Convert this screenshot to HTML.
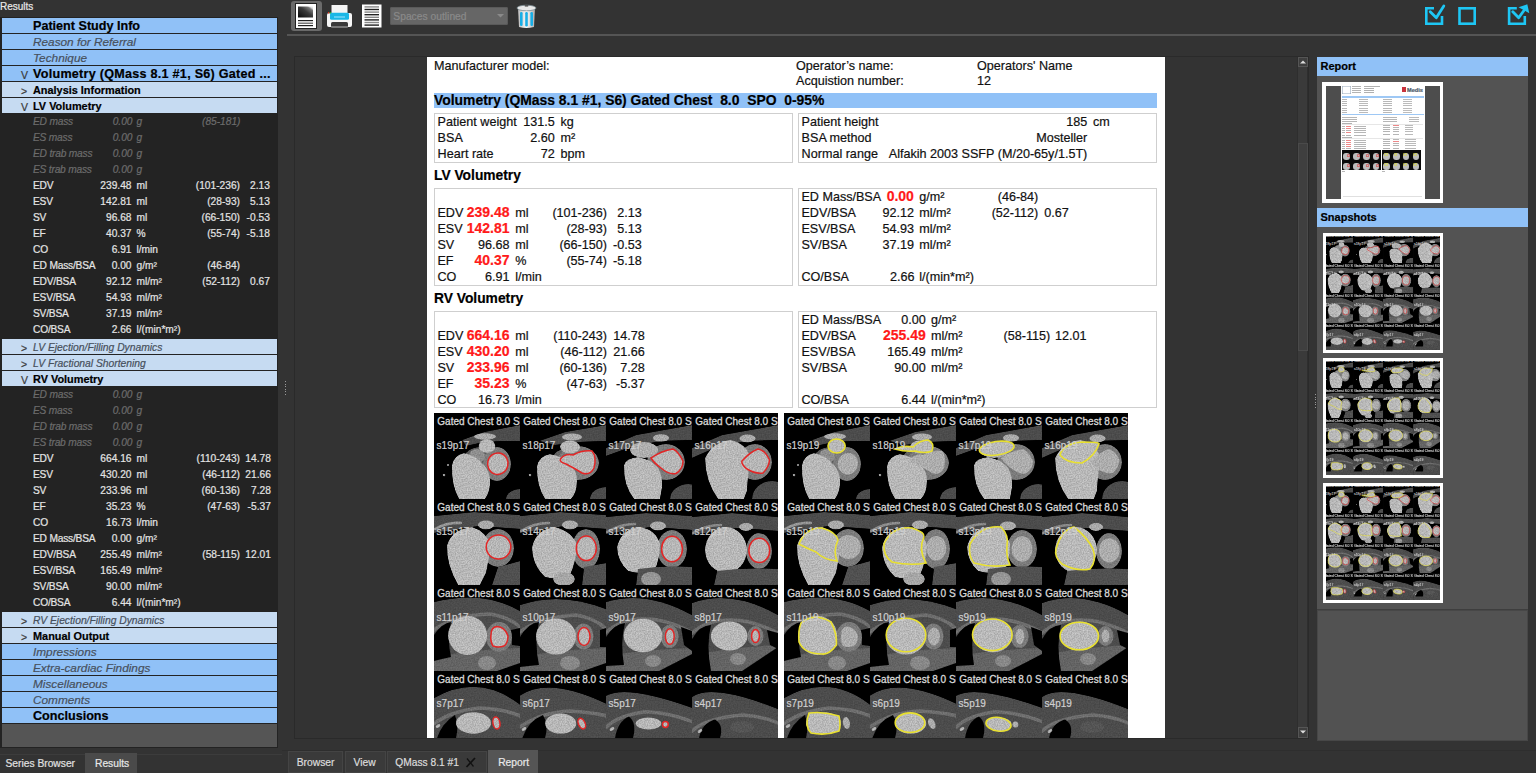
<!DOCTYPE html><html><head><meta charset="utf-8"><style>
html,body{margin:0;padding:0;}
body{width:1536px;height:773px;overflow:hidden;background:#333333;position:relative;font-family:"Liberation Sans",sans-serif;}
.t{position:absolute;white-space:pre;-webkit-text-stroke:0.2px currentColor;}
.r{position:absolute;}
</style></head><body>
<div class="t" style="top:1.73px;font-size:10px;line-height:10px;color:#e8e8e8;left:0.00px;">Results</div><div class="r" style="left:0px;top:17px;width:278px;height:731px;background:#232323;"></div><div class="r" style="left:2px;top:18px;width:275px;height:15px;background:#90c1f7;"></div><div class="t" style="top:20.33px;font-size:12.6px;line-height:12.6px;font-weight:bold;color:#000;left:33.00px;">Patient Study Info</div><div class="r" style="left:2px;top:34px;width:275px;height:15px;background:#90c1f7;"></div><div class="t" style="top:37.01px;font-size:11.8px;line-height:11.8px;font-style:italic;color:#47505c;left:33.00px;">Reason for Referral</div><div class="r" style="left:2px;top:50px;width:275px;height:15px;background:#90c1f7;"></div><div class="t" style="top:53.01px;font-size:11.8px;line-height:11.8px;font-style:italic;color:#47505c;left:33.00px;">Technique</div><div class="r" style="left:2px;top:66px;width:275px;height:15px;background:#90c1f7;"></div><div class="t" style="top:68.33px;font-size:12.6px;line-height:12.6px;font-weight:bold;color:#000;left:33.00px;letter-spacing:0.26px;">Volumetry (QMass 8.1 #1, S6) Gated ...</div><div class="t" style="top:70.11px;font-size:10.5px;line-height:10.5px;color:#3a3a3a;left:21.00px;">V</div><div class="r" style="left:2px;top:82px;width:275px;height:15px;background:#c6dbf2;"></div><div class="t" style="top:85.37px;font-size:10.9px;line-height:10.9px;font-weight:bold;color:#000;left:33.00px;">Analysis Information</div><div class="t" style="top:85.71px;font-size:10.5px;line-height:10.5px;color:#3a3a3a;left:21.00px;">></div><div class="r" style="left:2px;top:98px;width:275px;height:15px;background:#c6dbf2;"></div><div class="t" style="top:101.37px;font-size:10.9px;line-height:10.9px;font-weight:bold;color:#000;left:33.00px;">LV Volumetry</div><div class="t" style="top:101.71px;font-size:10.5px;line-height:10.5px;color:#3a3a3a;left:21.00px;">V</div><div class="t" style="top:116.67px;font-size:10.2px;line-height:10.2px;font-style:italic;color:#6c6c6c;left:33.00px;letter-spacing:-0.2px;">ED mass</div><div class="t" style="top:116.67px;font-size:10.2px;line-height:10.2px;font-style:italic;color:#6c6c6c;left:-267.50px;width:400px;text-align:right;">0.00</div><div class="t" style="top:116.67px;font-size:10.2px;line-height:10.2px;font-style:italic;color:#6c6c6c;left:136.50px;">g</div><div class="t" style="top:116.67px;font-size:10.2px;line-height:10.2px;font-style:italic;color:#6c6c6c;left:-159.50px;width:400px;text-align:right;">(85-181)</div><div class="t" style="top:132.67px;font-size:10.2px;line-height:10.2px;font-style:italic;color:#6c6c6c;left:33.00px;letter-spacing:-0.2px;">ES mass</div><div class="t" style="top:132.67px;font-size:10.2px;line-height:10.2px;font-style:italic;color:#6c6c6c;left:-267.50px;width:400px;text-align:right;">0.00</div><div class="t" style="top:132.67px;font-size:10.2px;line-height:10.2px;font-style:italic;color:#6c6c6c;left:136.50px;">g</div><div class="t" style="top:148.67px;font-size:10.2px;line-height:10.2px;font-style:italic;color:#6c6c6c;left:33.00px;letter-spacing:-0.2px;">ED trab mass</div><div class="t" style="top:148.67px;font-size:10.2px;line-height:10.2px;font-style:italic;color:#6c6c6c;left:-267.50px;width:400px;text-align:right;">0.00</div><div class="t" style="top:148.67px;font-size:10.2px;line-height:10.2px;font-style:italic;color:#6c6c6c;left:136.50px;">g</div><div class="t" style="top:164.67px;font-size:10.2px;line-height:10.2px;font-style:italic;color:#6c6c6c;left:33.00px;letter-spacing:-0.2px;">ES trab mass</div><div class="t" style="top:164.67px;font-size:10.2px;line-height:10.2px;font-style:italic;color:#6c6c6c;left:-267.50px;width:400px;text-align:right;">0.00</div><div class="t" style="top:164.67px;font-size:10.2px;line-height:10.2px;font-style:italic;color:#6c6c6c;left:136.50px;">g</div><div class="t" style="top:180.67px;font-size:10.2px;line-height:10.2px;color:#e4e4e4;left:33.00px;letter-spacing:-0.2px;">EDV</div><div class="t" style="top:180.67px;font-size:10.2px;line-height:10.2px;color:#e4e4e4;left:-268.50px;width:400px;text-align:right;">239.48</div><div class="t" style="top:180.67px;font-size:10.2px;line-height:10.2px;color:#e4e4e4;left:136.50px;">ml</div><div class="t" style="top:180.67px;font-size:10.2px;line-height:10.2px;color:#e4e4e4;left:-160.00px;width:400px;text-align:right;">(101-236)</div><div class="t" style="top:180.67px;font-size:10.2px;line-height:10.2px;color:#e4e4e4;left:-130.20px;width:400px;text-align:right;">2.13</div><div class="t" style="top:196.67px;font-size:10.2px;line-height:10.2px;color:#e4e4e4;left:33.00px;letter-spacing:-0.2px;">ESV</div><div class="t" style="top:196.67px;font-size:10.2px;line-height:10.2px;color:#e4e4e4;left:-268.50px;width:400px;text-align:right;">142.81</div><div class="t" style="top:196.67px;font-size:10.2px;line-height:10.2px;color:#e4e4e4;left:136.50px;">ml</div><div class="t" style="top:196.67px;font-size:10.2px;line-height:10.2px;color:#e4e4e4;left:-160.00px;width:400px;text-align:right;">(28-93)</div><div class="t" style="top:196.67px;font-size:10.2px;line-height:10.2px;color:#e4e4e4;left:-130.20px;width:400px;text-align:right;">5.13</div><div class="t" style="top:212.67px;font-size:10.2px;line-height:10.2px;color:#e4e4e4;left:33.00px;letter-spacing:-0.2px;">SV</div><div class="t" style="top:212.67px;font-size:10.2px;line-height:10.2px;color:#e4e4e4;left:-268.50px;width:400px;text-align:right;">96.68</div><div class="t" style="top:212.67px;font-size:10.2px;line-height:10.2px;color:#e4e4e4;left:136.50px;">ml</div><div class="t" style="top:212.67px;font-size:10.2px;line-height:10.2px;color:#e4e4e4;left:-160.00px;width:400px;text-align:right;">(66-150)</div><div class="t" style="top:212.67px;font-size:10.2px;line-height:10.2px;color:#e4e4e4;left:-130.20px;width:400px;text-align:right;">-0.53</div><div class="t" style="top:228.67px;font-size:10.2px;line-height:10.2px;color:#e4e4e4;left:33.00px;letter-spacing:-0.2px;">EF</div><div class="t" style="top:228.67px;font-size:10.2px;line-height:10.2px;color:#e4e4e4;left:-268.50px;width:400px;text-align:right;">40.37</div><div class="t" style="top:228.67px;font-size:10.2px;line-height:10.2px;color:#e4e4e4;left:136.50px;">%</div><div class="t" style="top:228.67px;font-size:10.2px;line-height:10.2px;color:#e4e4e4;left:-160.00px;width:400px;text-align:right;">(55-74)</div><div class="t" style="top:228.67px;font-size:10.2px;line-height:10.2px;color:#e4e4e4;left:-130.20px;width:400px;text-align:right;">-5.18</div><div class="t" style="top:244.67px;font-size:10.2px;line-height:10.2px;color:#e4e4e4;left:33.00px;letter-spacing:-0.2px;">CO</div><div class="t" style="top:244.67px;font-size:10.2px;line-height:10.2px;color:#e4e4e4;left:-268.50px;width:400px;text-align:right;">6.91</div><div class="t" style="top:244.67px;font-size:10.2px;line-height:10.2px;color:#e4e4e4;left:136.50px;">l/min</div><div class="t" style="top:260.67px;font-size:10.2px;line-height:10.2px;color:#e4e4e4;left:33.00px;letter-spacing:-0.2px;">ED Mass/BSA</div><div class="t" style="top:260.67px;font-size:10.2px;line-height:10.2px;color:#e4e4e4;left:-268.50px;width:400px;text-align:right;">0.00</div><div class="t" style="top:260.67px;font-size:10.2px;line-height:10.2px;color:#e4e4e4;left:136.50px;">g/m²</div><div class="t" style="top:260.67px;font-size:10.2px;line-height:10.2px;color:#e4e4e4;left:-160.00px;width:400px;text-align:right;">(46-84)</div><div class="t" style="top:276.67px;font-size:10.2px;line-height:10.2px;color:#e4e4e4;left:33.00px;letter-spacing:-0.2px;">EDV/BSA</div><div class="t" style="top:276.67px;font-size:10.2px;line-height:10.2px;color:#e4e4e4;left:-268.50px;width:400px;text-align:right;">92.12</div><div class="t" style="top:276.67px;font-size:10.2px;line-height:10.2px;color:#e4e4e4;left:136.50px;">ml/m²</div><div class="t" style="top:276.67px;font-size:10.2px;line-height:10.2px;color:#e4e4e4;left:-160.00px;width:400px;text-align:right;">(52-112)</div><div class="t" style="top:276.67px;font-size:10.2px;line-height:10.2px;color:#e4e4e4;left:-130.20px;width:400px;text-align:right;">0.67</div><div class="t" style="top:292.67px;font-size:10.2px;line-height:10.2px;color:#e4e4e4;left:33.00px;letter-spacing:-0.2px;">ESV/BSA</div><div class="t" style="top:292.67px;font-size:10.2px;line-height:10.2px;color:#e4e4e4;left:-268.50px;width:400px;text-align:right;">54.93</div><div class="t" style="top:292.67px;font-size:10.2px;line-height:10.2px;color:#e4e4e4;left:136.50px;">ml/m²</div><div class="t" style="top:308.67px;font-size:10.2px;line-height:10.2px;color:#e4e4e4;left:33.00px;letter-spacing:-0.2px;">SV/BSA</div><div class="t" style="top:308.67px;font-size:10.2px;line-height:10.2px;color:#e4e4e4;left:-268.50px;width:400px;text-align:right;">37.19</div><div class="t" style="top:308.67px;font-size:10.2px;line-height:10.2px;color:#e4e4e4;left:136.50px;">ml/m²</div><div class="t" style="top:324.67px;font-size:10.2px;line-height:10.2px;color:#e4e4e4;left:33.00px;letter-spacing:-0.2px;">CO/BSA</div><div class="t" style="top:324.67px;font-size:10.2px;line-height:10.2px;color:#e4e4e4;left:-268.50px;width:400px;text-align:right;">2.66</div><div class="t" style="top:324.67px;font-size:10.2px;line-height:10.2px;color:#e4e4e4;left:136.50px;">l/(min*m²)</div><div class="r" style="left:2px;top:339px;width:275px;height:15px;background:#c6dbf2;"></div><div class="t" style="top:342.88px;font-size:10.3px;line-height:10.3px;font-style:italic;color:#47505c;left:33.00px;">LV Ejection/Filling Dynamics</div><div class="t" style="top:342.71px;font-size:10.5px;line-height:10.5px;color:#3a3a3a;left:21.00px;">></div><div class="r" style="left:2px;top:355px;width:275px;height:15px;background:#c6dbf2;"></div><div class="t" style="top:358.88px;font-size:10.3px;line-height:10.3px;font-style:italic;color:#47505c;left:33.00px;">LV Fractional Shortening</div><div class="t" style="top:358.71px;font-size:10.5px;line-height:10.5px;color:#3a3a3a;left:21.00px;">></div><div class="r" style="left:2px;top:371px;width:275px;height:15px;background:#c6dbf2;"></div><div class="t" style="top:374.37px;font-size:10.9px;line-height:10.9px;font-weight:bold;color:#000;left:33.00px;">RV Volumetry</div><div class="t" style="top:374.71px;font-size:10.5px;line-height:10.5px;color:#3a3a3a;left:21.00px;">V</div><div class="t" style="top:389.67px;font-size:10.2px;line-height:10.2px;font-style:italic;color:#6c6c6c;left:33.00px;letter-spacing:-0.2px;">ED mass</div><div class="t" style="top:389.67px;font-size:10.2px;line-height:10.2px;font-style:italic;color:#6c6c6c;left:-267.50px;width:400px;text-align:right;">0.00</div><div class="t" style="top:389.67px;font-size:10.2px;line-height:10.2px;font-style:italic;color:#6c6c6c;left:136.50px;">g</div><div class="t" style="top:405.67px;font-size:10.2px;line-height:10.2px;font-style:italic;color:#6c6c6c;left:33.00px;letter-spacing:-0.2px;">ES mass</div><div class="t" style="top:405.67px;font-size:10.2px;line-height:10.2px;font-style:italic;color:#6c6c6c;left:-267.50px;width:400px;text-align:right;">0.00</div><div class="t" style="top:405.67px;font-size:10.2px;line-height:10.2px;font-style:italic;color:#6c6c6c;left:136.50px;">g</div><div class="t" style="top:421.67px;font-size:10.2px;line-height:10.2px;font-style:italic;color:#6c6c6c;left:33.00px;letter-spacing:-0.2px;">ED trab mass</div><div class="t" style="top:421.67px;font-size:10.2px;line-height:10.2px;font-style:italic;color:#6c6c6c;left:-267.50px;width:400px;text-align:right;">0.00</div><div class="t" style="top:421.67px;font-size:10.2px;line-height:10.2px;font-style:italic;color:#6c6c6c;left:136.50px;">g</div><div class="t" style="top:437.67px;font-size:10.2px;line-height:10.2px;font-style:italic;color:#6c6c6c;left:33.00px;letter-spacing:-0.2px;">ES trab mass</div><div class="t" style="top:437.67px;font-size:10.2px;line-height:10.2px;font-style:italic;color:#6c6c6c;left:-267.50px;width:400px;text-align:right;">0.00</div><div class="t" style="top:437.67px;font-size:10.2px;line-height:10.2px;font-style:italic;color:#6c6c6c;left:136.50px;">g</div><div class="t" style="top:453.67px;font-size:10.2px;line-height:10.2px;color:#e4e4e4;left:33.00px;letter-spacing:-0.2px;">EDV</div><div class="t" style="top:453.67px;font-size:10.2px;line-height:10.2px;color:#e4e4e4;left:-268.50px;width:400px;text-align:right;">664.16</div><div class="t" style="top:453.67px;font-size:10.2px;line-height:10.2px;color:#e4e4e4;left:136.50px;">ml</div><div class="t" style="top:453.67px;font-size:10.2px;line-height:10.2px;color:#e4e4e4;left:-160.00px;width:400px;text-align:right;">(110-243)</div><div class="t" style="top:453.67px;font-size:10.2px;line-height:10.2px;color:#e4e4e4;left:-129.20px;width:400px;text-align:right;">14.78</div><div class="t" style="top:469.67px;font-size:10.2px;line-height:10.2px;color:#e4e4e4;left:33.00px;letter-spacing:-0.2px;">ESV</div><div class="t" style="top:469.67px;font-size:10.2px;line-height:10.2px;color:#e4e4e4;left:-268.50px;width:400px;text-align:right;">430.20</div><div class="t" style="top:469.67px;font-size:10.2px;line-height:10.2px;color:#e4e4e4;left:136.50px;">ml</div><div class="t" style="top:469.67px;font-size:10.2px;line-height:10.2px;color:#e4e4e4;left:-160.00px;width:400px;text-align:right;">(46-112)</div><div class="t" style="top:469.67px;font-size:10.2px;line-height:10.2px;color:#e4e4e4;left:-129.20px;width:400px;text-align:right;">21.66</div><div class="t" style="top:485.67px;font-size:10.2px;line-height:10.2px;color:#e4e4e4;left:33.00px;letter-spacing:-0.2px;">SV</div><div class="t" style="top:485.67px;font-size:10.2px;line-height:10.2px;color:#e4e4e4;left:-268.50px;width:400px;text-align:right;">233.96</div><div class="t" style="top:485.67px;font-size:10.2px;line-height:10.2px;color:#e4e4e4;left:136.50px;">ml</div><div class="t" style="top:485.67px;font-size:10.2px;line-height:10.2px;color:#e4e4e4;left:-160.00px;width:400px;text-align:right;">(60-136)</div><div class="t" style="top:485.67px;font-size:10.2px;line-height:10.2px;color:#e4e4e4;left:-129.20px;width:400px;text-align:right;">7.28</div><div class="t" style="top:501.67px;font-size:10.2px;line-height:10.2px;color:#e4e4e4;left:33.00px;letter-spacing:-0.2px;">EF</div><div class="t" style="top:501.67px;font-size:10.2px;line-height:10.2px;color:#e4e4e4;left:-268.50px;width:400px;text-align:right;">35.23</div><div class="t" style="top:501.67px;font-size:10.2px;line-height:10.2px;color:#e4e4e4;left:136.50px;">%</div><div class="t" style="top:501.67px;font-size:10.2px;line-height:10.2px;color:#e4e4e4;left:-160.00px;width:400px;text-align:right;">(47-63)</div><div class="t" style="top:501.67px;font-size:10.2px;line-height:10.2px;color:#e4e4e4;left:-129.20px;width:400px;text-align:right;">-5.37</div><div class="t" style="top:517.67px;font-size:10.2px;line-height:10.2px;color:#e4e4e4;left:33.00px;letter-spacing:-0.2px;">CO</div><div class="t" style="top:517.67px;font-size:10.2px;line-height:10.2px;color:#e4e4e4;left:-268.50px;width:400px;text-align:right;">16.73</div><div class="t" style="top:517.67px;font-size:10.2px;line-height:10.2px;color:#e4e4e4;left:136.50px;">l/min</div><div class="t" style="top:533.67px;font-size:10.2px;line-height:10.2px;color:#e4e4e4;left:33.00px;letter-spacing:-0.2px;">ED Mass/BSA</div><div class="t" style="top:533.67px;font-size:10.2px;line-height:10.2px;color:#e4e4e4;left:-268.50px;width:400px;text-align:right;">0.00</div><div class="t" style="top:533.67px;font-size:10.2px;line-height:10.2px;color:#e4e4e4;left:136.50px;">g/m²</div><div class="t" style="top:549.67px;font-size:10.2px;line-height:10.2px;color:#e4e4e4;left:33.00px;letter-spacing:-0.2px;">EDV/BSA</div><div class="t" style="top:549.67px;font-size:10.2px;line-height:10.2px;color:#e4e4e4;left:-268.50px;width:400px;text-align:right;">255.49</div><div class="t" style="top:549.67px;font-size:10.2px;line-height:10.2px;color:#e4e4e4;left:136.50px;">ml/m²</div><div class="t" style="top:549.67px;font-size:10.2px;line-height:10.2px;color:#e4e4e4;left:-160.00px;width:400px;text-align:right;">(58-115)</div><div class="t" style="top:549.67px;font-size:10.2px;line-height:10.2px;color:#e4e4e4;left:-129.20px;width:400px;text-align:right;">12.01</div><div class="t" style="top:565.67px;font-size:10.2px;line-height:10.2px;color:#e4e4e4;left:33.00px;letter-spacing:-0.2px;">ESV/BSA</div><div class="t" style="top:565.67px;font-size:10.2px;line-height:10.2px;color:#e4e4e4;left:-268.50px;width:400px;text-align:right;">165.49</div><div class="t" style="top:565.67px;font-size:10.2px;line-height:10.2px;color:#e4e4e4;left:136.50px;">ml/m²</div><div class="t" style="top:581.67px;font-size:10.2px;line-height:10.2px;color:#e4e4e4;left:33.00px;letter-spacing:-0.2px;">SV/BSA</div><div class="t" style="top:581.67px;font-size:10.2px;line-height:10.2px;color:#e4e4e4;left:-268.50px;width:400px;text-align:right;">90.00</div><div class="t" style="top:581.67px;font-size:10.2px;line-height:10.2px;color:#e4e4e4;left:136.50px;">ml/m²</div><div class="t" style="top:597.67px;font-size:10.2px;line-height:10.2px;color:#e4e4e4;left:33.00px;letter-spacing:-0.2px;">CO/BSA</div><div class="t" style="top:597.67px;font-size:10.2px;line-height:10.2px;color:#e4e4e4;left:-268.50px;width:400px;text-align:right;">6.44</div><div class="t" style="top:597.67px;font-size:10.2px;line-height:10.2px;color:#e4e4e4;left:136.50px;">l/(min*m²)</div><div class="r" style="left:2px;top:612px;width:275px;height:15px;background:#c6dbf2;"></div><div class="t" style="top:615.88px;font-size:10.3px;line-height:10.3px;font-style:italic;color:#47505c;left:33.00px;">RV Ejection/Filling Dynamics</div><div class="t" style="top:615.71px;font-size:10.5px;line-height:10.5px;color:#3a3a3a;left:21.00px;">></div><div class="r" style="left:2px;top:628px;width:275px;height:15px;background:#c6dbf2;"></div><div class="t" style="top:631.37px;font-size:10.9px;line-height:10.9px;font-weight:bold;color:#000;left:33.00px;">Manual Output</div><div class="t" style="top:631.71px;font-size:10.5px;line-height:10.5px;color:#3a3a3a;left:21.00px;">></div><div class="r" style="left:2px;top:644px;width:275px;height:15px;background:#90c1f7;"></div><div class="t" style="top:647.01px;font-size:11.8px;line-height:11.8px;font-style:italic;color:#47505c;left:33.00px;">Impressions</div><div class="r" style="left:2px;top:660px;width:275px;height:15px;background:#90c1f7;"></div><div class="t" style="top:663.01px;font-size:11.8px;line-height:11.8px;font-style:italic;color:#47505c;left:33.00px;">Extra-cardiac Findings</div><div class="r" style="left:2px;top:676px;width:275px;height:15px;background:#90c1f7;"></div><div class="t" style="top:679.01px;font-size:11.8px;line-height:11.8px;font-style:italic;color:#47505c;left:33.00px;">Miscellaneous</div><div class="r" style="left:2px;top:692px;width:275px;height:15px;background:#90c1f7;"></div><div class="t" style="top:695.01px;font-size:11.8px;line-height:11.8px;font-style:italic;color:#47505c;left:33.00px;">Comments</div><div class="r" style="left:2px;top:708px;width:275px;height:15px;background:#90c1f7;"></div><div class="t" style="top:710.33px;font-size:12.6px;line-height:12.6px;font-weight:bold;color:#000;left:33.00px;">Conclusions</div><div class="r" style="left:2px;top:724px;width:275px;height:23px;background:#555555;"></div><div class="r" style="left:278px;top:17px;width:16px;height:731px;background:#333333;"></div><div class="r" style="left:284.5px;top:381.0px;width:1.2px;height:1.2px;background:#9a9a9a;"></div><div class="r" style="left:284.5px;top:383.5px;width:1.2px;height:1.2px;background:#9a9a9a;"></div><div class="r" style="left:284.5px;top:386.0px;width:1.2px;height:1.2px;background:#9a9a9a;"></div><div class="r" style="left:284.5px;top:388.5px;width:1.2px;height:1.2px;background:#9a9a9a;"></div><div class="r" style="left:284.5px;top:391.0px;width:1.2px;height:1.2px;background:#9a9a9a;"></div><div class="r" style="left:284.5px;top:393.5px;width:1.2px;height:1.2px;background:#9a9a9a;"></div><div class="r" style="left:1314.5px;top:394.0px;width:1.2px;height:1.2px;background:#9a9a9a;"></div><div class="r" style="left:1314.5px;top:396.5px;width:1.2px;height:1.2px;background:#9a9a9a;"></div><div class="r" style="left:1314.5px;top:399.0px;width:1.2px;height:1.2px;background:#9a9a9a;"></div><div class="r" style="left:1314.5px;top:401.5px;width:1.2px;height:1.2px;background:#9a9a9a;"></div><div class="r" style="left:1314.5px;top:404.0px;width:1.2px;height:1.2px;background:#9a9a9a;"></div><div class="r" style="left:1314.5px;top:406.5px;width:1.2px;height:1.2px;background:#9a9a9a;"></div><div class="r" style="left:0px;top:754px;width:282px;height:1px;background:#3c3c3c;"></div><div class="r" style="left:85px;top:753px;width:52px;height:20px;background:#4a4a4a;"></div><div class="t" style="top:759.32px;font-size:10.25px;line-height:10.25px;color:#e0e0e0;left:5.50px;">Series Browser</div><div class="t" style="top:759.32px;font-size:10.25px;line-height:10.25px;color:#e8e8e8;left:95.00px;">Results</div><div class="r" style="left:287px;top:34px;width:1249px;height:2px;background:#555555;"></div><div class="r" style="left:291px;top:1px;width:31px;height:30px;background:#6a6a6a;border-radius:3px;"></div><svg style="position:absolute;left:295px;top:3px" width="22" height="26" viewBox="0 0 22 26"><rect x="0.5" y="0.5" width="21" height="25" fill="#fff" stroke="#222" stroke-width="1"/><defs><linearGradient id="pg" x1="0" y1="1" x2="1" y2="0"><stop offset="0" stop-color="#0a0a0a"/><stop offset="0.55" stop-color="#3a3a3a"/><stop offset="0.8" stop-color="#777"/><stop offset="0.9" stop-color="#ddd"/><stop offset="1" stop-color="#eee"/></linearGradient></defs><rect x="3" y="3.5" width="15" height="11" fill="url(#pg)"/><rect x="3" y="17" width="15" height="1.2" fill="#222"/><rect x="3" y="19.5" width="15" height="1.5" fill="#777"/><rect x="3" y="22" width="15" height="1.2" fill="#222"/></svg><svg style="position:absolute;left:326px;top:4px" width="27" height="25" viewBox="0 0 27 25"><rect x="5.5" y="1" width="16" height="9" fill="#f4f4f4"/><rect x="1" y="9" width="25" height="14" rx="2" fill="#f6f6f6"/><rect x="4" y="8.7" width="19" height="7" rx="1.5" fill="#1ab7e6"/><rect x="8" y="12.5" width="11" height="1" fill="#9fe6ff"/><rect x="5" y="18" width="17" height="5" rx="1.5" fill="#3a3a3a"/><rect x="5" y="22" width="17" height="2" rx="1" fill="#777"/><rect x="2" y="8" width="1.5" height="1.5" fill="#d22"/><rect x="3.5" y="8" width="1.5" height="1.5" fill="#2a2"/></svg><svg style="position:absolute;left:362px;top:4px" width="20" height="24" viewBox="0 0 20 24"><rect x="0" y="0.5" width="19.5" height="23" fill="#fff"/><rect x="2.5" y="2.2" width="14.5" height="1.4" fill="#888"/><rect x="2.5" y="4.8" width="14.5" height="1.4" fill="#222"/><rect x="2.5" y="7.4" width="14.5" height="1.4" fill="#888"/><rect x="2.5" y="10.0" width="14.5" height="1.4" fill="#222"/><rect x="2.5" y="12.6" width="14.5" height="1.4" fill="#888"/><rect x="2.5" y="15.2" width="14.5" height="1.4" fill="#222"/><rect x="2.5" y="17.8" width="14.5" height="1.4" fill="#888"/><rect x="2.5" y="20.4" width="14.5" height="1.4" fill="#222"/></svg><div class="r" style="left:390px;top:7px;width:118px;height:18px;background:#666666;border-radius:2px;box-shadow:inset 0 0 0 1px #5a5a5a;"></div><div class="t" style="top:11.88px;font-size:10.3px;line-height:10.3px;color:#8a8a8a;left:393.30px;">Spaces outlined</div><svg style="position:absolute;left:497px;top:14px" width="7" height="4" viewBox="0 0 7 4"><path d="M0 0H7L3.5 3.5Z" fill="#8a8a8a"/></svg><svg style="position:absolute;left:516px;top:4px" width="21" height="25" viewBox="0 0 21 25"><defs><linearGradient id="tg" x1="0" x2="1"><stop offset="0" stop-color="#bbb"/><stop offset="0.5" stop-color="#fafafa"/><stop offset="1" stop-color="#aaa"/></linearGradient></defs><path d="M2 4 L19 4 L18 23 Q10.5 25 3 23 Z" fill="url(#tg)"/><ellipse cx="10.5" cy="4" rx="9.5" ry="2.8" fill="#e8e8e8" stroke="#7a8a90" stroke-width="0.8"/><rect x="8.8" y="1" width="3.4" height="1.6" fill="#555"/><rect x="4" y="8" width="2.6" height="14" rx="1.2" fill="#18aee6"/><rect x="9.2" y="8" width="2.6" height="14.5" rx="1.2" fill="#18aee6"/><rect x="14.4" y="8" width="2.6" height="14" rx="1.2" fill="#18aee6"/></svg><svg style="position:absolute;left:1422px;top:3px" width="110" height="25" viewBox="1422 3 110 25"><path d="M1434 8.3 H1426.3 V23.7 H1442 V16" fill="none" stroke="#1ec6f4" stroke-width="2.6"/><path d="M1430.2 11.8 L1436.3 17.8 L1443.8 6" fill="none" stroke="#1ec6f4" stroke-width="2.8" stroke-linecap="round" stroke-linejoin="round"/><rect x="1459.5" y="8.3" width="15.2" height="15.4" fill="none" stroke="#1ec6f4" stroke-width="2.6"/><path d="M1516.8 8.3 H1509.1 V23.7 H1524.8 V16" fill="none" stroke="#1ec6f4" stroke-width="2.6"/><path d="M1512.8 11.8 L1518.7 17.8 L1525 9" fill="none" stroke="#1ec6f4" stroke-width="2.8" stroke-linecap="round" stroke-linejoin="round"/><path d="M1518.5 7.2 L1527.3 4.3 L1529.3 13.2 Z" fill="#1ec6f4"/></svg><div class="r" style="left:294px;top:56px;width:1015px;height:683px;background:#333333;box-shadow:inset 0 0 0 1px #2a2a2a;"></div><div class="r" style="left:427px;top:57px;width:738px;height:681px;background:#ffffff;"></div><div class="r" style="left:1297px;top:57px;width:11px;height:681px;background:#3a3a3a;box-shadow:inset 0 0 0 1px #2e2e2e;"></div><div class="r" style="left:1298px;top:57px;width:10px;height:10px;background:#3e3e3e;box-shadow:inset 0 0 0 1px #555;"></div><svg style="position:absolute;left:1299px;top:59px" width="8" height="6"><path d="M1 4.5 H7 L4 1.5Z" fill="#ddd"/></svg><div class="r" style="left:1298px;top:143px;width:10px;height:208px;background:#3f3f3f;box-shadow:inset 0 0 0 1px #4a4a4a;"></div><div class="r" style="left:1298px;top:727px;width:10px;height:11px;background:#3e3e3e;box-shadow:inset 0 0 0 1px #555;"></div><svg style="position:absolute;left:1299px;top:729px" width="8" height="6"><path d="M1 1.5 H7 L4 4.5Z" fill="#ddd"/></svg><div class="t" style="top:59.63px;font-size:12.6px;line-height:12.6px;color:#111;left:434.00px;">Manufacturer model:</div><div class="t" style="top:59.63px;font-size:12.6px;line-height:12.6px;color:#111;left:796.00px;">Operator’s name:</div><div class="t" style="top:59.63px;font-size:12.6px;line-height:12.6px;color:#111;left:977.00px;">Operators' Name</div><div class="t" style="top:75.03px;font-size:12.6px;line-height:12.6px;color:#111;left:796.00px;">Acquistion number:</div><div class="t" style="top:75.03px;font-size:12.6px;line-height:12.6px;color:#111;left:977.00px;">12</div><div class="r" style="left:434px;top:93px;width:723px;height:15px;background:#90c1f7;"></div><div class="t" style="top:94.23px;font-size:13.9px;line-height:13.9px;font-weight:bold;color:#000;left:434.00px;">Volumetry (QMass 8.1 #1, S6) Gated Chest  8.0  SPO  0-95%</div><div class="r" style="left:434px;top:113px;width:359px;height:50px;background:transparent;box-shadow:inset 0 0 0 1px #cfcfcf;"></div><div class="r" style="left:798px;top:113px;width:359px;height:50px;background:transparent;box-shadow:inset 0 0 0 1px #cfcfcf;"></div><div class="t" style="top:116.33px;font-size:12.6px;line-height:12.6px;color:#111;left:437.60px;">Patient weight</div><div class="t" style="top:116.33px;font-size:12.6px;line-height:12.6px;color:#111;left:154.80px;width:400px;text-align:right;">131.5</div><div class="t" style="top:116.33px;font-size:12.6px;line-height:12.6px;color:#111;left:560.50px;">kg</div><div class="t" style="top:132.33px;font-size:12.6px;line-height:12.6px;color:#111;left:437.60px;">BSA</div><div class="t" style="top:132.33px;font-size:12.6px;line-height:12.6px;color:#111;left:154.80px;width:400px;text-align:right;">2.60</div><div class="t" style="top:132.33px;font-size:12.6px;line-height:12.6px;color:#111;left:560.50px;">m²</div><div class="t" style="top:148.33px;font-size:12.6px;line-height:12.6px;color:#111;left:437.60px;">Heart rate</div><div class="t" style="top:148.33px;font-size:12.6px;line-height:12.6px;color:#111;left:154.80px;width:400px;text-align:right;">72</div><div class="t" style="top:148.33px;font-size:12.6px;line-height:12.6px;color:#111;left:560.50px;">bpm</div><div class="t" style="top:116.33px;font-size:12.6px;line-height:12.6px;color:#111;left:801.60px;">Patient height</div><div class="t" style="top:116.33px;font-size:12.6px;line-height:12.6px;color:#111;left:687.30px;width:400px;text-align:right;">185</div><div class="t" style="top:116.33px;font-size:12.6px;line-height:12.6px;color:#111;left:1093.00px;">cm</div><div class="t" style="top:132.33px;font-size:12.6px;line-height:12.6px;color:#111;left:801.60px;">BSA method</div><div class="t" style="top:132.33px;font-size:12.6px;line-height:12.6px;color:#111;left:687.30px;width:400px;text-align:right;">Mosteller</div><div class="t" style="top:148.33px;font-size:12.6px;line-height:12.6px;color:#111;left:801.60px;">Normal range</div><div class="t" style="top:148.33px;font-size:12.6px;line-height:12.6px;color:#111;left:687.30px;width:400px;text-align:right;">Alfakih 2003 SSFP (M/20-65y/1.5T)</div><div class="t" style="top:169.02px;font-size:13.8px;line-height:13.8px;font-weight:bold;color:#000;left:434.00px;">LV Volumetry</div><div class="r" style="left:434px;top:188px;width:359px;height:98px;background:transparent;box-shadow:inset 0 0 0 1px #cfcfcf;"></div><div class="r" style="left:798px;top:188px;width:359px;height:98px;background:transparent;box-shadow:inset 0 0 0 1px #cfcfcf;"></div><div class="t" style="top:291.82px;font-size:13.8px;line-height:13.8px;font-weight:bold;color:#000;left:434.00px;">RV Volumetry</div><div class="r" style="left:434px;top:311px;width:359px;height:97px;background:transparent;box-shadow:inset 0 0 0 1px #cfcfcf;"></div><div class="r" style="left:798px;top:311px;width:359px;height:97px;background:transparent;box-shadow:inset 0 0 0 1px #cfcfcf;"></div><div class="t" style="top:206.63px;font-size:12.6px;line-height:12.6px;color:#111;left:437.40px;">EDV</div><div class="t" style="top:205.45px;font-size:14px;line-height:14px;font-weight:bold;color:#ff1a1a;left:109.60px;width:400px;text-align:right;">239.48</div><div class="t" style="top:206.63px;font-size:12.6px;line-height:12.6px;color:#111;left:515.20px;">ml</div><div class="t" style="top:206.63px;font-size:12.6px;line-height:12.6px;color:#111;left:207.00px;width:400px;text-align:right;">(101-236)</div><div class="t" style="top:206.63px;font-size:12.6px;line-height:12.6px;color:#111;left:241.80px;width:400px;text-align:right;">2.13</div><div class="t" style="top:222.63px;font-size:12.6px;line-height:12.6px;color:#111;left:437.40px;">ESV</div><div class="t" style="top:221.45px;font-size:14px;line-height:14px;font-weight:bold;color:#ff1a1a;left:109.60px;width:400px;text-align:right;">142.81</div><div class="t" style="top:222.63px;font-size:12.6px;line-height:12.6px;color:#111;left:515.20px;">ml</div><div class="t" style="top:222.63px;font-size:12.6px;line-height:12.6px;color:#111;left:207.00px;width:400px;text-align:right;">(28-93)</div><div class="t" style="top:222.63px;font-size:12.6px;line-height:12.6px;color:#111;left:241.80px;width:400px;text-align:right;">5.13</div><div class="t" style="top:238.63px;font-size:12.6px;line-height:12.6px;color:#111;left:437.40px;">SV</div><div class="t" style="top:238.63px;font-size:12.6px;line-height:12.6px;color:#111;left:109.60px;width:400px;text-align:right;">96.68</div><div class="t" style="top:238.63px;font-size:12.6px;line-height:12.6px;color:#111;left:515.20px;">ml</div><div class="t" style="top:238.63px;font-size:12.6px;line-height:12.6px;color:#111;left:207.00px;width:400px;text-align:right;">(66-150)</div><div class="t" style="top:238.63px;font-size:12.6px;line-height:12.6px;color:#111;left:241.80px;width:400px;text-align:right;">-0.53</div><div class="t" style="top:254.63px;font-size:12.6px;line-height:12.6px;color:#111;left:437.40px;">EF</div><div class="t" style="top:253.45px;font-size:14px;line-height:14px;font-weight:bold;color:#ff1a1a;left:109.60px;width:400px;text-align:right;">40.37</div><div class="t" style="top:254.63px;font-size:12.6px;line-height:12.6px;color:#111;left:515.20px;">%</div><div class="t" style="top:254.63px;font-size:12.6px;line-height:12.6px;color:#111;left:207.00px;width:400px;text-align:right;">(55-74)</div><div class="t" style="top:254.63px;font-size:12.6px;line-height:12.6px;color:#111;left:241.80px;width:400px;text-align:right;">-5.18</div><div class="t" style="top:270.63px;font-size:12.6px;line-height:12.6px;color:#111;left:437.40px;">CO</div><div class="t" style="top:270.63px;font-size:12.6px;line-height:12.6px;color:#111;left:109.60px;width:400px;text-align:right;">6.91</div><div class="t" style="top:270.63px;font-size:12.6px;line-height:12.6px;color:#111;left:515.20px;">l/min</div><div class="t" style="top:329.63px;font-size:12.6px;line-height:12.6px;color:#111;left:437.40px;">EDV</div><div class="t" style="top:328.45px;font-size:14px;line-height:14px;font-weight:bold;color:#ff1a1a;left:109.60px;width:400px;text-align:right;">664.16</div><div class="t" style="top:329.63px;font-size:12.6px;line-height:12.6px;color:#111;left:515.20px;">ml</div><div class="t" style="top:329.63px;font-size:12.6px;line-height:12.6px;color:#111;left:207.00px;width:400px;text-align:right;">(110-243)</div><div class="t" style="top:329.63px;font-size:12.6px;line-height:12.6px;color:#111;left:244.80px;width:400px;text-align:right;">14.78</div><div class="t" style="top:345.63px;font-size:12.6px;line-height:12.6px;color:#111;left:437.40px;">ESV</div><div class="t" style="top:344.45px;font-size:14px;line-height:14px;font-weight:bold;color:#ff1a1a;left:109.60px;width:400px;text-align:right;">430.20</div><div class="t" style="top:345.63px;font-size:12.6px;line-height:12.6px;color:#111;left:515.20px;">ml</div><div class="t" style="top:345.63px;font-size:12.6px;line-height:12.6px;color:#111;left:207.00px;width:400px;text-align:right;">(46-112)</div><div class="t" style="top:345.63px;font-size:12.6px;line-height:12.6px;color:#111;left:244.80px;width:400px;text-align:right;">21.66</div><div class="t" style="top:361.63px;font-size:12.6px;line-height:12.6px;color:#111;left:437.40px;">SV</div><div class="t" style="top:360.45px;font-size:14px;line-height:14px;font-weight:bold;color:#ff1a1a;left:109.60px;width:400px;text-align:right;">233.96</div><div class="t" style="top:361.63px;font-size:12.6px;line-height:12.6px;color:#111;left:515.20px;">ml</div><div class="t" style="top:361.63px;font-size:12.6px;line-height:12.6px;color:#111;left:207.00px;width:400px;text-align:right;">(60-136)</div><div class="t" style="top:361.63px;font-size:12.6px;line-height:12.6px;color:#111;left:244.80px;width:400px;text-align:right;">7.28</div><div class="t" style="top:377.63px;font-size:12.6px;line-height:12.6px;color:#111;left:437.40px;">EF</div><div class="t" style="top:376.45px;font-size:14px;line-height:14px;font-weight:bold;color:#ff1a1a;left:109.60px;width:400px;text-align:right;">35.23</div><div class="t" style="top:377.63px;font-size:12.6px;line-height:12.6px;color:#111;left:515.20px;">%</div><div class="t" style="top:377.63px;font-size:12.6px;line-height:12.6px;color:#111;left:207.00px;width:400px;text-align:right;">(47-63)</div><div class="t" style="top:377.63px;font-size:12.6px;line-height:12.6px;color:#111;left:244.80px;width:400px;text-align:right;">-5.37</div><div class="t" style="top:393.63px;font-size:12.6px;line-height:12.6px;color:#111;left:437.40px;">CO</div><div class="t" style="top:393.63px;font-size:12.6px;line-height:12.6px;color:#111;left:109.60px;width:400px;text-align:right;">16.73</div><div class="t" style="top:393.63px;font-size:12.6px;line-height:12.6px;color:#111;left:515.20px;">l/min</div><div class="t" style="top:190.63px;font-size:12.6px;line-height:12.6px;color:#111;left:801.40px;">ED Mass/BSA</div><div class="t" style="top:189.45px;font-size:14px;line-height:14px;font-weight:bold;color:#ff1a1a;left:513.90px;width:400px;text-align:right;">0.00</div><div class="t" style="top:190.63px;font-size:12.6px;line-height:12.6px;color:#111;left:919.30px;">g/m²</div><div class="t" style="top:190.63px;font-size:12.6px;line-height:12.6px;color:#111;left:638.30px;width:400px;text-align:right;">(46-84)</div><div class="t" style="top:206.63px;font-size:12.6px;line-height:12.6px;color:#111;left:801.40px;">EDV/BSA</div><div class="t" style="top:206.63px;font-size:12.6px;line-height:12.6px;color:#111;left:513.90px;width:400px;text-align:right;">92.12</div><div class="t" style="top:206.63px;font-size:12.6px;line-height:12.6px;color:#111;left:919.30px;">ml/m²</div><div class="t" style="top:206.63px;font-size:12.6px;line-height:12.6px;color:#111;left:638.30px;width:400px;text-align:right;">(52-112)</div><div class="t" style="top:206.63px;font-size:12.6px;line-height:12.6px;color:#111;left:668.70px;width:400px;text-align:right;">0.67</div><div class="t" style="top:222.63px;font-size:12.6px;line-height:12.6px;color:#111;left:801.40px;">ESV/BSA</div><div class="t" style="top:222.63px;font-size:12.6px;line-height:12.6px;color:#111;left:513.90px;width:400px;text-align:right;">54.93</div><div class="t" style="top:222.63px;font-size:12.6px;line-height:12.6px;color:#111;left:919.30px;">ml/m²</div><div class="t" style="top:238.63px;font-size:12.6px;line-height:12.6px;color:#111;left:801.40px;">SV/BSA</div><div class="t" style="top:238.63px;font-size:12.6px;line-height:12.6px;color:#111;left:513.90px;width:400px;text-align:right;">37.19</div><div class="t" style="top:238.63px;font-size:12.6px;line-height:12.6px;color:#111;left:919.30px;">ml/m²</div><div class="t" style="top:270.63px;font-size:12.6px;line-height:12.6px;color:#111;left:801.40px;">CO/BSA</div><div class="t" style="top:270.63px;font-size:12.6px;line-height:12.6px;color:#111;left:514.50px;width:400px;text-align:right;">2.66</div><div class="t" style="top:270.63px;font-size:12.6px;line-height:12.6px;color:#111;left:919.30px;">l/(min*m²)</div><div class="t" style="top:313.63px;font-size:12.6px;line-height:12.6px;color:#111;left:801.40px;">ED Mass/BSA</div><div class="t" style="top:313.63px;font-size:12.6px;line-height:12.6px;color:#111;left:525.80px;width:400px;text-align:right;">0.00</div><div class="t" style="top:313.63px;font-size:12.6px;line-height:12.6px;color:#111;left:930.90px;">g/m²</div><div class="t" style="top:329.63px;font-size:12.6px;line-height:12.6px;color:#111;left:801.40px;">EDV/BSA</div><div class="t" style="top:328.45px;font-size:14px;line-height:14px;font-weight:bold;color:#ff1a1a;left:525.80px;width:400px;text-align:right;">255.49</div><div class="t" style="top:329.63px;font-size:12.6px;line-height:12.6px;color:#111;left:930.90px;">ml/m²</div><div class="t" style="top:329.63px;font-size:12.6px;line-height:12.6px;color:#111;left:650.20px;width:400px;text-align:right;">(58-115)</div><div class="t" style="top:329.63px;font-size:12.6px;line-height:12.6px;color:#111;left:686.50px;width:400px;text-align:right;">12.01</div><div class="t" style="top:345.63px;font-size:12.6px;line-height:12.6px;color:#111;left:801.40px;">ESV/BSA</div><div class="t" style="top:345.63px;font-size:12.6px;line-height:12.6px;color:#111;left:525.80px;width:400px;text-align:right;">165.49</div><div class="t" style="top:345.63px;font-size:12.6px;line-height:12.6px;color:#111;left:930.90px;">ml/m²</div><div class="t" style="top:361.63px;font-size:12.6px;line-height:12.6px;color:#111;left:801.40px;">SV/BSA</div><div class="t" style="top:361.63px;font-size:12.6px;line-height:12.6px;color:#111;left:525.80px;width:400px;text-align:right;">90.00</div><div class="t" style="top:361.63px;font-size:12.6px;line-height:12.6px;color:#111;left:930.90px;">ml/m²</div><div class="t" style="top:393.63px;font-size:12.6px;line-height:12.6px;color:#111;left:801.40px;">CO/BSA</div><div class="t" style="top:393.63px;font-size:12.6px;line-height:12.6px;color:#111;left:525.80px;width:400px;text-align:right;">6.44</div><div class="t" style="top:393.63px;font-size:12.6px;line-height:12.6px;color:#111;left:930.90px;">l/(min*m²)</div><svg width="0" height="0" style="position:absolute"><defs><filter id="bl" x="0" y="0" width="100%" height="100%"><feGaussianBlur in="SourceGraphic" stdDeviation="0.5" result="b"/><feTurbulence type="fractalNoise" baseFrequency="0.75" numOctaves="2" seed="7" result="n"/><feColorMatrix in="n" type="matrix" values="0 0 0 0 0  0 0 0 0 0  0 0 0 0 0  0 0 0 1.6 -0.25" result="na"/><feComposite in="b" in2="na" operator="arithmetic" k1="0" k2="1" k3="-0.35" k4="0" result="c"/><feComposite in="c" in2="b" operator="in"/></filter></defs></svg><div style="position:absolute;left:434px;top:413px;width:695px;height:325px;overflow:hidden;"><svg style="position:absolute;left:0px;top:0px" width="86" height="86" viewBox="0 0 86 86"><rect width="86" height="86" fill="#000"/><g filter="url(#bl)"><path d="M28 27 L50 19 L86 12 L86 28 L70 28 L50 29 L32 33 Z" fill="#545454"/><ellipse cx="51" cy="23.5" rx="11" ry="3.2" fill="#c0c0c0"/><ellipse cx="46" cy="46" rx="16" ry="12" fill="#666"/><ellipse cx="63" cy="51" rx="14" ry="17" fill="#8a8a8a"/><ellipse cx="43" cy="43" rx="8" ry="7" fill="#a0a0a0"/><ellipse cx="53" cy="33" rx="8.5" ry="6.8" fill="#cfcfcf"/><path d="M18 52 Q20 42 30 40 Q40 42 48 50 Q55 57 56 66 Q57 78 51 86 L25 86 Q17 72 18 52 Z" fill="#cfcfcf"/><ellipse cx="86" cy="86" rx="14" ry="10" fill="#555"/><ellipse cx="10" cy="62" rx="1.5" ry="1.5" fill="#aaa"/><ellipse cx="14" cy="52" rx="1.2" ry="1.2" fill="#999"/><ellipse cx="63.8" cy="50.7" rx="10.2" ry="10.8" transform="rotate(15 63.8 50.7)" fill="#cdcdcd"/></g><ellipse cx="63.8" cy="50.7" rx="10.2" ry="10.8" transform="rotate(15 63.8 50.7)" fill="none" stroke="#e32626" stroke-width="1.5"/><text x="3.3" y="11.8" font-size="10.0" fill="#d8d8d8" stroke="#d8d8d8" stroke-width="0.3" font-family="Liberation Sans">Gated Chest 8.0 SPO</text><text x="2.6" y="35.8" font-size="10" fill="#d0d0d0" stroke="#d0d0d0" stroke-width="0.2" font-family="Liberation Sans">s19p17</text></svg><svg style="position:absolute;left:86px;top:0px" width="86" height="86" viewBox="0 0 86 86"><rect width="86" height="86" fill="#000"/><g filter="url(#bl)"><path d="M19 28 L45 19 L86 12 L86 28 L60 29 L35 32 Z" fill="#545454"/><ellipse cx="52" cy="24" rx="10" ry="3.6" fill="#c0c0c0"/><ellipse cx="45" cy="45" rx="12" ry="9" fill="#6e6e6e"/><ellipse cx="58" cy="50" rx="21" ry="17" fill="#8a8a8a"/><ellipse cx="50" cy="34" rx="10" ry="6.5" fill="#cfcfcf"/><path d="M17 53 Q19 43 30 41 Q42 43 50 51 Q57 58 57 68 Q57 80 51 86 L25 86 Q16 72 17 53 Z" fill="#cfcfcf"/><ellipse cx="86" cy="86" rx="16" ry="12" fill="#555"/><ellipse cx="10" cy="62" rx="1.5" ry="1.5" fill="#aaa"/><path d="M40.5 46 Q45 40 53 42 Q62 37 72 38 Q77 44 74 55 Q70 63 62 60 Q54 55 46 51 Q39 49 40.5 46 Z" fill="#cdcdcd"/></g><path d="M40.5 46 Q45 40 53 42 Q62 37 72 38 Q77 44 74 55 Q70 63 62 60 Q54 55 46 51 Q39 49 40.5 46 Z" fill="none" stroke="#e32626" stroke-width="1.5"/><text x="3.3" y="11.8" font-size="10.0" fill="#d8d8d8" stroke="#d8d8d8" stroke-width="0.3" font-family="Liberation Sans">Gated Chest 8.0 SPO</text><text x="2.6" y="35.8" font-size="10" fill="#d0d0d0" stroke="#d0d0d0" stroke-width="0.2" font-family="Liberation Sans">s18p17</text></svg><svg style="position:absolute;left:172px;top:0px" width="86" height="86" viewBox="0 0 86 86"><rect width="86" height="86" fill="#000"/><g filter="url(#bl)"><path d="M0 35 L30 22 L86 12 L86 27 L55 28 L25 34 L0 43 Z" fill="#545454"/><ellipse cx="55" cy="25" rx="8" ry="3.8" fill="#c0c0c0"/><ellipse cx="60" cy="49" rx="19" ry="18" fill="#8a8a8a"/><ellipse cx="38" cy="37" rx="14" ry="8" fill="#c4c4c4"/><path d="M18 52 Q20 45 32 44 Q45 46 52 55 Q57 63 56 75 L54 86 L28 86 Q17 72 18 52 Z" fill="#cfcfcf"/><ellipse cx="82" cy="86" rx="18" ry="15" fill="#555"/><path d="M45 45 Q55 38 67 36 Q72 38 77 48 Q77 56 70 60.5 Q63 62 55 55 Q48 50 45 45 Z" fill="#cdcdcd"/></g><path d="M45 45 Q55 38 67 36 Q72 38 77 48 Q77 56 70 60.5 Q63 62 55 55 Q48 50 45 45 Z" fill="none" stroke="#e32626" stroke-width="1.5"/><text x="3.3" y="11.8" font-size="10.0" fill="#d8d8d8" stroke="#d8d8d8" stroke-width="0.3" font-family="Liberation Sans">Gated Chest 8.0 SPO</text><text x="2.6" y="35.8" font-size="10" fill="#d0d0d0" stroke="#d0d0d0" stroke-width="0.2" font-family="Liberation Sans">s17p17</text></svg><svg style="position:absolute;left:258px;top:0px" width="86" height="86" viewBox="0 0 86 86"><rect width="86" height="86" fill="#000"/><g filter="url(#bl)"><path d="M0 35 L30 22 L86 12 L86 27 L55 28 L25 34 L0 45 Z" fill="#545454"/><ellipse cx="55.5" cy="25.5" rx="8" ry="4" fill="#c0c0c0"/><ellipse cx="63" cy="49" rx="17" ry="18" fill="#8a8a8a"/><path d="M13 45 Q20 30 38 27 Q55 30 58 45 Q56 62 55 78 L52 86 L26 86 Q13 68 13 45 Z" fill="#cfcfcf"/><ellipse cx="80" cy="86" rx="20" ry="18" fill="#555"/><path d="M50 48 Q58 39 66 36 Q73 37 77.5 47 Q77 54 71 60 Q63 61 55 56 Q49 51 50 48 Z" fill="#cdcdcd"/></g><path d="M50 48 Q58 39 66 36 Q73 37 77.5 47 Q77 54 71 60 Q63 61 55 56 Q49 51 50 48 Z" fill="none" stroke="#e32626" stroke-width="1.5"/><text x="3.3" y="11.8" font-size="10.0" fill="#d8d8d8" stroke="#d8d8d8" stroke-width="0.3" font-family="Liberation Sans">Gated Chest 8.0 SPO</text><text x="2.6" y="35.8" font-size="10" fill="#d0d0d0" stroke="#d0d0d0" stroke-width="0.2" font-family="Liberation Sans">s16p17</text></svg><svg style="position:absolute;left:0px;top:86px" width="86" height="86" viewBox="0 0 86 86"><rect width="86" height="86" fill="#000"/><g filter="url(#bl)"><path d="M0 17 L40 13 L86 16 L86 30 L45 27 L0 34 Z" fill="#545454"/><path d="M1 30 Q14 23 27 24" stroke="#a8a8a8" stroke-width="2.5" fill="none" stroke-linecap="round"/><ellipse cx="52" cy="26" rx="8" ry="4.6" fill="#c0c0c0"/><ellipse cx="64" cy="49" rx="16" ry="19" fill="#8a8a8a"/><path d="M13 46 Q18 30 38 28 Q52 32 56 46 Q55 62 52 74 L46 86 L24 86 Q12 65 13 46 Z" fill="#cfcfcf"/><path d="M58 86 L64 68 L86 62 L86 86 Z" fill="#5a5a5a"/><ellipse cx="64.5" cy="48" rx="12.3" ry="12" fill="#cdcdcd"/></g><ellipse cx="64.5" cy="48" rx="12.3" ry="12" fill="none" stroke="#e32626" stroke-width="1.5"/><text x="3.3" y="11.8" font-size="10.0" fill="#d8d8d8" stroke="#d8d8d8" stroke-width="0.3" font-family="Liberation Sans">Gated Chest 8.0 SPO</text><text x="2.6" y="35.8" font-size="10" fill="#d0d0d0" stroke="#d0d0d0" stroke-width="0.2" font-family="Liberation Sans">s15p17</text></svg><svg style="position:absolute;left:86px;top:86px" width="86" height="86" viewBox="0 0 86 86"><rect width="86" height="86" fill="#000"/><g filter="url(#bl)"><path d="M0 17 L40 13 L86 16 L86 30 L45 27 L0 34 Z" fill="#545454"/><path d="M1 32 Q14 24 29 24" stroke="#a0a0a0" stroke-width="2.5" fill="none" stroke-linecap="round"/><ellipse cx="50" cy="26" rx="8" ry="4.6" fill="#c0c0c0"/><ellipse cx="66" cy="50" rx="14" ry="20" fill="#8a8a8a"/><path d="M12 48 Q16 30 35 28 Q52 32 57 46 Q56 64 50 76 Q40 82 25 78 Q12 66 12 48 Z" fill="#cfcfcf"/><ellipse cx="44" cy="80" rx="11" ry="7" fill="#bbb"/><path d="M62 86 L64 68 L86 64 L86 86 Z" fill="#5a5a5a"/><ellipse cx="66.3" cy="49.3" rx="10" ry="12.3" fill="#cdcdcd"/></g><ellipse cx="66.3" cy="49.3" rx="10" ry="12.3" fill="none" stroke="#e32626" stroke-width="1.5"/><text x="3.3" y="11.8" font-size="10.0" fill="#d8d8d8" stroke="#d8d8d8" stroke-width="0.3" font-family="Liberation Sans">Gated Chest 8.0 SPO</text><text x="2.6" y="35.8" font-size="10" fill="#d0d0d0" stroke="#d0d0d0" stroke-width="0.2" font-family="Liberation Sans">s14p17</text></svg><svg style="position:absolute;left:172px;top:86px" width="86" height="86" viewBox="0 0 86 86"><rect width="86" height="86" fill="#000"/><g filter="url(#bl)"><path d="M0 18 L40 14 L86 17 L86 31 L45 28 L0 35 Z" fill="#545454"/><path d="M1 33 Q14 25 29 25" stroke="#999" stroke-width="2.5" fill="none" stroke-linecap="round"/><ellipse cx="52" cy="27" rx="8" ry="4.6" fill="#c0c0c0"/><ellipse cx="66" cy="50" rx="15" ry="19" fill="#8a8a8a"/><path d="M11 48 Q15 30 33 28 Q50 30 54 45 Q54 62 48 72 Q35 76 22 72 Q11 62 11 48 Z" fill="#cfcfcf"/><path d="M30 86 L32 70 Q60 66 86 68 L86 86 Z" fill="#5a5a5a"/><ellipse cx="45" cy="80" rx="10" ry="7" fill="#a8a8a8"/><ellipse cx="66" cy="50" rx="10.4" ry="12.7" fill="#cdcdcd"/></g><ellipse cx="66" cy="50" rx="10.4" ry="12.7" fill="none" stroke="#e32626" stroke-width="1.5"/><text x="3.3" y="11.8" font-size="10.0" fill="#d8d8d8" stroke="#d8d8d8" stroke-width="0.3" font-family="Liberation Sans">Gated Chest 8.0 SPO</text><text x="2.6" y="35.8" font-size="10" fill="#d0d0d0" stroke="#d0d0d0" stroke-width="0.2" font-family="Liberation Sans">s13p17</text></svg><svg style="position:absolute;left:258px;top:86px" width="86" height="86" viewBox="0 0 86 86"><rect width="86" height="86" fill="#000"/><g filter="url(#bl)"><path d="M0 18 L40 14 L86 18 L86 32 L45 29 L0 36 Z" fill="#545454"/><path d="M1 34 Q14 26 29 26" stroke="#999" stroke-width="2.5" fill="none" stroke-linecap="round"/><ellipse cx="54" cy="28" rx="7" ry="4" fill="#c0c0c0"/><ellipse cx="67" cy="52" rx="13" ry="18" fill="#8a8a8a"/><ellipse cx="34" cy="51" rx="21" ry="23" fill="#cfcfcf"/><path d="M22 86 L25 72 Q55 68 86 70 L86 86 Z" fill="#5a5a5a"/><ellipse cx="67.3" cy="51.4" rx="10.4" ry="12.2" fill="#cdcdcd"/></g><ellipse cx="67.3" cy="51.4" rx="10.4" ry="12.2" fill="none" stroke="#e32626" stroke-width="1.5"/><text x="3.3" y="11.8" font-size="10.0" fill="#d8d8d8" stroke="#d8d8d8" stroke-width="0.3" font-family="Liberation Sans">Gated Chest 8.0 SPO</text><text x="2.6" y="35.8" font-size="10" fill="#d0d0d0" stroke="#d0d0d0" stroke-width="0.2" font-family="Liberation Sans">s12p17</text></svg><svg style="position:absolute;left:0px;top:172px" width="86" height="86" viewBox="0 0 86 86"><rect width="86" height="86" fill="#000"/><g filter="url(#bl)"><path d="M0 17 Q49 4.5 86 26 L86 86 L0 86 Z" fill="#545454"/><path d="M0 45 Q20 30 56 29 Q75 32 86 42" stroke="#7c7c7c" stroke-width="3.5" fill="none" stroke-linecap="round"/><path d="M0 72 Q43 64.5 86 63 L86 86 L0 86 Z" fill="#707070"/><path d="M63 86 L86 78 L86 86 Z" fill="#000"/><path d="M0 50 Q8 38 17 37 Q13 55 17 72 Q8 74 0 76 Z" fill="#000"/><path d="M77 45 L86 43 L86 61 L78 60 Z" fill="#000"/><ellipse cx="65" cy="52" rx="13" ry="15" fill="#8a8a8a"/><ellipse cx="33.6" cy="50.4" rx="19.5" ry="19.5" fill="#cfcfcf"/><ellipse cx="53" cy="78" rx="9" ry="7" fill="#999"/><path d="M57 50 Q57 42 63 41.5 Q71 42 74 51 Q74 58 70 61 Q64 63 59 61 Q56 56 57 50 Z" fill="#cdcdcd"/></g><path d="M57 50 Q57 42 63 41.5 Q71 42 74 51 Q74 58 70 61 Q64 63 59 61 Q56 56 57 50 Z" fill="none" stroke="#e32626" stroke-width="1.5"/><text x="3.3" y="11.8" font-size="10.0" fill="#d8d8d8" stroke="#d8d8d8" stroke-width="0.3" font-family="Liberation Sans">Gated Chest 8.0 SPO</text><text x="2.6" y="35.8" font-size="10" fill="#d0d0d0" stroke="#d0d0d0" stroke-width="0.2" font-family="Liberation Sans">s11p17</text></svg><svg style="position:absolute;left:86px;top:172px" width="86" height="86" viewBox="0 0 86 86"><rect width="86" height="86" fill="#000"/><g filter="url(#bl)"><path d="M0 20 Q40 6.0 86 24 L86 86 L0 86 Z" fill="#545454"/><path d="M0 47 Q20 32 56 30 Q75 33 86 44" stroke="#7c7c7c" stroke-width="3.5" fill="none" stroke-linecap="round"/><path d="M0 72 Q43 64.5 86 63 L86 86 L0 86 Z" fill="#707070"/><path d="M63 86 L86 78 L86 86 Z" fill="#000"/><path d="M0 52 Q8 38 19 37 Q14 58 19 80 Q8 81 0 82 Z" fill="#000"/><path d="M80 45 L86 43 L86 62 L80 62 Z" fill="#000"/><ellipse cx="63.5" cy="51.5" rx="10" ry="13" fill="#8a8a8a"/><ellipse cx="36" cy="51.5" rx="20" ry="18" fill="#cfcfcf"/><ellipse cx="50" cy="78" rx="10" ry="7" fill="#999"/><ellipse cx="64" cy="51.5" rx="6" ry="9" fill="#cdcdcd"/></g><ellipse cx="64" cy="51.5" rx="6" ry="9" fill="none" stroke="#e32626" stroke-width="1.5"/><text x="3.3" y="11.8" font-size="10.0" fill="#d8d8d8" stroke="#d8d8d8" stroke-width="0.3" font-family="Liberation Sans">Gated Chest 8.0 SPO</text><text x="2.6" y="35.8" font-size="10" fill="#d0d0d0" stroke="#d0d0d0" stroke-width="0.2" font-family="Liberation Sans">s10p17</text></svg><svg style="position:absolute;left:172px;top:172px" width="86" height="86" viewBox="0 0 86 86"><rect width="86" height="86" fill="#000"/><g filter="url(#bl)"><path d="M0 17 Q40 4.5 86 30 L86 86 L0 86 Z" fill="#545454"/><path d="M0 47.5 Q16 33 40 34 Q60 34 86 47.5" stroke="#7c7c7c" stroke-width="3.5" fill="none" stroke-linecap="round"/><path d="M0 71 Q43 64.0 86 63 L86 86 L0 86 Z" fill="#707070"/><path d="M53 86 L86 69 L86 86 Z" fill="#000"/><path d="M0 52 Q8 39 19 38 Q14 58 18 80 L0 81 Z" fill="#000"/><path d="M75 42 L86 46 L86 66 L78 60 Z" fill="#000"/><ellipse cx="63.5" cy="51.5" rx="9" ry="11.5" fill="#8a8a8a"/><ellipse cx="37" cy="50.5" rx="19.3" ry="16.8" fill="#cfcfcf"/><ellipse cx="47" cy="76" rx="8" ry="6" fill="#999"/><ellipse cx="63.8" cy="51.5" rx="4.4" ry="7.8" fill="#cdcdcd"/></g><ellipse cx="63.8" cy="51.5" rx="4.4" ry="7.8" fill="none" stroke="#e32626" stroke-width="1.5"/><text x="3.3" y="11.8" font-size="10.0" fill="#d8d8d8" stroke="#d8d8d8" stroke-width="0.3" font-family="Liberation Sans">Gated Chest 8.0 SPO</text><text x="2.6" y="35.8" font-size="10" fill="#d0d0d0" stroke="#d0d0d0" stroke-width="0.2" font-family="Liberation Sans">s9p17</text></svg><svg style="position:absolute;left:258px;top:172px" width="86" height="86" viewBox="0 0 86 86"><rect width="86" height="86" fill="#000"/><g filter="url(#bl)"><path d="M0 18 Q40 4.0 86 30 L86 86 L0 86 Z" fill="#545454"/><path d="M0 48 Q16 34 40 35 Q60 35 86 48" stroke="#7c7c7c" stroke-width="3.5" fill="none" stroke-linecap="round"/><path d="M0 70 Q43 62.0 86 60 L86 86 L0 86 Z" fill="#707070"/><path d="M50 86 L86 62 L86 86 Z" fill="#000"/><path d="M0 54 Q8 40 19 40 Q14 60 19 86 L0 86 Z" fill="#000"/><path d="M75 45 L86 48 L86 64 L78 60 Z" fill="#000"/><ellipse cx="63.5" cy="51" rx="8" ry="10" fill="#8a8a8a"/><ellipse cx="37.2" cy="51" rx="18.3" ry="14.4" fill="#cfcfcf"/><ellipse cx="46" cy="74" rx="8" ry="6" fill="#999"/><ellipse cx="63.5" cy="51" rx="3.9" ry="6.4" fill="#cdcdcd"/></g><ellipse cx="63.5" cy="51" rx="3.9" ry="6.4" fill="none" stroke="#e32626" stroke-width="1.5"/><text x="3.3" y="11.8" font-size="10.0" fill="#d8d8d8" stroke="#d8d8d8" stroke-width="0.3" font-family="Liberation Sans">Gated Chest 8.0 SPO</text><text x="2.6" y="35.8" font-size="10" fill="#d0d0d0" stroke="#d0d0d0" stroke-width="0.2" font-family="Liberation Sans">s8p17</text></svg><svg style="position:absolute;left:0px;top:258px" width="86" height="86" viewBox="0 0 86 86"><rect width="86" height="86" fill="#000"/><g filter="url(#bl)"><path d="M0 27 Q45 1.6999999999999993 86 33.6 L86 86 L0 86 Z" fill="#545454"/><path d="M0 52.6 Q17 40 45 37 Q70 38 86 44.8" stroke="#7c7c7c" stroke-width="3.5" fill="none" stroke-linecap="round"/><path d="M3 67 Q8 52 21 44 Q25 56 22 67 Z" fill="#000"/><ellipse cx="39.5" cy="52" rx="17.5" ry="10.7" fill="#cfcfcf"/><ellipse cx="4" cy="55" rx="2.5" ry="1.5" fill="#ccc" transform="rotate(-30 4 55)"/><ellipse cx="62.4" cy="52" rx="3.5" ry="6" transform="rotate(-10 62.4 52)" fill="#cdcdcd"/></g><ellipse cx="62.4" cy="52" rx="3.5" ry="6" transform="rotate(-10 62.4 52)" fill="none" stroke="#e32626" stroke-width="1.5"/><text x="3.3" y="11.8" font-size="10.0" fill="#d8d8d8" stroke="#d8d8d8" stroke-width="0.3" font-family="Liberation Sans">Gated Chest 8.0 SPO</text><text x="2.6" y="35.8" font-size="10" fill="#d0d0d0" stroke="#d0d0d0" stroke-width="0.2" font-family="Liberation Sans">s7p17</text></svg><svg style="position:absolute;left:86px;top:258px" width="86" height="86" viewBox="0 0 86 86"><rect width="86" height="86" fill="#000"/><g filter="url(#bl)"><path d="M0 24.6 Q28 5.050000000000001 86 32.5 L86 86 L0 86 Z" fill="#545454"/><path d="M0 56 Q22 41 50 40 Q70 41 86 44.8" stroke="#7c7c7c" stroke-width="3.5" fill="none" stroke-linecap="round"/><path d="M2.4 67 Q8 50 23 44 Q29 54 25 67 Z" fill="#000"/><ellipse cx="40.7" cy="52.6" rx="15.5" ry="10" fill="#cfcfcf"/><ellipse cx="4" cy="58" rx="2.5" ry="1.5" fill="#ccc" transform="rotate(-30 4 58)"/><ellipse cx="61.8" cy="52.6" rx="3.3" ry="5.6" transform="rotate(-25 61.8 52.6)" fill="#cdcdcd"/></g><ellipse cx="61.8" cy="52.6" rx="3.3" ry="5.6" transform="rotate(-25 61.8 52.6)" fill="none" stroke="#e32626" stroke-width="1.5"/><text x="3.3" y="11.8" font-size="10.0" fill="#d8d8d8" stroke="#d8d8d8" stroke-width="0.3" font-family="Liberation Sans">Gated Chest 8.0 SPO</text><text x="2.6" y="35.8" font-size="10" fill="#d0d0d0" stroke="#d0d0d0" stroke-width="0.2" font-family="Liberation Sans">s6p17</text></svg><svg style="position:absolute;left:172px;top:258px" width="86" height="86" viewBox="0 0 86 86"><rect width="86" height="86" fill="#000"/><g filter="url(#bl)"><path d="M0 24.8 Q20 13.049999999999997 86 36.7 L86 86 L0 86 Z" fill="#545454"/><path d="M0 56.5 Q12 44 39.6 40.7 Q65 42 86 50.5" stroke="#7c7c7c" stroke-width="3.5" fill="none" stroke-linecap="round"/><path d="M9 67 Q12 50 23 45.6 Q31 52 27 67 Z" fill="#000"/><ellipse cx="42.5" cy="52.5" rx="12.8" ry="6" fill="#cfcfcf"/><ellipse cx="6" cy="58" rx="2.5" ry="1.5" fill="#ccc" transform="rotate(-30 6 58)"/><circle cx="59.4" cy="53.5" r="2.9" fill="#cdcdcd"/></g><circle cx="59.4" cy="53.5" r="2.9" fill="none" stroke="#e32626" stroke-width="1.5"/><text x="3.3" y="11.8" font-size="10.0" fill="#d8d8d8" stroke="#d8d8d8" stroke-width="0.3" font-family="Liberation Sans">Gated Chest 8.0 SPO</text><text x="2.6" y="35.8" font-size="10" fill="#d0d0d0" stroke="#d0d0d0" stroke-width="0.2" font-family="Liberation Sans">s5p17</text></svg><svg style="position:absolute;left:258px;top:258px" width="86" height="86" viewBox="0 0 86 86"><rect width="86" height="86" fill="#000"/><g filter="url(#bl)"><path d="M0 26 Q20 12.0 86 38 L86 86 L0 86 Z" fill="#545454"/><path d="M0 60 Q14 47 50 44 Q70 45 86 52" stroke="#7c7c7c" stroke-width="3.5" fill="none" stroke-linecap="round"/><path d="M7 67 Q10 52 23 48.6 Q32 54 28 67 Z" fill="#000"/><ellipse cx="50" cy="56" rx="12" ry="6" fill="#5e5e5e"/><ellipse cx="8" cy="60" rx="2.5" ry="1.5" fill="#ccc" transform="rotate(-30 8 60)"/></g><text x="3.3" y="11.8" font-size="10.0" fill="#d8d8d8" stroke="#d8d8d8" stroke-width="0.3" font-family="Liberation Sans">Gated Chest 8.0 SPO</text><text x="2.6" y="35.8" font-size="10" fill="#d0d0d0" stroke="#d0d0d0" stroke-width="0.2" font-family="Liberation Sans">s4p17</text></svg><svg style="position:absolute;left:350px;top:0px" width="86" height="86" viewBox="0 0 86 86"><rect width="86" height="86" fill="#000"/><g filter="url(#bl)"><path d="M28 27 L50 19 L86 12 L86 28 L70 28 L50 29 L32 33 Z" fill="#545454"/><ellipse cx="51" cy="23.5" rx="11" ry="3.2" fill="#c0c0c0"/><ellipse cx="46" cy="46" rx="16" ry="12" fill="#666"/><ellipse cx="63" cy="51" rx="14" ry="17" fill="#8a8a8a"/><ellipse cx="43" cy="43" rx="8" ry="7" fill="#a0a0a0"/><ellipse cx="53" cy="33" rx="8.5" ry="6.8" fill="#cfcfcf"/><path d="M18 52 Q20 42 30 40 Q40 42 48 50 Q55 57 56 66 Q57 78 51 86 L25 86 Q17 72 18 52 Z" fill="#cfcfcf"/><ellipse cx="86" cy="86" rx="14" ry="10" fill="#555"/><ellipse cx="10" cy="62" rx="1.5" ry="1.5" fill="#aaa"/><ellipse cx="14" cy="52" rx="1.2" ry="1.2" fill="#999"/><ellipse cx="63.8" cy="50.7" rx="10.2" ry="10.8" transform="rotate(15 63.8 50.7)" fill="#c2c2c2"/><ellipse cx="52.6" cy="33" rx="8.6" ry="7" fill="#d0d0d0"/></g><ellipse cx="52.6" cy="33" rx="8.6" ry="7" fill="none" stroke="#e8e030" stroke-width="1.6"/><text x="3.3" y="11.8" font-size="10.0" fill="#d8d8d8" stroke="#d8d8d8" stroke-width="0.3" font-family="Liberation Sans">Gated Chest 8.0 SPO</text><text x="2.6" y="35.8" font-size="10" fill="#d0d0d0" stroke="#d0d0d0" stroke-width="0.2" font-family="Liberation Sans">s19p19</text></svg><svg style="position:absolute;left:436px;top:0px" width="86" height="86" viewBox="0 0 86 86"><rect width="86" height="86" fill="#000"/><g filter="url(#bl)"><path d="M19 28 L45 19 L86 12 L86 28 L60 29 L35 32 Z" fill="#545454"/><ellipse cx="52" cy="24" rx="10" ry="3.6" fill="#c0c0c0"/><ellipse cx="45" cy="45" rx="12" ry="9" fill="#6e6e6e"/><ellipse cx="58" cy="50" rx="21" ry="17" fill="#8a8a8a"/><ellipse cx="50" cy="34" rx="10" ry="6.5" fill="#cfcfcf"/><path d="M17 53 Q19 43 30 41 Q42 43 50 51 Q57 58 57 68 Q57 80 51 86 L25 86 Q16 72 17 53 Z" fill="#cfcfcf"/><ellipse cx="86" cy="86" rx="16" ry="12" fill="#555"/><ellipse cx="10" cy="62" rx="1.5" ry="1.5" fill="#aaa"/><path d="M40.5 46 Q45 40 53 42 Q62 37 72 38 Q77 44 74 55 Q70 63 62 60 Q54 55 46 51 Q39 49 40.5 46 Z" fill="#c2c2c2"/><path d="M25 36 Q33 32 43 34 Q50 27 58 27 Q65 30 62 38 Q55 41 45 38 Q35 39 25 36 Z" fill="#d0d0d0"/></g><path d="M25 36 Q33 32 43 34 Q50 27 58 27 Q65 30 62 38 Q55 41 45 38 Q35 39 25 36 Z" fill="none" stroke="#e8e030" stroke-width="1.6"/><text x="3.3" y="11.8" font-size="10.0" fill="#d8d8d8" stroke="#d8d8d8" stroke-width="0.3" font-family="Liberation Sans">Gated Chest 8.0 SPO</text><text x="2.6" y="35.8" font-size="10" fill="#d0d0d0" stroke="#d0d0d0" stroke-width="0.2" font-family="Liberation Sans">s18p19</text></svg><svg style="position:absolute;left:522px;top:0px" width="86" height="86" viewBox="0 0 86 86"><rect width="86" height="86" fill="#000"/><g filter="url(#bl)"><path d="M0 35 L30 22 L86 12 L86 27 L55 28 L25 34 L0 43 Z" fill="#545454"/><ellipse cx="55" cy="25" rx="8" ry="3.8" fill="#c0c0c0"/><ellipse cx="60" cy="49" rx="19" ry="18" fill="#8a8a8a"/><ellipse cx="38" cy="37" rx="14" ry="8" fill="#c4c4c4"/><path d="M18 52 Q20 45 32 44 Q45 46 52 55 Q57 63 56 75 L54 86 L28 86 Q17 72 18 52 Z" fill="#cfcfcf"/><ellipse cx="82" cy="86" rx="18" ry="15" fill="#555"/><path d="M45 45 Q55 38 67 36 Q72 38 77 48 Q77 56 70 60.5 Q63 62 55 55 Q48 50 45 45 Z" fill="#c2c2c2"/><ellipse cx="40.7" cy="35.3" rx="17.5" ry="6.8" transform="rotate(-8 40.7 35.3)" fill="#d0d0d0"/></g><ellipse cx="40.7" cy="35.3" rx="17.5" ry="6.8" transform="rotate(-8 40.7 35.3)" fill="none" stroke="#e8e030" stroke-width="1.6"/><text x="3.3" y="11.8" font-size="10.0" fill="#d8d8d8" stroke="#d8d8d8" stroke-width="0.3" font-family="Liberation Sans">Gated Chest 8.0 SPO</text><text x="2.6" y="35.8" font-size="10" fill="#d0d0d0" stroke="#d0d0d0" stroke-width="0.2" font-family="Liberation Sans">s17p19</text></svg><svg style="position:absolute;left:608px;top:0px" width="86" height="86" viewBox="0 0 86 86"><rect width="86" height="86" fill="#000"/><g filter="url(#bl)"><path d="M0 35 L30 22 L86 12 L86 27 L55 28 L25 34 L0 45 Z" fill="#545454"/><ellipse cx="55.5" cy="25.5" rx="8" ry="4" fill="#c0c0c0"/><ellipse cx="63" cy="49" rx="17" ry="18" fill="#8a8a8a"/><path d="M13 45 Q20 30 38 27 Q55 30 58 45 Q56 62 55 78 L52 86 L26 86 Q13 68 13 45 Z" fill="#cfcfcf"/><ellipse cx="80" cy="86" rx="20" ry="18" fill="#555"/><path d="M50 48 Q58 39 66 36 Q73 37 77.5 47 Q77 54 71 60 Q63 61 55 56 Q49 51 50 48 Z" fill="#c2c2c2"/><path d="M18 42 Q21 31 40 29 Q58 29 57 31 Q53 43 40 50 Q24 50 18 42 Z" fill="#d0d0d0"/></g><path d="M18 42 Q21 31 40 29 Q58 29 57 31 Q53 43 40 50 Q24 50 18 42 Z" fill="none" stroke="#e8e030" stroke-width="1.6"/><text x="3.3" y="11.8" font-size="10.0" fill="#d8d8d8" stroke="#d8d8d8" stroke-width="0.3" font-family="Liberation Sans">Gated Chest 8.0 SPO</text><text x="2.6" y="35.8" font-size="10" fill="#d0d0d0" stroke="#d0d0d0" stroke-width="0.2" font-family="Liberation Sans">s16p19</text></svg><svg style="position:absolute;left:350px;top:86px" width="86" height="86" viewBox="0 0 86 86"><rect width="86" height="86" fill="#000"/><g filter="url(#bl)"><path d="M0 17 L40 13 L86 16 L86 30 L45 27 L0 34 Z" fill="#545454"/><path d="M1 30 Q14 23 27 24" stroke="#a8a8a8" stroke-width="2.5" fill="none" stroke-linecap="round"/><ellipse cx="52" cy="26" rx="8" ry="4.6" fill="#c0c0c0"/><ellipse cx="64" cy="49" rx="16" ry="19" fill="#8a8a8a"/><path d="M13 46 Q18 30 38 28 Q52 32 56 46 Q55 62 52 74 L46 86 L24 86 Q12 65 13 46 Z" fill="#cfcfcf"/><path d="M58 86 L64 68 L86 62 L86 86 Z" fill="#5a5a5a"/><ellipse cx="64.5" cy="48" rx="12.3" ry="12" fill="#c2c2c2"/><path d="M15 45 Q22 28 38 29 Q52 33 54 41 Q49 52 53 62 Q40 61 32 53 Q22 49 15 45 Z" fill="#d0d0d0"/></g><path d="M15 45 Q22 28 38 29 Q52 33 54 41 Q49 52 53 62 Q40 61 32 53 Q22 49 15 45 Z" fill="none" stroke="#e8e030" stroke-width="1.6"/><text x="3.3" y="11.8" font-size="10.0" fill="#d8d8d8" stroke="#d8d8d8" stroke-width="0.3" font-family="Liberation Sans">Gated Chest 8.0 SPO</text><text x="2.6" y="35.8" font-size="10" fill="#d0d0d0" stroke="#d0d0d0" stroke-width="0.2" font-family="Liberation Sans">s15p19</text></svg><svg style="position:absolute;left:436px;top:86px" width="86" height="86" viewBox="0 0 86 86"><rect width="86" height="86" fill="#000"/><g filter="url(#bl)"><path d="M0 17 L40 13 L86 16 L86 30 L45 27 L0 34 Z" fill="#545454"/><path d="M1 32 Q14 24 29 24" stroke="#a0a0a0" stroke-width="2.5" fill="none" stroke-linecap="round"/><ellipse cx="50" cy="26" rx="8" ry="4.6" fill="#c0c0c0"/><ellipse cx="66" cy="50" rx="14" ry="20" fill="#8a8a8a"/><path d="M12 48 Q16 30 35 28 Q52 32 57 46 Q56 64 50 76 Q40 82 25 78 Q12 66 12 48 Z" fill="#cfcfcf"/><ellipse cx="44" cy="80" rx="11" ry="7" fill="#bbb"/><path d="M62 86 L64 68 L86 64 L86 86 Z" fill="#5a5a5a"/><ellipse cx="66.3" cy="49.3" rx="10" ry="12.3" fill="#c2c2c2"/><path d="M14 45 Q22 27 42 29 Q55 33 54 38 Q48 50 56 64 Q40 67 22 63 Q13 57 14 45 Z" fill="#d0d0d0"/></g><path d="M14 45 Q22 27 42 29 Q55 33 54 38 Q48 50 56 64 Q40 67 22 63 Q13 57 14 45 Z" fill="none" stroke="#e8e030" stroke-width="1.6"/><text x="3.3" y="11.8" font-size="10.0" fill="#d8d8d8" stroke="#d8d8d8" stroke-width="0.3" font-family="Liberation Sans">Gated Chest 8.0 SPO</text><text x="2.6" y="35.8" font-size="10" fill="#d0d0d0" stroke="#d0d0d0" stroke-width="0.2" font-family="Liberation Sans">s14p19</text></svg><svg style="position:absolute;left:522px;top:86px" width="86" height="86" viewBox="0 0 86 86"><rect width="86" height="86" fill="#000"/><g filter="url(#bl)"><path d="M0 18 L40 14 L86 17 L86 31 L45 28 L0 35 Z" fill="#545454"/><path d="M1 33 Q14 25 29 25" stroke="#999" stroke-width="2.5" fill="none" stroke-linecap="round"/><ellipse cx="52" cy="27" rx="8" ry="4.6" fill="#c0c0c0"/><ellipse cx="66" cy="50" rx="15" ry="19" fill="#8a8a8a"/><path d="M11 48 Q15 30 33 28 Q50 30 54 45 Q54 62 48 72 Q35 76 22 72 Q11 62 11 48 Z" fill="#cfcfcf"/><path d="M30 86 L32 70 Q60 66 86 68 L86 86 Z" fill="#5a5a5a"/><ellipse cx="45" cy="80" rx="10" ry="7" fill="#a8a8a8"/><ellipse cx="66" cy="50" rx="10.4" ry="12.7" fill="#c2c2c2"/><path d="M14 45 Q25 26 45 28 Q53 36 51 47 Q50 58 54 66 Q35 69 18 64 Q12 57 14 45 Z" fill="#d0d0d0"/></g><path d="M14 45 Q25 26 45 28 Q53 36 51 47 Q50 58 54 66 Q35 69 18 64 Q12 57 14 45 Z" fill="none" stroke="#e8e030" stroke-width="1.6"/><text x="3.3" y="11.8" font-size="10.0" fill="#d8d8d8" stroke="#d8d8d8" stroke-width="0.3" font-family="Liberation Sans">Gated Chest 8.0 SPO</text><text x="2.6" y="35.8" font-size="10" fill="#d0d0d0" stroke="#d0d0d0" stroke-width="0.2" font-family="Liberation Sans">s13p19</text></svg><svg style="position:absolute;left:608px;top:86px" width="86" height="86" viewBox="0 0 86 86"><rect width="86" height="86" fill="#000"/><g filter="url(#bl)"><path d="M0 18 L40 14 L86 18 L86 32 L45 29 L0 36 Z" fill="#545454"/><path d="M1 34 Q14 26 29 26" stroke="#999" stroke-width="2.5" fill="none" stroke-linecap="round"/><ellipse cx="54" cy="28" rx="7" ry="4" fill="#c0c0c0"/><ellipse cx="67" cy="52" rx="13" ry="18" fill="#8a8a8a"/><ellipse cx="34" cy="51" rx="21" ry="23" fill="#cfcfcf"/><path d="M22 86 L25 72 Q55 68 86 70 L86 86 Z" fill="#5a5a5a"/><ellipse cx="67.3" cy="51.4" rx="10.4" ry="12.2" fill="#c2c2c2"/><path d="M14 50 Q20 30 32 28 Q45 38 51 50 Q55 62 48 70 Q35 73 20 65 Q12 58 14 50 Z" fill="#d0d0d0"/></g><path d="M14 50 Q20 30 32 28 Q45 38 51 50 Q55 62 48 70 Q35 73 20 65 Q12 58 14 50 Z" fill="none" stroke="#e8e030" stroke-width="1.6"/><text x="3.3" y="11.8" font-size="10.0" fill="#d8d8d8" stroke="#d8d8d8" stroke-width="0.3" font-family="Liberation Sans">Gated Chest 8.0 SPO</text><text x="2.6" y="35.8" font-size="10" fill="#d0d0d0" stroke="#d0d0d0" stroke-width="0.2" font-family="Liberation Sans">s12p19</text></svg><svg style="position:absolute;left:350px;top:172px" width="86" height="86" viewBox="0 0 86 86"><rect width="86" height="86" fill="#000"/><g filter="url(#bl)"><path d="M0 17 Q49 4.5 86 26 L86 86 L0 86 Z" fill="#545454"/><path d="M0 45 Q20 30 56 29 Q75 32 86 42" stroke="#7c7c7c" stroke-width="3.5" fill="none" stroke-linecap="round"/><path d="M0 72 Q43 64.5 86 63 L86 86 L0 86 Z" fill="#707070"/><path d="M63 86 L86 78 L86 86 Z" fill="#000"/><path d="M0 50 Q8 38 17 37 Q13 55 17 72 Q8 74 0 76 Z" fill="#000"/><path d="M77 45 L86 43 L86 61 L78 60 Z" fill="#000"/><ellipse cx="65" cy="52" rx="13" ry="15" fill="#8a8a8a"/><ellipse cx="33.6" cy="50.4" rx="19.5" ry="19.5" fill="#cfcfcf"/><ellipse cx="53" cy="78" rx="9" ry="7" fill="#999"/><path d="M57 50 Q57 42 63 41.5 Q71 42 74 51 Q74 58 70 61 Q64 63 59 61 Q56 56 57 50 Z" fill="#c2c2c2"/><path d="M17 38 Q30 27 47 37 Q53 48 52.5 60 Q45 70 38 69 Q20 69 15 57 Q14 45 17 38 Z" fill="#d0d0d0"/></g><path d="M17 38 Q30 27 47 37 Q53 48 52.5 60 Q45 70 38 69 Q20 69 15 57 Q14 45 17 38 Z" fill="none" stroke="#e8e030" stroke-width="1.6"/><text x="3.3" y="11.8" font-size="10.0" fill="#d8d8d8" stroke="#d8d8d8" stroke-width="0.3" font-family="Liberation Sans">Gated Chest 8.0 SPO</text><text x="2.6" y="35.8" font-size="10" fill="#d0d0d0" stroke="#d0d0d0" stroke-width="0.2" font-family="Liberation Sans">s11p19</text></svg><svg style="position:absolute;left:436px;top:172px" width="86" height="86" viewBox="0 0 86 86"><rect width="86" height="86" fill="#000"/><g filter="url(#bl)"><path d="M0 20 Q40 6.0 86 24 L86 86 L0 86 Z" fill="#545454"/><path d="M0 47 Q20 32 56 30 Q75 33 86 44" stroke="#7c7c7c" stroke-width="3.5" fill="none" stroke-linecap="round"/><path d="M0 72 Q43 64.5 86 63 L86 86 L0 86 Z" fill="#707070"/><path d="M63 86 L86 78 L86 86 Z" fill="#000"/><path d="M0 52 Q8 38 19 37 Q14 58 19 80 Q8 81 0 82 Z" fill="#000"/><path d="M80 45 L86 43 L86 62 L80 62 Z" fill="#000"/><ellipse cx="63.5" cy="51.5" rx="10" ry="13" fill="#8a8a8a"/><ellipse cx="36" cy="51.5" rx="20" ry="18" fill="#cfcfcf"/><ellipse cx="50" cy="78" rx="10" ry="7" fill="#999"/><ellipse cx="64" cy="51.5" rx="6" ry="9" fill="#c2c2c2"/><ellipse cx="36" cy="50" rx="19.8" ry="16.8" fill="#d0d0d0"/></g><ellipse cx="36" cy="50" rx="19.8" ry="16.8" fill="none" stroke="#e8e030" stroke-width="1.6"/><text x="3.3" y="11.8" font-size="10.0" fill="#d8d8d8" stroke="#d8d8d8" stroke-width="0.3" font-family="Liberation Sans">Gated Chest 8.0 SPO</text><text x="2.6" y="35.8" font-size="10" fill="#d0d0d0" stroke="#d0d0d0" stroke-width="0.2" font-family="Liberation Sans">s10p19</text></svg><svg style="position:absolute;left:522px;top:172px" width="86" height="86" viewBox="0 0 86 86"><rect width="86" height="86" fill="#000"/><g filter="url(#bl)"><path d="M0 17 Q40 4.5 86 30 L86 86 L0 86 Z" fill="#545454"/><path d="M0 47.5 Q16 33 40 34 Q60 34 86 47.5" stroke="#7c7c7c" stroke-width="3.5" fill="none" stroke-linecap="round"/><path d="M0 71 Q43 64.0 86 63 L86 86 L0 86 Z" fill="#707070"/><path d="M53 86 L86 69 L86 86 Z" fill="#000"/><path d="M0 52 Q8 39 19 38 Q14 58 18 80 L0 81 Z" fill="#000"/><path d="M75 42 L86 46 L86 66 L78 60 Z" fill="#000"/><ellipse cx="63.5" cy="51.5" rx="9" ry="11.5" fill="#8a8a8a"/><ellipse cx="37" cy="50.5" rx="19.3" ry="16.8" fill="#cfcfcf"/><ellipse cx="47" cy="76" rx="8" ry="6" fill="#999"/><ellipse cx="63.8" cy="51.5" rx="4.4" ry="7.8" fill="#c2c2c2"/><ellipse cx="36.3" cy="49.8" rx="19.8" ry="15.8" fill="#d0d0d0"/></g><ellipse cx="36.3" cy="49.8" rx="19.8" ry="15.8" fill="none" stroke="#e8e030" stroke-width="1.6"/><text x="3.3" y="11.8" font-size="10.0" fill="#d8d8d8" stroke="#d8d8d8" stroke-width="0.3" font-family="Liberation Sans">Gated Chest 8.0 SPO</text><text x="2.6" y="35.8" font-size="10" fill="#d0d0d0" stroke="#d0d0d0" stroke-width="0.2" font-family="Liberation Sans">s9p19</text></svg><svg style="position:absolute;left:608px;top:172px" width="86" height="86" viewBox="0 0 86 86"><rect width="86" height="86" fill="#000"/><g filter="url(#bl)"><path d="M0 18 Q40 4.0 86 30 L86 86 L0 86 Z" fill="#545454"/><path d="M0 48 Q16 34 40 35 Q60 35 86 48" stroke="#7c7c7c" stroke-width="3.5" fill="none" stroke-linecap="round"/><path d="M0 70 Q43 62.0 86 60 L86 86 L0 86 Z" fill="#707070"/><path d="M50 86 L86 62 L86 86 Z" fill="#000"/><path d="M0 54 Q8 40 19 40 Q14 60 19 86 L0 86 Z" fill="#000"/><path d="M75 45 L86 48 L86 64 L78 60 Z" fill="#000"/><ellipse cx="63.5" cy="51" rx="8" ry="10" fill="#8a8a8a"/><ellipse cx="37.2" cy="51" rx="18.3" ry="14.4" fill="#cfcfcf"/><ellipse cx="46" cy="74" rx="8" ry="6" fill="#999"/><ellipse cx="63.5" cy="51" rx="3.9" ry="6.4" fill="#c2c2c2"/><ellipse cx="37.3" cy="51" rx="19.2" ry="13.8" fill="#d0d0d0"/></g><ellipse cx="37.3" cy="51" rx="19.2" ry="13.8" fill="none" stroke="#e8e030" stroke-width="1.6"/><text x="3.3" y="11.8" font-size="10.0" fill="#d8d8d8" stroke="#d8d8d8" stroke-width="0.3" font-family="Liberation Sans">Gated Chest 8.0 SPO</text><text x="2.6" y="35.8" font-size="10" fill="#d0d0d0" stroke="#d0d0d0" stroke-width="0.2" font-family="Liberation Sans">s8p19</text></svg><svg style="position:absolute;left:350px;top:258px" width="86" height="86" viewBox="0 0 86 86"><rect width="86" height="86" fill="#000"/><g filter="url(#bl)"><path d="M0 27 Q45 1.6999999999999993 86 33.6 L86 86 L0 86 Z" fill="#545454"/><path d="M0 52.6 Q17 40 45 37 Q70 38 86 44.8" stroke="#7c7c7c" stroke-width="3.5" fill="none" stroke-linecap="round"/><path d="M3 67 Q8 52 21 44 Q25 56 22 67 Z" fill="#000"/><ellipse cx="39.5" cy="52" rx="17.5" ry="10.7" fill="#cfcfcf"/><ellipse cx="4" cy="55" rx="2.5" ry="1.5" fill="#ccc" transform="rotate(-30 4 55)"/><ellipse cx="62.4" cy="52" rx="3.5" ry="6" transform="rotate(-10 62.4 52)" fill="#c2c2c2"/><path d="M25 42 Q40 40 55 45 Q57 55 55 60 Q42 65 27 62 Q20 55 25 42 Z" fill="#d0d0d0"/></g><path d="M25 42 Q40 40 55 45 Q57 55 55 60 Q42 65 27 62 Q20 55 25 42 Z" fill="none" stroke="#e8e030" stroke-width="1.6"/><text x="3.3" y="11.8" font-size="10.0" fill="#d8d8d8" stroke="#d8d8d8" stroke-width="0.3" font-family="Liberation Sans">Gated Chest 8.0 SPO</text><text x="2.6" y="35.8" font-size="10" fill="#d0d0d0" stroke="#d0d0d0" stroke-width="0.2" font-family="Liberation Sans">s7p19</text></svg><svg style="position:absolute;left:436px;top:258px" width="86" height="86" viewBox="0 0 86 86"><rect width="86" height="86" fill="#000"/><g filter="url(#bl)"><path d="M0 24.6 Q28 5.050000000000001 86 32.5 L86 86 L0 86 Z" fill="#545454"/><path d="M0 56 Q22 41 50 40 Q70 41 86 44.8" stroke="#7c7c7c" stroke-width="3.5" fill="none" stroke-linecap="round"/><path d="M2.4 67 Q8 50 23 44 Q29 54 25 67 Z" fill="#000"/><ellipse cx="40.7" cy="52.6" rx="15.5" ry="10" fill="#cfcfcf"/><ellipse cx="4" cy="58" rx="2.5" ry="1.5" fill="#ccc" transform="rotate(-30 4 58)"/><ellipse cx="61.8" cy="52.6" rx="3.3" ry="5.6" transform="rotate(-25 61.8 52.6)" fill="#c2c2c2"/><ellipse cx="40" cy="51.7" rx="14.8" ry="9.8" fill="#d0d0d0"/></g><ellipse cx="40" cy="51.7" rx="14.8" ry="9.8" fill="none" stroke="#e8e030" stroke-width="1.6"/><text x="3.3" y="11.8" font-size="10.0" fill="#d8d8d8" stroke="#d8d8d8" stroke-width="0.3" font-family="Liberation Sans">Gated Chest 8.0 SPO</text><text x="2.6" y="35.8" font-size="10" fill="#d0d0d0" stroke="#d0d0d0" stroke-width="0.2" font-family="Liberation Sans">s6p19</text></svg><svg style="position:absolute;left:522px;top:258px" width="86" height="86" viewBox="0 0 86 86"><rect width="86" height="86" fill="#000"/><g filter="url(#bl)"><path d="M0 24.8 Q20 13.049999999999997 86 36.7 L86 86 L0 86 Z" fill="#545454"/><path d="M0 56.5 Q12 44 39.6 40.7 Q65 42 86 50.5" stroke="#7c7c7c" stroke-width="3.5" fill="none" stroke-linecap="round"/><path d="M9 67 Q12 50 23 45.6 Q31 52 27 67 Z" fill="#000"/><ellipse cx="42.5" cy="52.5" rx="12.8" ry="6" fill="#cfcfcf"/><ellipse cx="6" cy="58" rx="2.5" ry="1.5" fill="#ccc" transform="rotate(-30 6 58)"/><circle cx="59.4" cy="53.5" r="2.9" fill="#c2c2c2"/><ellipse cx="42.5" cy="53.3" rx="12.6" ry="6.8" transform="rotate(8 42.5 53.3)" fill="#d0d0d0"/></g><ellipse cx="42.5" cy="53.3" rx="12.6" ry="6.8" transform="rotate(8 42.5 53.3)" fill="none" stroke="#e8e030" stroke-width="1.6"/><text x="3.3" y="11.8" font-size="10.0" fill="#d8d8d8" stroke="#d8d8d8" stroke-width="0.3" font-family="Liberation Sans">Gated Chest 8.0 SPO</text><text x="2.6" y="35.8" font-size="10" fill="#d0d0d0" stroke="#d0d0d0" stroke-width="0.2" font-family="Liberation Sans">s5p19</text></svg><svg style="position:absolute;left:608px;top:258px" width="86" height="86" viewBox="0 0 86 86"><rect width="86" height="86" fill="#000"/><g filter="url(#bl)"><path d="M0 26 Q20 12.0 86 38 L86 86 L0 86 Z" fill="#545454"/><path d="M0 60 Q14 47 50 44 Q70 45 86 52" stroke="#7c7c7c" stroke-width="3.5" fill="none" stroke-linecap="round"/><path d="M7 67 Q10 52 23 48.6 Q32 54 28 67 Z" fill="#000"/><ellipse cx="50" cy="56" rx="12" ry="6" fill="#5e5e5e"/><ellipse cx="8" cy="60" rx="2.5" ry="1.5" fill="#ccc" transform="rotate(-30 8 60)"/></g><text x="3.3" y="11.8" font-size="10.0" fill="#d8d8d8" stroke="#d8d8d8" stroke-width="0.3" font-family="Liberation Sans">Gated Chest 8.0 SPO</text><text x="2.6" y="35.8" font-size="10" fill="#d0d0d0" stroke="#d0d0d0" stroke-width="0.2" font-family="Liberation Sans">s4p19</text></svg></div><div class="r" style="left:1317px;top:57px;width:211px;height:553px;background:#535353;"></div><div class="r" style="left:1317px;top:609px;width:211px;height:1px;background:#3e3e3e;"></div><div class="r" style="left:1317px;top:610px;width:211px;height:131px;background:#525252;box-shadow:inset 0 0 0 1px #474747;"></div><div class="r" style="left:1317px;top:57px;width:211px;height:19px;background:#90c1f7;"></div><div class="t" style="top:61.49px;font-size:11px;line-height:11px;font-weight:bold;color:#000;left:1320.50px;">Report</div><div class="r" style="left:1317px;top:208px;width:211px;height:19px;background:#90c1f7;"></div><div class="t" style="top:212.49px;font-size:11px;line-height:11px;font-weight:bold;color:#000;left:1320.50px;">Snapshots</div><div class="r" style="left:1322px;top:82px;width:121px;height:121px;background:#ffffff;"></div><div class="r" style="left:1326px;top:86px;width:114px;height:113px;background:#4d4d4d;"></div><div class="r" style="left:1341px;top:86px;width:84px;height:113px;background:#ffffff;"></div><div class="r" style="left:1341.55px;top:86.07px;width:9.25px;height:7.9px;background:transparent;box-shadow:inset 0 0 0 0.6px #9ab;"></div><div class="r" style="left:1352.48px;top:86.41px;width:8.41px;height:1.01px;background:#b4b4b4;"></div><div class="r" style="left:1364.25px;top:86.41px;width:15.98px;height:1.01px;background:#b0b0b0;"></div><div class="r" style="left:1352.48px;top:88.43px;width:8.41px;height:1.01px;background:#b4b4b4;"></div><div class="r" style="left:1364.25px;top:88.43px;width:9.25px;height:1.01px;background:#b0b0b0;"></div><div class="r" style="left:1352.48px;top:90.45px;width:8.41px;height:1.01px;background:#b4b4b4;"></div><div class="r" style="left:1364.25px;top:90.45px;width:9.25px;height:1.01px;background:#b0b0b0;"></div><div class="r" style="left:1352.48px;top:92.46px;width:8.41px;height:1.01px;background:#b4b4b4;"></div><div class="r" style="left:1364.25px;top:92.46px;width:9.25px;height:1.01px;background:#b0b0b0;"></div><div class="r" style="left:1402.09px;top:86.75px;width:4.2px;height:5.05px;background:#c8323c;"></div><div class="t" style="left:1407px;top:86.6px;font-size:5.6px;line-height:6px;color:#4a5a6a;font-weight:bold;">Medis</div><div class="r" style="left:1341.55px;top:96.16px;width:82.41px;height:1.68px;background:#9ec8f5;"></div><div class="r" style="left:1342.05px;top:99.19px;width:5.38px;height:0.84px;background:#b8b8b8;"></div><div class="r" style="left:1359.2px;top:99.19px;width:9.25px;height:0.84px;background:#bababa;"></div><div class="r" style="left:1382.75px;top:99.19px;width:9.25px;height:0.84px;background:#b8b8b8;"></div><div class="r" style="left:1402.93px;top:99.19px;width:9.25px;height:0.84px;background:#bcbcbc;"></div><div class="r" style="left:1342.05px;top:101.21px;width:5.38px;height:0.84px;background:#b8b8b8;"></div><div class="r" style="left:1359.2px;top:101.21px;width:9.25px;height:0.84px;background:#bababa;"></div><div class="r" style="left:1382.75px;top:101.21px;width:9.25px;height:0.84px;background:#b8b8b8;"></div><div class="r" style="left:1402.93px;top:101.21px;width:9.25px;height:0.84px;background:#bcbcbc;"></div><div class="r" style="left:1342.05px;top:103.23px;width:5.38px;height:0.84px;background:#b8b8b8;"></div><div class="r" style="left:1359.2px;top:103.23px;width:9.25px;height:0.84px;background:#bababa;"></div><div class="r" style="left:1382.75px;top:103.23px;width:9.25px;height:0.84px;background:#b8b8b8;"></div><div class="r" style="left:1402.93px;top:103.23px;width:9.25px;height:0.84px;background:#bcbcbc;"></div><div class="r" style="left:1342.05px;top:104.91px;width:5.38px;height:0.84px;background:#b8b8b8;"></div><div class="r" style="left:1359.2px;top:104.91px;width:9.25px;height:0.84px;background:#bababa;"></div><div class="r" style="left:1382.75px;top:104.91px;width:9.25px;height:0.84px;background:#b8b8b8;"></div><div class="r" style="left:1402.93px;top:104.91px;width:9.25px;height:0.84px;background:#bcbcbc;"></div><div class="r" style="left:1342.05px;top:107.6px;width:5.38px;height:0.84px;background:#b8b8b8;"></div><div class="r" style="left:1359.2px;top:107.6px;width:9.25px;height:0.84px;background:#bababa;"></div><div class="r" style="left:1382.75px;top:107.6px;width:9.25px;height:0.84px;background:#b8b8b8;"></div><div class="r" style="left:1402.93px;top:107.6px;width:9.25px;height:0.84px;background:#bcbcbc;"></div><div class="r" style="left:1342.05px;top:109.62px;width:5.38px;height:0.84px;background:#b8b8b8;"></div><div class="r" style="left:1359.2px;top:109.62px;width:9.25px;height:0.84px;background:#bababa;"></div><div class="r" style="left:1382.75px;top:109.62px;width:9.25px;height:0.84px;background:#b8b8b8;"></div><div class="r" style="left:1402.93px;top:109.62px;width:9.25px;height:0.84px;background:#bcbcbc;"></div><div class="r" style="left:1342.05px;top:111.64px;width:5.38px;height:0.84px;background:#b8b8b8;"></div><div class="r" style="left:1359.2px;top:111.64px;width:9.25px;height:0.84px;background:#bababa;"></div><div class="r" style="left:1382.75px;top:111.64px;width:9.25px;height:0.84px;background:#b8b8b8;"></div><div class="r" style="left:1402.93px;top:111.64px;width:9.25px;height:0.84px;background:#bcbcbc;"></div><div class="r" style="left:1341.55px;top:113.65px;width:82.41px;height:1.68px;background:#9ec8f5;"></div><div class="r" style="left:1342.05px;top:116.68px;width:14.63px;height:0.84px;background:#b6b6b6;"></div><div class="r" style="left:1382.75px;top:116.68px;width:14.3px;height:0.84px;background:#b6b6b6;"></div><div class="r" style="left:1408.82px;top:116.68px;width:10.09px;height:0.84px;background:#bababa;"></div><div class="r" style="left:1342.05px;top:118.7px;width:14.63px;height:0.84px;background:#b6b6b6;"></div><div class="r" style="left:1382.75px;top:118.7px;width:14.3px;height:0.84px;background:#b6b6b6;"></div><div class="r" style="left:1408.82px;top:118.7px;width:10.09px;height:0.84px;background:#bababa;"></div><div class="r" style="left:1342.05px;top:120.72px;width:14.63px;height:0.84px;background:#b6b6b6;"></div><div class="r" style="left:1382.75px;top:120.72px;width:14.3px;height:0.84px;background:#b6b6b6;"></div><div class="r" style="left:1408.82px;top:120.72px;width:10.09px;height:0.84px;background:#bababa;"></div><div class="r" style="left:1342.05px;top:122.74px;width:9.59px;height:1.18px;background:#b0b0b0;"></div><div class="r" style="left:1342.05px;top:124.42px;width:81.06px;height:0.34px;background:#e6e6e6;"></div><div class="r" style="left:1342.05px;top:126.44px;width:2.86px;height:0.84px;background:#b4b4b4;"></div><div class="r" style="left:1345.75px;top:126.44px;width:5.05px;height:0.84px;background:#ee8888;"></div><div class="r" style="left:1354.16px;top:126.44px;width:11.77px;height:0.84px;background:#b6b6b6;"></div><div class="r" style="left:1342.05px;top:128.45px;width:2.86px;height:0.84px;background:#b4b4b4;"></div><div class="r" style="left:1345.75px;top:128.45px;width:5.05px;height:0.84px;background:#ee8888;"></div><div class="r" style="left:1354.16px;top:128.45px;width:11.77px;height:0.84px;background:#b6b6b6;"></div><div class="r" style="left:1342.05px;top:130.47px;width:2.86px;height:0.84px;background:#b4b4b4;"></div><div class="r" style="left:1345.75px;top:130.47px;width:5.05px;height:0.84px;background:#b4b4b4;"></div><div class="r" style="left:1354.16px;top:130.47px;width:11.77px;height:0.84px;background:#b6b6b6;"></div><div class="r" style="left:1342.05px;top:132.49px;width:2.86px;height:0.84px;background:#b4b4b4;"></div><div class="r" style="left:1345.75px;top:132.49px;width:5.05px;height:0.84px;background:#ee8888;"></div><div class="r" style="left:1354.16px;top:132.49px;width:11.77px;height:0.84px;background:#b6b6b6;"></div><div class="r" style="left:1342.05px;top:134.51px;width:2.86px;height:0.84px;background:#b4b4b4;"></div><div class="r" style="left:1345.75px;top:134.51px;width:5.05px;height:0.84px;background:#b4b4b4;"></div><div class="r" style="left:1354.16px;top:134.51px;width:11.77px;height:0.84px;background:#b6b6b6;"></div><div class="r" style="left:1382.75px;top:125.09px;width:7.57px;height:0.84px;background:#b4b4b4;"></div><div class="r" style="left:1392.84px;top:125.09px;width:5.89px;height:0.84px;background:#ee8888;"></div><div class="r" style="left:1405.45px;top:125.09px;width:7.57px;height:0.84px;background:#bababa;"></div><div class="r" style="left:1382.75px;top:127.11px;width:7.57px;height:0.84px;background:#b4b4b4;"></div><div class="r" style="left:1392.84px;top:127.11px;width:5.89px;height:0.84px;background:#b6b6b6;"></div><div class="r" style="left:1405.45px;top:127.11px;width:7.57px;height:0.84px;background:#bababa;"></div><div class="r" style="left:1382.75px;top:129.13px;width:7.57px;height:0.84px;background:#b4b4b4;"></div><div class="r" style="left:1392.84px;top:129.13px;width:5.89px;height:0.84px;background:#b6b6b6;"></div><div class="r" style="left:1405.45px;top:129.13px;width:7.57px;height:0.84px;background:#bababa;"></div><div class="r" style="left:1382.75px;top:131.14px;width:7.57px;height:0.84px;background:#b4b4b4;"></div><div class="r" style="left:1392.84px;top:131.14px;width:5.89px;height:0.84px;background:#b6b6b6;"></div><div class="r" style="left:1405.45px;top:131.14px;width:7.57px;height:0.84px;background:#bababa;"></div><div class="r" style="left:1382.75px;top:134.17px;width:7.57px;height:0.84px;background:#b4b4b4;"></div><div class="r" style="left:1392.84px;top:134.17px;width:5.89px;height:0.84px;background:#b6b6b6;"></div><div class="r" style="left:1405.45px;top:134.17px;width:7.57px;height:0.84px;background:#bababa;"></div><div class="r" style="left:1342.05px;top:136.53px;width:9.59px;height:1.18px;background:#b0b0b0;"></div><div class="r" style="left:1342.05px;top:138.21px;width:81.06px;height:0.34px;background:#e6e6e6;"></div><div class="r" style="left:1342.05px;top:140.23px;width:2.86px;height:0.84px;background:#b4b4b4;"></div><div class="r" style="left:1345.75px;top:140.23px;width:5.05px;height:0.84px;background:#ee8888;"></div><div class="r" style="left:1354.16px;top:140.23px;width:11.77px;height:0.84px;background:#b6b6b6;"></div><div class="r" style="left:1342.05px;top:142.24px;width:2.86px;height:0.84px;background:#b4b4b4;"></div><div class="r" style="left:1345.75px;top:142.24px;width:5.05px;height:0.84px;background:#ee8888;"></div><div class="r" style="left:1354.16px;top:142.24px;width:11.77px;height:0.84px;background:#b6b6b6;"></div><div class="r" style="left:1342.05px;top:144.26px;width:2.86px;height:0.84px;background:#b4b4b4;"></div><div class="r" style="left:1345.75px;top:144.26px;width:5.05px;height:0.84px;background:#ee8888;"></div><div class="r" style="left:1354.16px;top:144.26px;width:11.77px;height:0.84px;background:#b6b6b6;"></div><div class="r" style="left:1342.05px;top:146.28px;width:2.86px;height:0.84px;background:#b4b4b4;"></div><div class="r" style="left:1345.75px;top:146.28px;width:5.05px;height:0.84px;background:#ee8888;"></div><div class="r" style="left:1354.16px;top:146.28px;width:11.77px;height:0.84px;background:#b6b6b6;"></div><div class="r" style="left:1342.05px;top:148.3px;width:2.86px;height:0.84px;background:#b4b4b4;"></div><div class="r" style="left:1345.75px;top:148.3px;width:5.05px;height:0.84px;background:#b4b4b4;"></div><div class="r" style="left:1354.16px;top:148.3px;width:11.77px;height:0.84px;background:#b6b6b6;"></div><div class="r" style="left:1382.75px;top:138.88px;width:7.57px;height:0.84px;background:#b4b4b4;"></div><div class="r" style="left:1392.84px;top:138.88px;width:5.89px;height:0.84px;background:#b6b6b6;"></div><div class="r" style="left:1405.45px;top:138.88px;width:10.09px;height:0.84px;background:#bababa;"></div><div class="r" style="left:1382.75px;top:140.9px;width:7.57px;height:0.84px;background:#b4b4b4;"></div><div class="r" style="left:1392.84px;top:140.9px;width:5.89px;height:0.84px;background:#ee8888;"></div><div class="r" style="left:1405.45px;top:140.9px;width:10.09px;height:0.84px;background:#bababa;"></div><div class="r" style="left:1382.75px;top:142.92px;width:7.57px;height:0.84px;background:#b4b4b4;"></div><div class="r" style="left:1392.84px;top:142.92px;width:5.89px;height:0.84px;background:#b6b6b6;"></div><div class="r" style="left:1405.45px;top:142.92px;width:10.09px;height:0.84px;background:#bababa;"></div><div class="r" style="left:1382.75px;top:144.94px;width:7.57px;height:0.84px;background:#b4b4b4;"></div><div class="r" style="left:1392.84px;top:144.94px;width:5.89px;height:0.84px;background:#b6b6b6;"></div><div class="r" style="left:1405.45px;top:144.94px;width:10.09px;height:0.84px;background:#bababa;"></div><div class="r" style="left:1382.75px;top:147.96px;width:7.57px;height:0.84px;background:#b4b4b4;"></div><div class="r" style="left:1392.84px;top:147.96px;width:5.89px;height:0.84px;background:#b6b6b6;"></div><div class="r" style="left:1405.45px;top:147.96px;width:10.09px;height:0.84px;background:#bababa;"></div><div class="r" style="left:1342.05px;top:149.98px;width:39.02px;height:20.52px;background:#0a0a0a;"></div><div class="r" style="left:1381.91px;top:149.98px;width:38.68px;height:20.52px;background:#0a0a0a;"></div><div class="r" style="left:1343.4px;top:153.34px;width:6.73px;height:6.73px;background:#bdbdbd;border-radius:45%;"></div><div class="r" style="left:1346.76px;top:154.02px;width:3.03px;height:3.36px;background:transparent;border-radius:50%;box-shadow:inset 0 0 0 0.5px #d33;"></div><div class="r" style="left:1353.15px;top:153.34px;width:6.73px;height:6.73px;background:#bdbdbd;border-radius:45%;"></div><div class="r" style="left:1356.51px;top:154.02px;width:3.03px;height:3.36px;background:transparent;border-radius:50%;box-shadow:inset 0 0 0 0.5px #d33;"></div><div class="r" style="left:1362.9px;top:153.34px;width:6.73px;height:6.73px;background:#bdbdbd;border-radius:45%;"></div><div class="r" style="left:1366.27px;top:154.02px;width:3.03px;height:3.36px;background:transparent;border-radius:50%;box-shadow:inset 0 0 0 0.5px #d33;"></div><div class="r" style="left:1372.66px;top:153.34px;width:6.73px;height:6.73px;background:#bdbdbd;border-radius:45%;"></div><div class="r" style="left:1376.02px;top:154.02px;width:3.03px;height:3.36px;background:transparent;border-radius:50%;box-shadow:inset 0 0 0 0.5px #d33;"></div><div class="r" style="left:1383.25px;top:153.34px;width:6.73px;height:6.73px;background:#bdbdbd;border-radius:45%;"></div><div class="r" style="left:1383.93px;top:153.34px;width:3.7px;height:2.69px;background:transparent;border-radius:50%;box-shadow:inset 0 0 0 0.5px #dd3;"></div><div class="r" style="left:1393.01px;top:153.34px;width:6.73px;height:6.73px;background:#bdbdbd;border-radius:45%;"></div><div class="r" style="left:1393.68px;top:153.34px;width:3.7px;height:2.69px;background:transparent;border-radius:50%;box-shadow:inset 0 0 0 0.5px #dd3;"></div><div class="r" style="left:1402.76px;top:153.34px;width:6.73px;height:6.73px;background:#bdbdbd;border-radius:45%;"></div><div class="r" style="left:1403.44px;top:153.34px;width:3.7px;height:2.69px;background:transparent;border-radius:50%;box-shadow:inset 0 0 0 0.5px #dd3;"></div><div class="r" style="left:1412.52px;top:153.34px;width:6.73px;height:6.73px;background:#bdbdbd;border-radius:45%;"></div><div class="r" style="left:1413.19px;top:153.34px;width:3.7px;height:2.69px;background:transparent;border-radius:50%;box-shadow:inset 0 0 0 0.5px #dd3;"></div><div class="r" style="left:1343.4px;top:163.1px;width:6.73px;height:6.73px;background:#bdbdbd;border-radius:45%;"></div><div class="r" style="left:1346.76px;top:163.77px;width:3.03px;height:3.36px;background:transparent;border-radius:50%;box-shadow:inset 0 0 0 0.5px #d33;"></div><div class="r" style="left:1353.15px;top:163.1px;width:6.73px;height:6.73px;background:#bdbdbd;border-radius:45%;"></div><div class="r" style="left:1356.51px;top:163.77px;width:3.03px;height:3.36px;background:transparent;border-radius:50%;box-shadow:inset 0 0 0 0.5px #d33;"></div><div class="r" style="left:1362.9px;top:163.1px;width:6.73px;height:6.73px;background:#bdbdbd;border-radius:45%;"></div><div class="r" style="left:1366.27px;top:163.77px;width:3.03px;height:3.36px;background:transparent;border-radius:50%;box-shadow:inset 0 0 0 0.5px #d33;"></div><div class="r" style="left:1372.66px;top:163.1px;width:6.73px;height:6.73px;background:#bdbdbd;border-radius:45%;"></div><div class="r" style="left:1376.02px;top:163.77px;width:3.03px;height:3.36px;background:transparent;border-radius:50%;box-shadow:inset 0 0 0 0.5px #d33;"></div><div class="r" style="left:1383.25px;top:163.1px;width:6.73px;height:6.73px;background:#bdbdbd;border-radius:45%;"></div><div class="r" style="left:1383.93px;top:163.1px;width:3.7px;height:2.69px;background:transparent;border-radius:50%;box-shadow:inset 0 0 0 0.5px #dd3;"></div><div class="r" style="left:1393.01px;top:163.1px;width:6.73px;height:6.73px;background:#bdbdbd;border-radius:45%;"></div><div class="r" style="left:1393.68px;top:163.1px;width:3.7px;height:2.69px;background:transparent;border-radius:50%;box-shadow:inset 0 0 0 0.5px #dd3;"></div><div class="r" style="left:1402.76px;top:163.1px;width:6.73px;height:6.73px;background:#bdbdbd;border-radius:45%;"></div><div class="r" style="left:1403.44px;top:163.1px;width:3.7px;height:2.69px;background:transparent;border-radius:50%;box-shadow:inset 0 0 0 0.5px #dd3;"></div><div class="r" style="left:1412.52px;top:163.1px;width:6.73px;height:6.73px;background:#bdbdbd;border-radius:45%;"></div><div class="r" style="left:1413.19px;top:163.1px;width:3.7px;height:2.69px;background:transparent;border-radius:50%;box-shadow:inset 0 0 0 0.5px #dd3;"></div><div class="r" style="left:1342.05px;top:171.34px;width:2.86px;height:0.84px;background:#b8b8b8;"></div><div class="r" style="left:1381.91px;top:171.34px;width:2.86px;height:0.84px;background:#b8b8b8;"></div><div class="r" style="left:1343.23px;top:196.23px;width:79.04px;height:0.5px;background:#e0e0e0;"></div><div style="position:absolute;left:1323px;top:233px;width:120px;height:120px;overflow:hidden;"><div style="position:absolute;left:0;top:0;width:344px;height:344px;transform:scale(0.349);transform-origin:0 0;"><svg style="position:absolute;left:0px;top:0px" width="86" height="86" viewBox="0 0 86 86"><rect width="86" height="86" fill="#000"/><g filter="url(#bl)"><path d="M28 27 L50 19 L86 12 L86 28 L70 28 L50 29 L32 33 Z" fill="#545454"/><ellipse cx="51" cy="23.5" rx="11" ry="3.2" fill="#c0c0c0"/><ellipse cx="46" cy="46" rx="16" ry="12" fill="#666"/><ellipse cx="63" cy="51" rx="14" ry="17" fill="#8a8a8a"/><ellipse cx="43" cy="43" rx="8" ry="7" fill="#a0a0a0"/><ellipse cx="53" cy="33" rx="8.5" ry="6.8" fill="#cfcfcf"/><path d="M18 52 Q20 42 30 40 Q40 42 48 50 Q55 57 56 66 Q57 78 51 86 L25 86 Q17 72 18 52 Z" fill="#cfcfcf"/><ellipse cx="86" cy="86" rx="14" ry="10" fill="#555"/><ellipse cx="10" cy="62" rx="1.5" ry="1.5" fill="#aaa"/><ellipse cx="14" cy="52" rx="1.2" ry="1.2" fill="#999"/><ellipse cx="63.8" cy="50.7" rx="10.2" ry="10.8" transform="rotate(15 63.8 50.7)" fill="#cdcdcd"/></g><ellipse cx="63.8" cy="50.7" rx="10.2" ry="10.8" transform="rotate(15 63.8 50.7)" fill="none" stroke="#e32626" stroke-width="1.5"/><text x="3.3" y="11.8" font-size="10.0" fill="#d8d8d8" stroke="#d8d8d8" stroke-width="0.3" font-family="Liberation Sans">Gated Chest 8.0 SPO</text><text x="2.6" y="35.8" font-size="10" fill="#d0d0d0" stroke="#d0d0d0" stroke-width="0.2" font-family="Liberation Sans">s19p17</text></svg><svg style="position:absolute;left:86px;top:0px" width="86" height="86" viewBox="0 0 86 86"><rect width="86" height="86" fill="#000"/><g filter="url(#bl)"><path d="M19 28 L45 19 L86 12 L86 28 L60 29 L35 32 Z" fill="#545454"/><ellipse cx="52" cy="24" rx="10" ry="3.6" fill="#c0c0c0"/><ellipse cx="45" cy="45" rx="12" ry="9" fill="#6e6e6e"/><ellipse cx="58" cy="50" rx="21" ry="17" fill="#8a8a8a"/><ellipse cx="50" cy="34" rx="10" ry="6.5" fill="#cfcfcf"/><path d="M17 53 Q19 43 30 41 Q42 43 50 51 Q57 58 57 68 Q57 80 51 86 L25 86 Q16 72 17 53 Z" fill="#cfcfcf"/><ellipse cx="86" cy="86" rx="16" ry="12" fill="#555"/><ellipse cx="10" cy="62" rx="1.5" ry="1.5" fill="#aaa"/><path d="M40.5 46 Q45 40 53 42 Q62 37 72 38 Q77 44 74 55 Q70 63 62 60 Q54 55 46 51 Q39 49 40.5 46 Z" fill="#cdcdcd"/></g><path d="M40.5 46 Q45 40 53 42 Q62 37 72 38 Q77 44 74 55 Q70 63 62 60 Q54 55 46 51 Q39 49 40.5 46 Z" fill="none" stroke="#e32626" stroke-width="1.5"/><text x="3.3" y="11.8" font-size="10.0" fill="#d8d8d8" stroke="#d8d8d8" stroke-width="0.3" font-family="Liberation Sans">Gated Chest 8.0 SPO</text><text x="2.6" y="35.8" font-size="10" fill="#d0d0d0" stroke="#d0d0d0" stroke-width="0.2" font-family="Liberation Sans">s18p17</text></svg><svg style="position:absolute;left:172px;top:0px" width="86" height="86" viewBox="0 0 86 86"><rect width="86" height="86" fill="#000"/><g filter="url(#bl)"><path d="M0 35 L30 22 L86 12 L86 27 L55 28 L25 34 L0 43 Z" fill="#545454"/><ellipse cx="55" cy="25" rx="8" ry="3.8" fill="#c0c0c0"/><ellipse cx="60" cy="49" rx="19" ry="18" fill="#8a8a8a"/><ellipse cx="38" cy="37" rx="14" ry="8" fill="#c4c4c4"/><path d="M18 52 Q20 45 32 44 Q45 46 52 55 Q57 63 56 75 L54 86 L28 86 Q17 72 18 52 Z" fill="#cfcfcf"/><ellipse cx="82" cy="86" rx="18" ry="15" fill="#555"/><path d="M45 45 Q55 38 67 36 Q72 38 77 48 Q77 56 70 60.5 Q63 62 55 55 Q48 50 45 45 Z" fill="#cdcdcd"/></g><path d="M45 45 Q55 38 67 36 Q72 38 77 48 Q77 56 70 60.5 Q63 62 55 55 Q48 50 45 45 Z" fill="none" stroke="#e32626" stroke-width="1.5"/><text x="3.3" y="11.8" font-size="10.0" fill="#d8d8d8" stroke="#d8d8d8" stroke-width="0.3" font-family="Liberation Sans">Gated Chest 8.0 SPO</text><text x="2.6" y="35.8" font-size="10" fill="#d0d0d0" stroke="#d0d0d0" stroke-width="0.2" font-family="Liberation Sans">s17p17</text></svg><svg style="position:absolute;left:258px;top:0px" width="86" height="86" viewBox="0 0 86 86"><rect width="86" height="86" fill="#000"/><g filter="url(#bl)"><path d="M0 35 L30 22 L86 12 L86 27 L55 28 L25 34 L0 45 Z" fill="#545454"/><ellipse cx="55.5" cy="25.5" rx="8" ry="4" fill="#c0c0c0"/><ellipse cx="63" cy="49" rx="17" ry="18" fill="#8a8a8a"/><path d="M13 45 Q20 30 38 27 Q55 30 58 45 Q56 62 55 78 L52 86 L26 86 Q13 68 13 45 Z" fill="#cfcfcf"/><ellipse cx="80" cy="86" rx="20" ry="18" fill="#555"/><path d="M50 48 Q58 39 66 36 Q73 37 77.5 47 Q77 54 71 60 Q63 61 55 56 Q49 51 50 48 Z" fill="#cdcdcd"/></g><path d="M50 48 Q58 39 66 36 Q73 37 77.5 47 Q77 54 71 60 Q63 61 55 56 Q49 51 50 48 Z" fill="none" stroke="#e32626" stroke-width="1.5"/><text x="3.3" y="11.8" font-size="10.0" fill="#d8d8d8" stroke="#d8d8d8" stroke-width="0.3" font-family="Liberation Sans">Gated Chest 8.0 SPO</text><text x="2.6" y="35.8" font-size="10" fill="#d0d0d0" stroke="#d0d0d0" stroke-width="0.2" font-family="Liberation Sans">s16p17</text></svg><svg style="position:absolute;left:0px;top:86px" width="86" height="86" viewBox="0 0 86 86"><rect width="86" height="86" fill="#000"/><g filter="url(#bl)"><path d="M0 17 L40 13 L86 16 L86 30 L45 27 L0 34 Z" fill="#545454"/><path d="M1 30 Q14 23 27 24" stroke="#a8a8a8" stroke-width="2.5" fill="none" stroke-linecap="round"/><ellipse cx="52" cy="26" rx="8" ry="4.6" fill="#c0c0c0"/><ellipse cx="64" cy="49" rx="16" ry="19" fill="#8a8a8a"/><path d="M13 46 Q18 30 38 28 Q52 32 56 46 Q55 62 52 74 L46 86 L24 86 Q12 65 13 46 Z" fill="#cfcfcf"/><path d="M58 86 L64 68 L86 62 L86 86 Z" fill="#5a5a5a"/><ellipse cx="64.5" cy="48" rx="12.3" ry="12" fill="#cdcdcd"/></g><ellipse cx="64.5" cy="48" rx="12.3" ry="12" fill="none" stroke="#e32626" stroke-width="1.5"/><text x="3.3" y="11.8" font-size="10.0" fill="#d8d8d8" stroke="#d8d8d8" stroke-width="0.3" font-family="Liberation Sans">Gated Chest 8.0 SPO</text><text x="2.6" y="35.8" font-size="10" fill="#d0d0d0" stroke="#d0d0d0" stroke-width="0.2" font-family="Liberation Sans">s15p17</text></svg><svg style="position:absolute;left:86px;top:86px" width="86" height="86" viewBox="0 0 86 86"><rect width="86" height="86" fill="#000"/><g filter="url(#bl)"><path d="M0 17 L40 13 L86 16 L86 30 L45 27 L0 34 Z" fill="#545454"/><path d="M1 32 Q14 24 29 24" stroke="#a0a0a0" stroke-width="2.5" fill="none" stroke-linecap="round"/><ellipse cx="50" cy="26" rx="8" ry="4.6" fill="#c0c0c0"/><ellipse cx="66" cy="50" rx="14" ry="20" fill="#8a8a8a"/><path d="M12 48 Q16 30 35 28 Q52 32 57 46 Q56 64 50 76 Q40 82 25 78 Q12 66 12 48 Z" fill="#cfcfcf"/><ellipse cx="44" cy="80" rx="11" ry="7" fill="#bbb"/><path d="M62 86 L64 68 L86 64 L86 86 Z" fill="#5a5a5a"/><ellipse cx="66.3" cy="49.3" rx="10" ry="12.3" fill="#cdcdcd"/></g><ellipse cx="66.3" cy="49.3" rx="10" ry="12.3" fill="none" stroke="#e32626" stroke-width="1.5"/><text x="3.3" y="11.8" font-size="10.0" fill="#d8d8d8" stroke="#d8d8d8" stroke-width="0.3" font-family="Liberation Sans">Gated Chest 8.0 SPO</text><text x="2.6" y="35.8" font-size="10" fill="#d0d0d0" stroke="#d0d0d0" stroke-width="0.2" font-family="Liberation Sans">s14p17</text></svg><svg style="position:absolute;left:172px;top:86px" width="86" height="86" viewBox="0 0 86 86"><rect width="86" height="86" fill="#000"/><g filter="url(#bl)"><path d="M0 18 L40 14 L86 17 L86 31 L45 28 L0 35 Z" fill="#545454"/><path d="M1 33 Q14 25 29 25" stroke="#999" stroke-width="2.5" fill="none" stroke-linecap="round"/><ellipse cx="52" cy="27" rx="8" ry="4.6" fill="#c0c0c0"/><ellipse cx="66" cy="50" rx="15" ry="19" fill="#8a8a8a"/><path d="M11 48 Q15 30 33 28 Q50 30 54 45 Q54 62 48 72 Q35 76 22 72 Q11 62 11 48 Z" fill="#cfcfcf"/><path d="M30 86 L32 70 Q60 66 86 68 L86 86 Z" fill="#5a5a5a"/><ellipse cx="45" cy="80" rx="10" ry="7" fill="#a8a8a8"/><ellipse cx="66" cy="50" rx="10.4" ry="12.7" fill="#cdcdcd"/></g><ellipse cx="66" cy="50" rx="10.4" ry="12.7" fill="none" stroke="#e32626" stroke-width="1.5"/><text x="3.3" y="11.8" font-size="10.0" fill="#d8d8d8" stroke="#d8d8d8" stroke-width="0.3" font-family="Liberation Sans">Gated Chest 8.0 SPO</text><text x="2.6" y="35.8" font-size="10" fill="#d0d0d0" stroke="#d0d0d0" stroke-width="0.2" font-family="Liberation Sans">s13p17</text></svg><svg style="position:absolute;left:258px;top:86px" width="86" height="86" viewBox="0 0 86 86"><rect width="86" height="86" fill="#000"/><g filter="url(#bl)"><path d="M0 18 L40 14 L86 18 L86 32 L45 29 L0 36 Z" fill="#545454"/><path d="M1 34 Q14 26 29 26" stroke="#999" stroke-width="2.5" fill="none" stroke-linecap="round"/><ellipse cx="54" cy="28" rx="7" ry="4" fill="#c0c0c0"/><ellipse cx="67" cy="52" rx="13" ry="18" fill="#8a8a8a"/><ellipse cx="34" cy="51" rx="21" ry="23" fill="#cfcfcf"/><path d="M22 86 L25 72 Q55 68 86 70 L86 86 Z" fill="#5a5a5a"/><ellipse cx="67.3" cy="51.4" rx="10.4" ry="12.2" fill="#cdcdcd"/></g><ellipse cx="67.3" cy="51.4" rx="10.4" ry="12.2" fill="none" stroke="#e32626" stroke-width="1.5"/><text x="3.3" y="11.8" font-size="10.0" fill="#d8d8d8" stroke="#d8d8d8" stroke-width="0.3" font-family="Liberation Sans">Gated Chest 8.0 SPO</text><text x="2.6" y="35.8" font-size="10" fill="#d0d0d0" stroke="#d0d0d0" stroke-width="0.2" font-family="Liberation Sans">s12p17</text></svg><svg style="position:absolute;left:0px;top:172px" width="86" height="86" viewBox="0 0 86 86"><rect width="86" height="86" fill="#000"/><g filter="url(#bl)"><path d="M0 17 Q49 4.5 86 26 L86 86 L0 86 Z" fill="#545454"/><path d="M0 45 Q20 30 56 29 Q75 32 86 42" stroke="#7c7c7c" stroke-width="3.5" fill="none" stroke-linecap="round"/><path d="M0 72 Q43 64.5 86 63 L86 86 L0 86 Z" fill="#707070"/><path d="M63 86 L86 78 L86 86 Z" fill="#000"/><path d="M0 50 Q8 38 17 37 Q13 55 17 72 Q8 74 0 76 Z" fill="#000"/><path d="M77 45 L86 43 L86 61 L78 60 Z" fill="#000"/><ellipse cx="65" cy="52" rx="13" ry="15" fill="#8a8a8a"/><ellipse cx="33.6" cy="50.4" rx="19.5" ry="19.5" fill="#cfcfcf"/><ellipse cx="53" cy="78" rx="9" ry="7" fill="#999"/><path d="M57 50 Q57 42 63 41.5 Q71 42 74 51 Q74 58 70 61 Q64 63 59 61 Q56 56 57 50 Z" fill="#cdcdcd"/></g><path d="M57 50 Q57 42 63 41.5 Q71 42 74 51 Q74 58 70 61 Q64 63 59 61 Q56 56 57 50 Z" fill="none" stroke="#e32626" stroke-width="1.5"/><text x="3.3" y="11.8" font-size="10.0" fill="#d8d8d8" stroke="#d8d8d8" stroke-width="0.3" font-family="Liberation Sans">Gated Chest 8.0 SPO</text><text x="2.6" y="35.8" font-size="10" fill="#d0d0d0" stroke="#d0d0d0" stroke-width="0.2" font-family="Liberation Sans">s11p17</text></svg><svg style="position:absolute;left:86px;top:172px" width="86" height="86" viewBox="0 0 86 86"><rect width="86" height="86" fill="#000"/><g filter="url(#bl)"><path d="M0 20 Q40 6.0 86 24 L86 86 L0 86 Z" fill="#545454"/><path d="M0 47 Q20 32 56 30 Q75 33 86 44" stroke="#7c7c7c" stroke-width="3.5" fill="none" stroke-linecap="round"/><path d="M0 72 Q43 64.5 86 63 L86 86 L0 86 Z" fill="#707070"/><path d="M63 86 L86 78 L86 86 Z" fill="#000"/><path d="M0 52 Q8 38 19 37 Q14 58 19 80 Q8 81 0 82 Z" fill="#000"/><path d="M80 45 L86 43 L86 62 L80 62 Z" fill="#000"/><ellipse cx="63.5" cy="51.5" rx="10" ry="13" fill="#8a8a8a"/><ellipse cx="36" cy="51.5" rx="20" ry="18" fill="#cfcfcf"/><ellipse cx="50" cy="78" rx="10" ry="7" fill="#999"/><ellipse cx="64" cy="51.5" rx="6" ry="9" fill="#cdcdcd"/></g><ellipse cx="64" cy="51.5" rx="6" ry="9" fill="none" stroke="#e32626" stroke-width="1.5"/><text x="3.3" y="11.8" font-size="10.0" fill="#d8d8d8" stroke="#d8d8d8" stroke-width="0.3" font-family="Liberation Sans">Gated Chest 8.0 SPO</text><text x="2.6" y="35.8" font-size="10" fill="#d0d0d0" stroke="#d0d0d0" stroke-width="0.2" font-family="Liberation Sans">s10p17</text></svg><svg style="position:absolute;left:172px;top:172px" width="86" height="86" viewBox="0 0 86 86"><rect width="86" height="86" fill="#000"/><g filter="url(#bl)"><path d="M0 17 Q40 4.5 86 30 L86 86 L0 86 Z" fill="#545454"/><path d="M0 47.5 Q16 33 40 34 Q60 34 86 47.5" stroke="#7c7c7c" stroke-width="3.5" fill="none" stroke-linecap="round"/><path d="M0 71 Q43 64.0 86 63 L86 86 L0 86 Z" fill="#707070"/><path d="M53 86 L86 69 L86 86 Z" fill="#000"/><path d="M0 52 Q8 39 19 38 Q14 58 18 80 L0 81 Z" fill="#000"/><path d="M75 42 L86 46 L86 66 L78 60 Z" fill="#000"/><ellipse cx="63.5" cy="51.5" rx="9" ry="11.5" fill="#8a8a8a"/><ellipse cx="37" cy="50.5" rx="19.3" ry="16.8" fill="#cfcfcf"/><ellipse cx="47" cy="76" rx="8" ry="6" fill="#999"/><ellipse cx="63.8" cy="51.5" rx="4.4" ry="7.8" fill="#cdcdcd"/></g><ellipse cx="63.8" cy="51.5" rx="4.4" ry="7.8" fill="none" stroke="#e32626" stroke-width="1.5"/><text x="3.3" y="11.8" font-size="10.0" fill="#d8d8d8" stroke="#d8d8d8" stroke-width="0.3" font-family="Liberation Sans">Gated Chest 8.0 SPO</text><text x="2.6" y="35.8" font-size="10" fill="#d0d0d0" stroke="#d0d0d0" stroke-width="0.2" font-family="Liberation Sans">s9p17</text></svg><svg style="position:absolute;left:258px;top:172px" width="86" height="86" viewBox="0 0 86 86"><rect width="86" height="86" fill="#000"/><g filter="url(#bl)"><path d="M0 18 Q40 4.0 86 30 L86 86 L0 86 Z" fill="#545454"/><path d="M0 48 Q16 34 40 35 Q60 35 86 48" stroke="#7c7c7c" stroke-width="3.5" fill="none" stroke-linecap="round"/><path d="M0 70 Q43 62.0 86 60 L86 86 L0 86 Z" fill="#707070"/><path d="M50 86 L86 62 L86 86 Z" fill="#000"/><path d="M0 54 Q8 40 19 40 Q14 60 19 86 L0 86 Z" fill="#000"/><path d="M75 45 L86 48 L86 64 L78 60 Z" fill="#000"/><ellipse cx="63.5" cy="51" rx="8" ry="10" fill="#8a8a8a"/><ellipse cx="37.2" cy="51" rx="18.3" ry="14.4" fill="#cfcfcf"/><ellipse cx="46" cy="74" rx="8" ry="6" fill="#999"/><ellipse cx="63.5" cy="51" rx="3.9" ry="6.4" fill="#cdcdcd"/></g><ellipse cx="63.5" cy="51" rx="3.9" ry="6.4" fill="none" stroke="#e32626" stroke-width="1.5"/><text x="3.3" y="11.8" font-size="10.0" fill="#d8d8d8" stroke="#d8d8d8" stroke-width="0.3" font-family="Liberation Sans">Gated Chest 8.0 SPO</text><text x="2.6" y="35.8" font-size="10" fill="#d0d0d0" stroke="#d0d0d0" stroke-width="0.2" font-family="Liberation Sans">s8p17</text></svg><svg style="position:absolute;left:0px;top:258px" width="86" height="86" viewBox="0 0 86 86"><rect width="86" height="86" fill="#000"/><g filter="url(#bl)"><path d="M0 27 Q45 1.6999999999999993 86 33.6 L86 86 L0 86 Z" fill="#545454"/><path d="M0 52.6 Q17 40 45 37 Q70 38 86 44.8" stroke="#7c7c7c" stroke-width="3.5" fill="none" stroke-linecap="round"/><path d="M3 67 Q8 52 21 44 Q25 56 22 67 Z" fill="#000"/><ellipse cx="39.5" cy="52" rx="17.5" ry="10.7" fill="#cfcfcf"/><ellipse cx="4" cy="55" rx="2.5" ry="1.5" fill="#ccc" transform="rotate(-30 4 55)"/><ellipse cx="62.4" cy="52" rx="3.5" ry="6" transform="rotate(-10 62.4 52)" fill="#cdcdcd"/></g><ellipse cx="62.4" cy="52" rx="3.5" ry="6" transform="rotate(-10 62.4 52)" fill="none" stroke="#e32626" stroke-width="1.5"/><text x="3.3" y="11.8" font-size="10.0" fill="#d8d8d8" stroke="#d8d8d8" stroke-width="0.3" font-family="Liberation Sans">Gated Chest 8.0 SPO</text><text x="2.6" y="35.8" font-size="10" fill="#d0d0d0" stroke="#d0d0d0" stroke-width="0.2" font-family="Liberation Sans">s7p17</text></svg><svg style="position:absolute;left:86px;top:258px" width="86" height="86" viewBox="0 0 86 86"><rect width="86" height="86" fill="#000"/><g filter="url(#bl)"><path d="M0 24.6 Q28 5.050000000000001 86 32.5 L86 86 L0 86 Z" fill="#545454"/><path d="M0 56 Q22 41 50 40 Q70 41 86 44.8" stroke="#7c7c7c" stroke-width="3.5" fill="none" stroke-linecap="round"/><path d="M2.4 67 Q8 50 23 44 Q29 54 25 67 Z" fill="#000"/><ellipse cx="40.7" cy="52.6" rx="15.5" ry="10" fill="#cfcfcf"/><ellipse cx="4" cy="58" rx="2.5" ry="1.5" fill="#ccc" transform="rotate(-30 4 58)"/><ellipse cx="61.8" cy="52.6" rx="3.3" ry="5.6" transform="rotate(-25 61.8 52.6)" fill="#cdcdcd"/></g><ellipse cx="61.8" cy="52.6" rx="3.3" ry="5.6" transform="rotate(-25 61.8 52.6)" fill="none" stroke="#e32626" stroke-width="1.5"/><text x="3.3" y="11.8" font-size="10.0" fill="#d8d8d8" stroke="#d8d8d8" stroke-width="0.3" font-family="Liberation Sans">Gated Chest 8.0 SPO</text><text x="2.6" y="35.8" font-size="10" fill="#d0d0d0" stroke="#d0d0d0" stroke-width="0.2" font-family="Liberation Sans">s6p17</text></svg><svg style="position:absolute;left:172px;top:258px" width="86" height="86" viewBox="0 0 86 86"><rect width="86" height="86" fill="#000"/><g filter="url(#bl)"><path d="M0 24.8 Q20 13.049999999999997 86 36.7 L86 86 L0 86 Z" fill="#545454"/><path d="M0 56.5 Q12 44 39.6 40.7 Q65 42 86 50.5" stroke="#7c7c7c" stroke-width="3.5" fill="none" stroke-linecap="round"/><path d="M9 67 Q12 50 23 45.6 Q31 52 27 67 Z" fill="#000"/><ellipse cx="42.5" cy="52.5" rx="12.8" ry="6" fill="#cfcfcf"/><ellipse cx="6" cy="58" rx="2.5" ry="1.5" fill="#ccc" transform="rotate(-30 6 58)"/><circle cx="59.4" cy="53.5" r="2.9" fill="#cdcdcd"/></g><circle cx="59.4" cy="53.5" r="2.9" fill="none" stroke="#e32626" stroke-width="1.5"/><text x="3.3" y="11.8" font-size="10.0" fill="#d8d8d8" stroke="#d8d8d8" stroke-width="0.3" font-family="Liberation Sans">Gated Chest 8.0 SPO</text><text x="2.6" y="35.8" font-size="10" fill="#d0d0d0" stroke="#d0d0d0" stroke-width="0.2" font-family="Liberation Sans">s5p17</text></svg><svg style="position:absolute;left:258px;top:258px" width="86" height="86" viewBox="0 0 86 86"><rect width="86" height="86" fill="#000"/><g filter="url(#bl)"><path d="M0 26 Q20 12.0 86 38 L86 86 L0 86 Z" fill="#545454"/><path d="M0 60 Q14 47 50 44 Q70 45 86 52" stroke="#7c7c7c" stroke-width="3.5" fill="none" stroke-linecap="round"/><path d="M7 67 Q10 52 23 48.6 Q32 54 28 67 Z" fill="#000"/><ellipse cx="50" cy="56" rx="12" ry="6" fill="#5e5e5e"/><ellipse cx="8" cy="60" rx="2.5" ry="1.5" fill="#ccc" transform="rotate(-30 8 60)"/></g><text x="3.3" y="11.8" font-size="10.0" fill="#d8d8d8" stroke="#d8d8d8" stroke-width="0.3" font-family="Liberation Sans">Gated Chest 8.0 SPO</text><text x="2.6" y="35.8" font-size="10" fill="#d0d0d0" stroke="#d0d0d0" stroke-width="0.2" font-family="Liberation Sans">s4p17</text></svg></div><div style="position:absolute;left:0;top:0;width:114px;height:114px;border:3px solid #fff;"></div></div><div style="position:absolute;left:1323px;top:358px;width:120px;height:120px;overflow:hidden;"><div style="position:absolute;left:0;top:0;width:344px;height:344px;transform:scale(0.349);transform-origin:0 0;"><svg style="position:absolute;left:0px;top:0px" width="86" height="86" viewBox="0 0 86 86"><rect width="86" height="86" fill="#000"/><g filter="url(#bl)"><path d="M28 27 L50 19 L86 12 L86 28 L70 28 L50 29 L32 33 Z" fill="#545454"/><ellipse cx="51" cy="23.5" rx="11" ry="3.2" fill="#c0c0c0"/><ellipse cx="46" cy="46" rx="16" ry="12" fill="#666"/><ellipse cx="63" cy="51" rx="14" ry="17" fill="#8a8a8a"/><ellipse cx="43" cy="43" rx="8" ry="7" fill="#a0a0a0"/><ellipse cx="53" cy="33" rx="8.5" ry="6.8" fill="#cfcfcf"/><path d="M18 52 Q20 42 30 40 Q40 42 48 50 Q55 57 56 66 Q57 78 51 86 L25 86 Q17 72 18 52 Z" fill="#cfcfcf"/><ellipse cx="86" cy="86" rx="14" ry="10" fill="#555"/><ellipse cx="10" cy="62" rx="1.5" ry="1.5" fill="#aaa"/><ellipse cx="14" cy="52" rx="1.2" ry="1.2" fill="#999"/><ellipse cx="63.8" cy="50.7" rx="10.2" ry="10.8" transform="rotate(15 63.8 50.7)" fill="#c2c2c2"/><ellipse cx="52.6" cy="33" rx="8.6" ry="7" fill="#d0d0d0"/></g><ellipse cx="52.6" cy="33" rx="8.6" ry="7" fill="none" stroke="#e8e030" stroke-width="1.6"/><text x="3.3" y="11.8" font-size="10.0" fill="#d8d8d8" stroke="#d8d8d8" stroke-width="0.3" font-family="Liberation Sans">Gated Chest 8.0 SPO</text><text x="2.6" y="35.8" font-size="10" fill="#d0d0d0" stroke="#d0d0d0" stroke-width="0.2" font-family="Liberation Sans">s19p19</text></svg><svg style="position:absolute;left:86px;top:0px" width="86" height="86" viewBox="0 0 86 86"><rect width="86" height="86" fill="#000"/><g filter="url(#bl)"><path d="M19 28 L45 19 L86 12 L86 28 L60 29 L35 32 Z" fill="#545454"/><ellipse cx="52" cy="24" rx="10" ry="3.6" fill="#c0c0c0"/><ellipse cx="45" cy="45" rx="12" ry="9" fill="#6e6e6e"/><ellipse cx="58" cy="50" rx="21" ry="17" fill="#8a8a8a"/><ellipse cx="50" cy="34" rx="10" ry="6.5" fill="#cfcfcf"/><path d="M17 53 Q19 43 30 41 Q42 43 50 51 Q57 58 57 68 Q57 80 51 86 L25 86 Q16 72 17 53 Z" fill="#cfcfcf"/><ellipse cx="86" cy="86" rx="16" ry="12" fill="#555"/><ellipse cx="10" cy="62" rx="1.5" ry="1.5" fill="#aaa"/><path d="M40.5 46 Q45 40 53 42 Q62 37 72 38 Q77 44 74 55 Q70 63 62 60 Q54 55 46 51 Q39 49 40.5 46 Z" fill="#c2c2c2"/><path d="M25 36 Q33 32 43 34 Q50 27 58 27 Q65 30 62 38 Q55 41 45 38 Q35 39 25 36 Z" fill="#d0d0d0"/></g><path d="M25 36 Q33 32 43 34 Q50 27 58 27 Q65 30 62 38 Q55 41 45 38 Q35 39 25 36 Z" fill="none" stroke="#e8e030" stroke-width="1.6"/><text x="3.3" y="11.8" font-size="10.0" fill="#d8d8d8" stroke="#d8d8d8" stroke-width="0.3" font-family="Liberation Sans">Gated Chest 8.0 SPO</text><text x="2.6" y="35.8" font-size="10" fill="#d0d0d0" stroke="#d0d0d0" stroke-width="0.2" font-family="Liberation Sans">s18p19</text></svg><svg style="position:absolute;left:172px;top:0px" width="86" height="86" viewBox="0 0 86 86"><rect width="86" height="86" fill="#000"/><g filter="url(#bl)"><path d="M0 35 L30 22 L86 12 L86 27 L55 28 L25 34 L0 43 Z" fill="#545454"/><ellipse cx="55" cy="25" rx="8" ry="3.8" fill="#c0c0c0"/><ellipse cx="60" cy="49" rx="19" ry="18" fill="#8a8a8a"/><ellipse cx="38" cy="37" rx="14" ry="8" fill="#c4c4c4"/><path d="M18 52 Q20 45 32 44 Q45 46 52 55 Q57 63 56 75 L54 86 L28 86 Q17 72 18 52 Z" fill="#cfcfcf"/><ellipse cx="82" cy="86" rx="18" ry="15" fill="#555"/><path d="M45 45 Q55 38 67 36 Q72 38 77 48 Q77 56 70 60.5 Q63 62 55 55 Q48 50 45 45 Z" fill="#c2c2c2"/><ellipse cx="40.7" cy="35.3" rx="17.5" ry="6.8" transform="rotate(-8 40.7 35.3)" fill="#d0d0d0"/></g><ellipse cx="40.7" cy="35.3" rx="17.5" ry="6.8" transform="rotate(-8 40.7 35.3)" fill="none" stroke="#e8e030" stroke-width="1.6"/><text x="3.3" y="11.8" font-size="10.0" fill="#d8d8d8" stroke="#d8d8d8" stroke-width="0.3" font-family="Liberation Sans">Gated Chest 8.0 SPO</text><text x="2.6" y="35.8" font-size="10" fill="#d0d0d0" stroke="#d0d0d0" stroke-width="0.2" font-family="Liberation Sans">s17p19</text></svg><svg style="position:absolute;left:258px;top:0px" width="86" height="86" viewBox="0 0 86 86"><rect width="86" height="86" fill="#000"/><g filter="url(#bl)"><path d="M0 35 L30 22 L86 12 L86 27 L55 28 L25 34 L0 45 Z" fill="#545454"/><ellipse cx="55.5" cy="25.5" rx="8" ry="4" fill="#c0c0c0"/><ellipse cx="63" cy="49" rx="17" ry="18" fill="#8a8a8a"/><path d="M13 45 Q20 30 38 27 Q55 30 58 45 Q56 62 55 78 L52 86 L26 86 Q13 68 13 45 Z" fill="#cfcfcf"/><ellipse cx="80" cy="86" rx="20" ry="18" fill="#555"/><path d="M50 48 Q58 39 66 36 Q73 37 77.5 47 Q77 54 71 60 Q63 61 55 56 Q49 51 50 48 Z" fill="#c2c2c2"/><path d="M18 42 Q21 31 40 29 Q58 29 57 31 Q53 43 40 50 Q24 50 18 42 Z" fill="#d0d0d0"/></g><path d="M18 42 Q21 31 40 29 Q58 29 57 31 Q53 43 40 50 Q24 50 18 42 Z" fill="none" stroke="#e8e030" stroke-width="1.6"/><text x="3.3" y="11.8" font-size="10.0" fill="#d8d8d8" stroke="#d8d8d8" stroke-width="0.3" font-family="Liberation Sans">Gated Chest 8.0 SPO</text><text x="2.6" y="35.8" font-size="10" fill="#d0d0d0" stroke="#d0d0d0" stroke-width="0.2" font-family="Liberation Sans">s16p19</text></svg><svg style="position:absolute;left:0px;top:86px" width="86" height="86" viewBox="0 0 86 86"><rect width="86" height="86" fill="#000"/><g filter="url(#bl)"><path d="M0 17 L40 13 L86 16 L86 30 L45 27 L0 34 Z" fill="#545454"/><path d="M1 30 Q14 23 27 24" stroke="#a8a8a8" stroke-width="2.5" fill="none" stroke-linecap="round"/><ellipse cx="52" cy="26" rx="8" ry="4.6" fill="#c0c0c0"/><ellipse cx="64" cy="49" rx="16" ry="19" fill="#8a8a8a"/><path d="M13 46 Q18 30 38 28 Q52 32 56 46 Q55 62 52 74 L46 86 L24 86 Q12 65 13 46 Z" fill="#cfcfcf"/><path d="M58 86 L64 68 L86 62 L86 86 Z" fill="#5a5a5a"/><ellipse cx="64.5" cy="48" rx="12.3" ry="12" fill="#c2c2c2"/><path d="M15 45 Q22 28 38 29 Q52 33 54 41 Q49 52 53 62 Q40 61 32 53 Q22 49 15 45 Z" fill="#d0d0d0"/></g><path d="M15 45 Q22 28 38 29 Q52 33 54 41 Q49 52 53 62 Q40 61 32 53 Q22 49 15 45 Z" fill="none" stroke="#e8e030" stroke-width="1.6"/><text x="3.3" y="11.8" font-size="10.0" fill="#d8d8d8" stroke="#d8d8d8" stroke-width="0.3" font-family="Liberation Sans">Gated Chest 8.0 SPO</text><text x="2.6" y="35.8" font-size="10" fill="#d0d0d0" stroke="#d0d0d0" stroke-width="0.2" font-family="Liberation Sans">s15p19</text></svg><svg style="position:absolute;left:86px;top:86px" width="86" height="86" viewBox="0 0 86 86"><rect width="86" height="86" fill="#000"/><g filter="url(#bl)"><path d="M0 17 L40 13 L86 16 L86 30 L45 27 L0 34 Z" fill="#545454"/><path d="M1 32 Q14 24 29 24" stroke="#a0a0a0" stroke-width="2.5" fill="none" stroke-linecap="round"/><ellipse cx="50" cy="26" rx="8" ry="4.6" fill="#c0c0c0"/><ellipse cx="66" cy="50" rx="14" ry="20" fill="#8a8a8a"/><path d="M12 48 Q16 30 35 28 Q52 32 57 46 Q56 64 50 76 Q40 82 25 78 Q12 66 12 48 Z" fill="#cfcfcf"/><ellipse cx="44" cy="80" rx="11" ry="7" fill="#bbb"/><path d="M62 86 L64 68 L86 64 L86 86 Z" fill="#5a5a5a"/><ellipse cx="66.3" cy="49.3" rx="10" ry="12.3" fill="#c2c2c2"/><path d="M14 45 Q22 27 42 29 Q55 33 54 38 Q48 50 56 64 Q40 67 22 63 Q13 57 14 45 Z" fill="#d0d0d0"/></g><path d="M14 45 Q22 27 42 29 Q55 33 54 38 Q48 50 56 64 Q40 67 22 63 Q13 57 14 45 Z" fill="none" stroke="#e8e030" stroke-width="1.6"/><text x="3.3" y="11.8" font-size="10.0" fill="#d8d8d8" stroke="#d8d8d8" stroke-width="0.3" font-family="Liberation Sans">Gated Chest 8.0 SPO</text><text x="2.6" y="35.8" font-size="10" fill="#d0d0d0" stroke="#d0d0d0" stroke-width="0.2" font-family="Liberation Sans">s14p19</text></svg><svg style="position:absolute;left:172px;top:86px" width="86" height="86" viewBox="0 0 86 86"><rect width="86" height="86" fill="#000"/><g filter="url(#bl)"><path d="M0 18 L40 14 L86 17 L86 31 L45 28 L0 35 Z" fill="#545454"/><path d="M1 33 Q14 25 29 25" stroke="#999" stroke-width="2.5" fill="none" stroke-linecap="round"/><ellipse cx="52" cy="27" rx="8" ry="4.6" fill="#c0c0c0"/><ellipse cx="66" cy="50" rx="15" ry="19" fill="#8a8a8a"/><path d="M11 48 Q15 30 33 28 Q50 30 54 45 Q54 62 48 72 Q35 76 22 72 Q11 62 11 48 Z" fill="#cfcfcf"/><path d="M30 86 L32 70 Q60 66 86 68 L86 86 Z" fill="#5a5a5a"/><ellipse cx="45" cy="80" rx="10" ry="7" fill="#a8a8a8"/><ellipse cx="66" cy="50" rx="10.4" ry="12.7" fill="#c2c2c2"/><path d="M14 45 Q25 26 45 28 Q53 36 51 47 Q50 58 54 66 Q35 69 18 64 Q12 57 14 45 Z" fill="#d0d0d0"/></g><path d="M14 45 Q25 26 45 28 Q53 36 51 47 Q50 58 54 66 Q35 69 18 64 Q12 57 14 45 Z" fill="none" stroke="#e8e030" stroke-width="1.6"/><text x="3.3" y="11.8" font-size="10.0" fill="#d8d8d8" stroke="#d8d8d8" stroke-width="0.3" font-family="Liberation Sans">Gated Chest 8.0 SPO</text><text x="2.6" y="35.8" font-size="10" fill="#d0d0d0" stroke="#d0d0d0" stroke-width="0.2" font-family="Liberation Sans">s13p19</text></svg><svg style="position:absolute;left:258px;top:86px" width="86" height="86" viewBox="0 0 86 86"><rect width="86" height="86" fill="#000"/><g filter="url(#bl)"><path d="M0 18 L40 14 L86 18 L86 32 L45 29 L0 36 Z" fill="#545454"/><path d="M1 34 Q14 26 29 26" stroke="#999" stroke-width="2.5" fill="none" stroke-linecap="round"/><ellipse cx="54" cy="28" rx="7" ry="4" fill="#c0c0c0"/><ellipse cx="67" cy="52" rx="13" ry="18" fill="#8a8a8a"/><ellipse cx="34" cy="51" rx="21" ry="23" fill="#cfcfcf"/><path d="M22 86 L25 72 Q55 68 86 70 L86 86 Z" fill="#5a5a5a"/><ellipse cx="67.3" cy="51.4" rx="10.4" ry="12.2" fill="#c2c2c2"/><path d="M14 50 Q20 30 32 28 Q45 38 51 50 Q55 62 48 70 Q35 73 20 65 Q12 58 14 50 Z" fill="#d0d0d0"/></g><path d="M14 50 Q20 30 32 28 Q45 38 51 50 Q55 62 48 70 Q35 73 20 65 Q12 58 14 50 Z" fill="none" stroke="#e8e030" stroke-width="1.6"/><text x="3.3" y="11.8" font-size="10.0" fill="#d8d8d8" stroke="#d8d8d8" stroke-width="0.3" font-family="Liberation Sans">Gated Chest 8.0 SPO</text><text x="2.6" y="35.8" font-size="10" fill="#d0d0d0" stroke="#d0d0d0" stroke-width="0.2" font-family="Liberation Sans">s12p19</text></svg><svg style="position:absolute;left:0px;top:172px" width="86" height="86" viewBox="0 0 86 86"><rect width="86" height="86" fill="#000"/><g filter="url(#bl)"><path d="M0 17 Q49 4.5 86 26 L86 86 L0 86 Z" fill="#545454"/><path d="M0 45 Q20 30 56 29 Q75 32 86 42" stroke="#7c7c7c" stroke-width="3.5" fill="none" stroke-linecap="round"/><path d="M0 72 Q43 64.5 86 63 L86 86 L0 86 Z" fill="#707070"/><path d="M63 86 L86 78 L86 86 Z" fill="#000"/><path d="M0 50 Q8 38 17 37 Q13 55 17 72 Q8 74 0 76 Z" fill="#000"/><path d="M77 45 L86 43 L86 61 L78 60 Z" fill="#000"/><ellipse cx="65" cy="52" rx="13" ry="15" fill="#8a8a8a"/><ellipse cx="33.6" cy="50.4" rx="19.5" ry="19.5" fill="#cfcfcf"/><ellipse cx="53" cy="78" rx="9" ry="7" fill="#999"/><path d="M57 50 Q57 42 63 41.5 Q71 42 74 51 Q74 58 70 61 Q64 63 59 61 Q56 56 57 50 Z" fill="#c2c2c2"/><path d="M17 38 Q30 27 47 37 Q53 48 52.5 60 Q45 70 38 69 Q20 69 15 57 Q14 45 17 38 Z" fill="#d0d0d0"/></g><path d="M17 38 Q30 27 47 37 Q53 48 52.5 60 Q45 70 38 69 Q20 69 15 57 Q14 45 17 38 Z" fill="none" stroke="#e8e030" stroke-width="1.6"/><text x="3.3" y="11.8" font-size="10.0" fill="#d8d8d8" stroke="#d8d8d8" stroke-width="0.3" font-family="Liberation Sans">Gated Chest 8.0 SPO</text><text x="2.6" y="35.8" font-size="10" fill="#d0d0d0" stroke="#d0d0d0" stroke-width="0.2" font-family="Liberation Sans">s11p19</text></svg><svg style="position:absolute;left:86px;top:172px" width="86" height="86" viewBox="0 0 86 86"><rect width="86" height="86" fill="#000"/><g filter="url(#bl)"><path d="M0 20 Q40 6.0 86 24 L86 86 L0 86 Z" fill="#545454"/><path d="M0 47 Q20 32 56 30 Q75 33 86 44" stroke="#7c7c7c" stroke-width="3.5" fill="none" stroke-linecap="round"/><path d="M0 72 Q43 64.5 86 63 L86 86 L0 86 Z" fill="#707070"/><path d="M63 86 L86 78 L86 86 Z" fill="#000"/><path d="M0 52 Q8 38 19 37 Q14 58 19 80 Q8 81 0 82 Z" fill="#000"/><path d="M80 45 L86 43 L86 62 L80 62 Z" fill="#000"/><ellipse cx="63.5" cy="51.5" rx="10" ry="13" fill="#8a8a8a"/><ellipse cx="36" cy="51.5" rx="20" ry="18" fill="#cfcfcf"/><ellipse cx="50" cy="78" rx="10" ry="7" fill="#999"/><ellipse cx="64" cy="51.5" rx="6" ry="9" fill="#c2c2c2"/><ellipse cx="36" cy="50" rx="19.8" ry="16.8" fill="#d0d0d0"/></g><ellipse cx="36" cy="50" rx="19.8" ry="16.8" fill="none" stroke="#e8e030" stroke-width="1.6"/><text x="3.3" y="11.8" font-size="10.0" fill="#d8d8d8" stroke="#d8d8d8" stroke-width="0.3" font-family="Liberation Sans">Gated Chest 8.0 SPO</text><text x="2.6" y="35.8" font-size="10" fill="#d0d0d0" stroke="#d0d0d0" stroke-width="0.2" font-family="Liberation Sans">s10p19</text></svg><svg style="position:absolute;left:172px;top:172px" width="86" height="86" viewBox="0 0 86 86"><rect width="86" height="86" fill="#000"/><g filter="url(#bl)"><path d="M0 17 Q40 4.5 86 30 L86 86 L0 86 Z" fill="#545454"/><path d="M0 47.5 Q16 33 40 34 Q60 34 86 47.5" stroke="#7c7c7c" stroke-width="3.5" fill="none" stroke-linecap="round"/><path d="M0 71 Q43 64.0 86 63 L86 86 L0 86 Z" fill="#707070"/><path d="M53 86 L86 69 L86 86 Z" fill="#000"/><path d="M0 52 Q8 39 19 38 Q14 58 18 80 L0 81 Z" fill="#000"/><path d="M75 42 L86 46 L86 66 L78 60 Z" fill="#000"/><ellipse cx="63.5" cy="51.5" rx="9" ry="11.5" fill="#8a8a8a"/><ellipse cx="37" cy="50.5" rx="19.3" ry="16.8" fill="#cfcfcf"/><ellipse cx="47" cy="76" rx="8" ry="6" fill="#999"/><ellipse cx="63.8" cy="51.5" rx="4.4" ry="7.8" fill="#c2c2c2"/><ellipse cx="36.3" cy="49.8" rx="19.8" ry="15.8" fill="#d0d0d0"/></g><ellipse cx="36.3" cy="49.8" rx="19.8" ry="15.8" fill="none" stroke="#e8e030" stroke-width="1.6"/><text x="3.3" y="11.8" font-size="10.0" fill="#d8d8d8" stroke="#d8d8d8" stroke-width="0.3" font-family="Liberation Sans">Gated Chest 8.0 SPO</text><text x="2.6" y="35.8" font-size="10" fill="#d0d0d0" stroke="#d0d0d0" stroke-width="0.2" font-family="Liberation Sans">s9p19</text></svg><svg style="position:absolute;left:258px;top:172px" width="86" height="86" viewBox="0 0 86 86"><rect width="86" height="86" fill="#000"/><g filter="url(#bl)"><path d="M0 18 Q40 4.0 86 30 L86 86 L0 86 Z" fill="#545454"/><path d="M0 48 Q16 34 40 35 Q60 35 86 48" stroke="#7c7c7c" stroke-width="3.5" fill="none" stroke-linecap="round"/><path d="M0 70 Q43 62.0 86 60 L86 86 L0 86 Z" fill="#707070"/><path d="M50 86 L86 62 L86 86 Z" fill="#000"/><path d="M0 54 Q8 40 19 40 Q14 60 19 86 L0 86 Z" fill="#000"/><path d="M75 45 L86 48 L86 64 L78 60 Z" fill="#000"/><ellipse cx="63.5" cy="51" rx="8" ry="10" fill="#8a8a8a"/><ellipse cx="37.2" cy="51" rx="18.3" ry="14.4" fill="#cfcfcf"/><ellipse cx="46" cy="74" rx="8" ry="6" fill="#999"/><ellipse cx="63.5" cy="51" rx="3.9" ry="6.4" fill="#c2c2c2"/><ellipse cx="37.3" cy="51" rx="19.2" ry="13.8" fill="#d0d0d0"/></g><ellipse cx="37.3" cy="51" rx="19.2" ry="13.8" fill="none" stroke="#e8e030" stroke-width="1.6"/><text x="3.3" y="11.8" font-size="10.0" fill="#d8d8d8" stroke="#d8d8d8" stroke-width="0.3" font-family="Liberation Sans">Gated Chest 8.0 SPO</text><text x="2.6" y="35.8" font-size="10" fill="#d0d0d0" stroke="#d0d0d0" stroke-width="0.2" font-family="Liberation Sans">s8p19</text></svg><svg style="position:absolute;left:0px;top:258px" width="86" height="86" viewBox="0 0 86 86"><rect width="86" height="86" fill="#000"/><g filter="url(#bl)"><path d="M0 27 Q45 1.6999999999999993 86 33.6 L86 86 L0 86 Z" fill="#545454"/><path d="M0 52.6 Q17 40 45 37 Q70 38 86 44.8" stroke="#7c7c7c" stroke-width="3.5" fill="none" stroke-linecap="round"/><path d="M3 67 Q8 52 21 44 Q25 56 22 67 Z" fill="#000"/><ellipse cx="39.5" cy="52" rx="17.5" ry="10.7" fill="#cfcfcf"/><ellipse cx="4" cy="55" rx="2.5" ry="1.5" fill="#ccc" transform="rotate(-30 4 55)"/><ellipse cx="62.4" cy="52" rx="3.5" ry="6" transform="rotate(-10 62.4 52)" fill="#c2c2c2"/><path d="M25 42 Q40 40 55 45 Q57 55 55 60 Q42 65 27 62 Q20 55 25 42 Z" fill="#d0d0d0"/></g><path d="M25 42 Q40 40 55 45 Q57 55 55 60 Q42 65 27 62 Q20 55 25 42 Z" fill="none" stroke="#e8e030" stroke-width="1.6"/><text x="3.3" y="11.8" font-size="10.0" fill="#d8d8d8" stroke="#d8d8d8" stroke-width="0.3" font-family="Liberation Sans">Gated Chest 8.0 SPO</text><text x="2.6" y="35.8" font-size="10" fill="#d0d0d0" stroke="#d0d0d0" stroke-width="0.2" font-family="Liberation Sans">s7p19</text></svg><svg style="position:absolute;left:86px;top:258px" width="86" height="86" viewBox="0 0 86 86"><rect width="86" height="86" fill="#000"/><g filter="url(#bl)"><path d="M0 24.6 Q28 5.050000000000001 86 32.5 L86 86 L0 86 Z" fill="#545454"/><path d="M0 56 Q22 41 50 40 Q70 41 86 44.8" stroke="#7c7c7c" stroke-width="3.5" fill="none" stroke-linecap="round"/><path d="M2.4 67 Q8 50 23 44 Q29 54 25 67 Z" fill="#000"/><ellipse cx="40.7" cy="52.6" rx="15.5" ry="10" fill="#cfcfcf"/><ellipse cx="4" cy="58" rx="2.5" ry="1.5" fill="#ccc" transform="rotate(-30 4 58)"/><ellipse cx="61.8" cy="52.6" rx="3.3" ry="5.6" transform="rotate(-25 61.8 52.6)" fill="#c2c2c2"/><ellipse cx="40" cy="51.7" rx="14.8" ry="9.8" fill="#d0d0d0"/></g><ellipse cx="40" cy="51.7" rx="14.8" ry="9.8" fill="none" stroke="#e8e030" stroke-width="1.6"/><text x="3.3" y="11.8" font-size="10.0" fill="#d8d8d8" stroke="#d8d8d8" stroke-width="0.3" font-family="Liberation Sans">Gated Chest 8.0 SPO</text><text x="2.6" y="35.8" font-size="10" fill="#d0d0d0" stroke="#d0d0d0" stroke-width="0.2" font-family="Liberation Sans">s6p19</text></svg><svg style="position:absolute;left:172px;top:258px" width="86" height="86" viewBox="0 0 86 86"><rect width="86" height="86" fill="#000"/><g filter="url(#bl)"><path d="M0 24.8 Q20 13.049999999999997 86 36.7 L86 86 L0 86 Z" fill="#545454"/><path d="M0 56.5 Q12 44 39.6 40.7 Q65 42 86 50.5" stroke="#7c7c7c" stroke-width="3.5" fill="none" stroke-linecap="round"/><path d="M9 67 Q12 50 23 45.6 Q31 52 27 67 Z" fill="#000"/><ellipse cx="42.5" cy="52.5" rx="12.8" ry="6" fill="#cfcfcf"/><ellipse cx="6" cy="58" rx="2.5" ry="1.5" fill="#ccc" transform="rotate(-30 6 58)"/><circle cx="59.4" cy="53.5" r="2.9" fill="#c2c2c2"/><ellipse cx="42.5" cy="53.3" rx="12.6" ry="6.8" transform="rotate(8 42.5 53.3)" fill="#d0d0d0"/></g><ellipse cx="42.5" cy="53.3" rx="12.6" ry="6.8" transform="rotate(8 42.5 53.3)" fill="none" stroke="#e8e030" stroke-width="1.6"/><text x="3.3" y="11.8" font-size="10.0" fill="#d8d8d8" stroke="#d8d8d8" stroke-width="0.3" font-family="Liberation Sans">Gated Chest 8.0 SPO</text><text x="2.6" y="35.8" font-size="10" fill="#d0d0d0" stroke="#d0d0d0" stroke-width="0.2" font-family="Liberation Sans">s5p19</text></svg><svg style="position:absolute;left:258px;top:258px" width="86" height="86" viewBox="0 0 86 86"><rect width="86" height="86" fill="#000"/><g filter="url(#bl)"><path d="M0 26 Q20 12.0 86 38 L86 86 L0 86 Z" fill="#545454"/><path d="M0 60 Q14 47 50 44 Q70 45 86 52" stroke="#7c7c7c" stroke-width="3.5" fill="none" stroke-linecap="round"/><path d="M7 67 Q10 52 23 48.6 Q32 54 28 67 Z" fill="#000"/><ellipse cx="50" cy="56" rx="12" ry="6" fill="#5e5e5e"/><ellipse cx="8" cy="60" rx="2.5" ry="1.5" fill="#ccc" transform="rotate(-30 8 60)"/></g><text x="3.3" y="11.8" font-size="10.0" fill="#d8d8d8" stroke="#d8d8d8" stroke-width="0.3" font-family="Liberation Sans">Gated Chest 8.0 SPO</text><text x="2.6" y="35.8" font-size="10" fill="#d0d0d0" stroke="#d0d0d0" stroke-width="0.2" font-family="Liberation Sans">s4p19</text></svg></div><div style="position:absolute;left:0;top:0;width:114px;height:114px;border:3px solid #fff;"></div></div><div style="position:absolute;left:1323px;top:483px;width:120px;height:120px;overflow:hidden;"><div style="position:absolute;left:0;top:0;width:344px;height:344px;transform:scale(0.349);transform-origin:0 0;"><svg style="position:absolute;left:0px;top:0px" width="86" height="86" viewBox="0 0 86 86"><rect width="86" height="86" fill="#000"/><g filter="url(#bl)"><path d="M28 27 L50 19 L86 12 L86 28 L70 28 L50 29 L32 33 Z" fill="#545454"/><ellipse cx="51" cy="23.5" rx="11" ry="3.2" fill="#c0c0c0"/><ellipse cx="46" cy="46" rx="16" ry="12" fill="#666"/><ellipse cx="63" cy="51" rx="14" ry="17" fill="#8a8a8a"/><ellipse cx="43" cy="43" rx="8" ry="7" fill="#a0a0a0"/><ellipse cx="53" cy="33" rx="8.5" ry="6.8" fill="#cfcfcf"/><path d="M18 52 Q20 42 30 40 Q40 42 48 50 Q55 57 56 66 Q57 78 51 86 L25 86 Q17 72 18 52 Z" fill="#cfcfcf"/><ellipse cx="86" cy="86" rx="14" ry="10" fill="#555"/><ellipse cx="10" cy="62" rx="1.5" ry="1.5" fill="#aaa"/><ellipse cx="14" cy="52" rx="1.2" ry="1.2" fill="#999"/><ellipse cx="63.8" cy="50.7" rx="10.2" ry="10.8" transform="rotate(15 63.8 50.7)" fill="#cdcdcd"/><ellipse cx="52.6" cy="33" rx="8.6" ry="7" fill="#d0d0d0"/></g><ellipse cx="63.8" cy="50.7" rx="10.2" ry="10.8" transform="rotate(15 63.8 50.7)" fill="none" stroke="#e32626" stroke-width="1.5"/><ellipse cx="52.6" cy="33" rx="8.6" ry="7" fill="none" stroke="#e8e030" stroke-width="1.6"/><text x="3.3" y="11.8" font-size="10.0" fill="#d8d8d8" stroke="#d8d8d8" stroke-width="0.3" font-family="Liberation Sans">Gated Chest 8.0 SPO</text><text x="2.6" y="35.8" font-size="10" fill="#d0d0d0" stroke="#d0d0d0" stroke-width="0.2" font-family="Liberation Sans">s19p17</text></svg><svg style="position:absolute;left:86px;top:0px" width="86" height="86" viewBox="0 0 86 86"><rect width="86" height="86" fill="#000"/><g filter="url(#bl)"><path d="M19 28 L45 19 L86 12 L86 28 L60 29 L35 32 Z" fill="#545454"/><ellipse cx="52" cy="24" rx="10" ry="3.6" fill="#c0c0c0"/><ellipse cx="45" cy="45" rx="12" ry="9" fill="#6e6e6e"/><ellipse cx="58" cy="50" rx="21" ry="17" fill="#8a8a8a"/><ellipse cx="50" cy="34" rx="10" ry="6.5" fill="#cfcfcf"/><path d="M17 53 Q19 43 30 41 Q42 43 50 51 Q57 58 57 68 Q57 80 51 86 L25 86 Q16 72 17 53 Z" fill="#cfcfcf"/><ellipse cx="86" cy="86" rx="16" ry="12" fill="#555"/><ellipse cx="10" cy="62" rx="1.5" ry="1.5" fill="#aaa"/><path d="M40.5 46 Q45 40 53 42 Q62 37 72 38 Q77 44 74 55 Q70 63 62 60 Q54 55 46 51 Q39 49 40.5 46 Z" fill="#cdcdcd"/><path d="M25 36 Q33 32 43 34 Q50 27 58 27 Q65 30 62 38 Q55 41 45 38 Q35 39 25 36 Z" fill="#d0d0d0"/></g><path d="M40.5 46 Q45 40 53 42 Q62 37 72 38 Q77 44 74 55 Q70 63 62 60 Q54 55 46 51 Q39 49 40.5 46 Z" fill="none" stroke="#e32626" stroke-width="1.5"/><path d="M25 36 Q33 32 43 34 Q50 27 58 27 Q65 30 62 38 Q55 41 45 38 Q35 39 25 36 Z" fill="none" stroke="#e8e030" stroke-width="1.6"/><text x="3.3" y="11.8" font-size="10.0" fill="#d8d8d8" stroke="#d8d8d8" stroke-width="0.3" font-family="Liberation Sans">Gated Chest 8.0 SPO</text><text x="2.6" y="35.8" font-size="10" fill="#d0d0d0" stroke="#d0d0d0" stroke-width="0.2" font-family="Liberation Sans">s18p17</text></svg><svg style="position:absolute;left:172px;top:0px" width="86" height="86" viewBox="0 0 86 86"><rect width="86" height="86" fill="#000"/><g filter="url(#bl)"><path d="M0 35 L30 22 L86 12 L86 27 L55 28 L25 34 L0 43 Z" fill="#545454"/><ellipse cx="55" cy="25" rx="8" ry="3.8" fill="#c0c0c0"/><ellipse cx="60" cy="49" rx="19" ry="18" fill="#8a8a8a"/><ellipse cx="38" cy="37" rx="14" ry="8" fill="#c4c4c4"/><path d="M18 52 Q20 45 32 44 Q45 46 52 55 Q57 63 56 75 L54 86 L28 86 Q17 72 18 52 Z" fill="#cfcfcf"/><ellipse cx="82" cy="86" rx="18" ry="15" fill="#555"/><path d="M45 45 Q55 38 67 36 Q72 38 77 48 Q77 56 70 60.5 Q63 62 55 55 Q48 50 45 45 Z" fill="#cdcdcd"/><ellipse cx="40.7" cy="35.3" rx="17.5" ry="6.8" transform="rotate(-8 40.7 35.3)" fill="#d0d0d0"/></g><path d="M45 45 Q55 38 67 36 Q72 38 77 48 Q77 56 70 60.5 Q63 62 55 55 Q48 50 45 45 Z" fill="none" stroke="#e32626" stroke-width="1.5"/><ellipse cx="40.7" cy="35.3" rx="17.5" ry="6.8" transform="rotate(-8 40.7 35.3)" fill="none" stroke="#e8e030" stroke-width="1.6"/><text x="3.3" y="11.8" font-size="10.0" fill="#d8d8d8" stroke="#d8d8d8" stroke-width="0.3" font-family="Liberation Sans">Gated Chest 8.0 SPO</text><text x="2.6" y="35.8" font-size="10" fill="#d0d0d0" stroke="#d0d0d0" stroke-width="0.2" font-family="Liberation Sans">s17p17</text></svg><svg style="position:absolute;left:258px;top:0px" width="86" height="86" viewBox="0 0 86 86"><rect width="86" height="86" fill="#000"/><g filter="url(#bl)"><path d="M0 35 L30 22 L86 12 L86 27 L55 28 L25 34 L0 45 Z" fill="#545454"/><ellipse cx="55.5" cy="25.5" rx="8" ry="4" fill="#c0c0c0"/><ellipse cx="63" cy="49" rx="17" ry="18" fill="#8a8a8a"/><path d="M13 45 Q20 30 38 27 Q55 30 58 45 Q56 62 55 78 L52 86 L26 86 Q13 68 13 45 Z" fill="#cfcfcf"/><ellipse cx="80" cy="86" rx="20" ry="18" fill="#555"/><path d="M50 48 Q58 39 66 36 Q73 37 77.5 47 Q77 54 71 60 Q63 61 55 56 Q49 51 50 48 Z" fill="#cdcdcd"/><path d="M18 42 Q21 31 40 29 Q58 29 57 31 Q53 43 40 50 Q24 50 18 42 Z" fill="#d0d0d0"/></g><path d="M50 48 Q58 39 66 36 Q73 37 77.5 47 Q77 54 71 60 Q63 61 55 56 Q49 51 50 48 Z" fill="none" stroke="#e32626" stroke-width="1.5"/><path d="M18 42 Q21 31 40 29 Q58 29 57 31 Q53 43 40 50 Q24 50 18 42 Z" fill="none" stroke="#e8e030" stroke-width="1.6"/><text x="3.3" y="11.8" font-size="10.0" fill="#d8d8d8" stroke="#d8d8d8" stroke-width="0.3" font-family="Liberation Sans">Gated Chest 8.0 SPO</text><text x="2.6" y="35.8" font-size="10" fill="#d0d0d0" stroke="#d0d0d0" stroke-width="0.2" font-family="Liberation Sans">s16p17</text></svg><svg style="position:absolute;left:0px;top:86px" width="86" height="86" viewBox="0 0 86 86"><rect width="86" height="86" fill="#000"/><g filter="url(#bl)"><path d="M0 17 L40 13 L86 16 L86 30 L45 27 L0 34 Z" fill="#545454"/><path d="M1 30 Q14 23 27 24" stroke="#a8a8a8" stroke-width="2.5" fill="none" stroke-linecap="round"/><ellipse cx="52" cy="26" rx="8" ry="4.6" fill="#c0c0c0"/><ellipse cx="64" cy="49" rx="16" ry="19" fill="#8a8a8a"/><path d="M13 46 Q18 30 38 28 Q52 32 56 46 Q55 62 52 74 L46 86 L24 86 Q12 65 13 46 Z" fill="#cfcfcf"/><path d="M58 86 L64 68 L86 62 L86 86 Z" fill="#5a5a5a"/><ellipse cx="64.5" cy="48" rx="12.3" ry="12" fill="#cdcdcd"/><path d="M15 45 Q22 28 38 29 Q52 33 54 41 Q49 52 53 62 Q40 61 32 53 Q22 49 15 45 Z" fill="#d0d0d0"/></g><ellipse cx="64.5" cy="48" rx="12.3" ry="12" fill="none" stroke="#e32626" stroke-width="1.5"/><path d="M15 45 Q22 28 38 29 Q52 33 54 41 Q49 52 53 62 Q40 61 32 53 Q22 49 15 45 Z" fill="none" stroke="#e8e030" stroke-width="1.6"/><text x="3.3" y="11.8" font-size="10.0" fill="#d8d8d8" stroke="#d8d8d8" stroke-width="0.3" font-family="Liberation Sans">Gated Chest 8.0 SPO</text><text x="2.6" y="35.8" font-size="10" fill="#d0d0d0" stroke="#d0d0d0" stroke-width="0.2" font-family="Liberation Sans">s15p17</text></svg><svg style="position:absolute;left:86px;top:86px" width="86" height="86" viewBox="0 0 86 86"><rect width="86" height="86" fill="#000"/><g filter="url(#bl)"><path d="M0 17 L40 13 L86 16 L86 30 L45 27 L0 34 Z" fill="#545454"/><path d="M1 32 Q14 24 29 24" stroke="#a0a0a0" stroke-width="2.5" fill="none" stroke-linecap="round"/><ellipse cx="50" cy="26" rx="8" ry="4.6" fill="#c0c0c0"/><ellipse cx="66" cy="50" rx="14" ry="20" fill="#8a8a8a"/><path d="M12 48 Q16 30 35 28 Q52 32 57 46 Q56 64 50 76 Q40 82 25 78 Q12 66 12 48 Z" fill="#cfcfcf"/><ellipse cx="44" cy="80" rx="11" ry="7" fill="#bbb"/><path d="M62 86 L64 68 L86 64 L86 86 Z" fill="#5a5a5a"/><ellipse cx="66.3" cy="49.3" rx="10" ry="12.3" fill="#cdcdcd"/><path d="M14 45 Q22 27 42 29 Q55 33 54 38 Q48 50 56 64 Q40 67 22 63 Q13 57 14 45 Z" fill="#d0d0d0"/></g><ellipse cx="66.3" cy="49.3" rx="10" ry="12.3" fill="none" stroke="#e32626" stroke-width="1.5"/><path d="M14 45 Q22 27 42 29 Q55 33 54 38 Q48 50 56 64 Q40 67 22 63 Q13 57 14 45 Z" fill="none" stroke="#e8e030" stroke-width="1.6"/><text x="3.3" y="11.8" font-size="10.0" fill="#d8d8d8" stroke="#d8d8d8" stroke-width="0.3" font-family="Liberation Sans">Gated Chest 8.0 SPO</text><text x="2.6" y="35.8" font-size="10" fill="#d0d0d0" stroke="#d0d0d0" stroke-width="0.2" font-family="Liberation Sans">s14p17</text></svg><svg style="position:absolute;left:172px;top:86px" width="86" height="86" viewBox="0 0 86 86"><rect width="86" height="86" fill="#000"/><g filter="url(#bl)"><path d="M0 18 L40 14 L86 17 L86 31 L45 28 L0 35 Z" fill="#545454"/><path d="M1 33 Q14 25 29 25" stroke="#999" stroke-width="2.5" fill="none" stroke-linecap="round"/><ellipse cx="52" cy="27" rx="8" ry="4.6" fill="#c0c0c0"/><ellipse cx="66" cy="50" rx="15" ry="19" fill="#8a8a8a"/><path d="M11 48 Q15 30 33 28 Q50 30 54 45 Q54 62 48 72 Q35 76 22 72 Q11 62 11 48 Z" fill="#cfcfcf"/><path d="M30 86 L32 70 Q60 66 86 68 L86 86 Z" fill="#5a5a5a"/><ellipse cx="45" cy="80" rx="10" ry="7" fill="#a8a8a8"/><ellipse cx="66" cy="50" rx="10.4" ry="12.7" fill="#cdcdcd"/><path d="M14 45 Q25 26 45 28 Q53 36 51 47 Q50 58 54 66 Q35 69 18 64 Q12 57 14 45 Z" fill="#d0d0d0"/></g><ellipse cx="66" cy="50" rx="10.4" ry="12.7" fill="none" stroke="#e32626" stroke-width="1.5"/><path d="M14 45 Q25 26 45 28 Q53 36 51 47 Q50 58 54 66 Q35 69 18 64 Q12 57 14 45 Z" fill="none" stroke="#e8e030" stroke-width="1.6"/><text x="3.3" y="11.8" font-size="10.0" fill="#d8d8d8" stroke="#d8d8d8" stroke-width="0.3" font-family="Liberation Sans">Gated Chest 8.0 SPO</text><text x="2.6" y="35.8" font-size="10" fill="#d0d0d0" stroke="#d0d0d0" stroke-width="0.2" font-family="Liberation Sans">s13p17</text></svg><svg style="position:absolute;left:258px;top:86px" width="86" height="86" viewBox="0 0 86 86"><rect width="86" height="86" fill="#000"/><g filter="url(#bl)"><path d="M0 18 L40 14 L86 18 L86 32 L45 29 L0 36 Z" fill="#545454"/><path d="M1 34 Q14 26 29 26" stroke="#999" stroke-width="2.5" fill="none" stroke-linecap="round"/><ellipse cx="54" cy="28" rx="7" ry="4" fill="#c0c0c0"/><ellipse cx="67" cy="52" rx="13" ry="18" fill="#8a8a8a"/><ellipse cx="34" cy="51" rx="21" ry="23" fill="#cfcfcf"/><path d="M22 86 L25 72 Q55 68 86 70 L86 86 Z" fill="#5a5a5a"/><ellipse cx="67.3" cy="51.4" rx="10.4" ry="12.2" fill="#cdcdcd"/><path d="M14 50 Q20 30 32 28 Q45 38 51 50 Q55 62 48 70 Q35 73 20 65 Q12 58 14 50 Z" fill="#d0d0d0"/></g><ellipse cx="67.3" cy="51.4" rx="10.4" ry="12.2" fill="none" stroke="#e32626" stroke-width="1.5"/><path d="M14 50 Q20 30 32 28 Q45 38 51 50 Q55 62 48 70 Q35 73 20 65 Q12 58 14 50 Z" fill="none" stroke="#e8e030" stroke-width="1.6"/><text x="3.3" y="11.8" font-size="10.0" fill="#d8d8d8" stroke="#d8d8d8" stroke-width="0.3" font-family="Liberation Sans">Gated Chest 8.0 SPO</text><text x="2.6" y="35.8" font-size="10" fill="#d0d0d0" stroke="#d0d0d0" stroke-width="0.2" font-family="Liberation Sans">s12p17</text></svg><svg style="position:absolute;left:0px;top:172px" width="86" height="86" viewBox="0 0 86 86"><rect width="86" height="86" fill="#000"/><g filter="url(#bl)"><path d="M0 17 Q49 4.5 86 26 L86 86 L0 86 Z" fill="#545454"/><path d="M0 45 Q20 30 56 29 Q75 32 86 42" stroke="#7c7c7c" stroke-width="3.5" fill="none" stroke-linecap="round"/><path d="M0 72 Q43 64.5 86 63 L86 86 L0 86 Z" fill="#707070"/><path d="M63 86 L86 78 L86 86 Z" fill="#000"/><path d="M0 50 Q8 38 17 37 Q13 55 17 72 Q8 74 0 76 Z" fill="#000"/><path d="M77 45 L86 43 L86 61 L78 60 Z" fill="#000"/><ellipse cx="65" cy="52" rx="13" ry="15" fill="#8a8a8a"/><ellipse cx="33.6" cy="50.4" rx="19.5" ry="19.5" fill="#cfcfcf"/><ellipse cx="53" cy="78" rx="9" ry="7" fill="#999"/><path d="M57 50 Q57 42 63 41.5 Q71 42 74 51 Q74 58 70 61 Q64 63 59 61 Q56 56 57 50 Z" fill="#cdcdcd"/><path d="M17 38 Q30 27 47 37 Q53 48 52.5 60 Q45 70 38 69 Q20 69 15 57 Q14 45 17 38 Z" fill="#d0d0d0"/></g><path d="M57 50 Q57 42 63 41.5 Q71 42 74 51 Q74 58 70 61 Q64 63 59 61 Q56 56 57 50 Z" fill="none" stroke="#e32626" stroke-width="1.5"/><path d="M17 38 Q30 27 47 37 Q53 48 52.5 60 Q45 70 38 69 Q20 69 15 57 Q14 45 17 38 Z" fill="none" stroke="#e8e030" stroke-width="1.6"/><text x="3.3" y="11.8" font-size="10.0" fill="#d8d8d8" stroke="#d8d8d8" stroke-width="0.3" font-family="Liberation Sans">Gated Chest 8.0 SPO</text><text x="2.6" y="35.8" font-size="10" fill="#d0d0d0" stroke="#d0d0d0" stroke-width="0.2" font-family="Liberation Sans">s11p17</text></svg><svg style="position:absolute;left:86px;top:172px" width="86" height="86" viewBox="0 0 86 86"><rect width="86" height="86" fill="#000"/><g filter="url(#bl)"><path d="M0 20 Q40 6.0 86 24 L86 86 L0 86 Z" fill="#545454"/><path d="M0 47 Q20 32 56 30 Q75 33 86 44" stroke="#7c7c7c" stroke-width="3.5" fill="none" stroke-linecap="round"/><path d="M0 72 Q43 64.5 86 63 L86 86 L0 86 Z" fill="#707070"/><path d="M63 86 L86 78 L86 86 Z" fill="#000"/><path d="M0 52 Q8 38 19 37 Q14 58 19 80 Q8 81 0 82 Z" fill="#000"/><path d="M80 45 L86 43 L86 62 L80 62 Z" fill="#000"/><ellipse cx="63.5" cy="51.5" rx="10" ry="13" fill="#8a8a8a"/><ellipse cx="36" cy="51.5" rx="20" ry="18" fill="#cfcfcf"/><ellipse cx="50" cy="78" rx="10" ry="7" fill="#999"/><ellipse cx="64" cy="51.5" rx="6" ry="9" fill="#cdcdcd"/><ellipse cx="36" cy="50" rx="19.8" ry="16.8" fill="#d0d0d0"/></g><ellipse cx="64" cy="51.5" rx="6" ry="9" fill="none" stroke="#e32626" stroke-width="1.5"/><ellipse cx="36" cy="50" rx="19.8" ry="16.8" fill="none" stroke="#e8e030" stroke-width="1.6"/><text x="3.3" y="11.8" font-size="10.0" fill="#d8d8d8" stroke="#d8d8d8" stroke-width="0.3" font-family="Liberation Sans">Gated Chest 8.0 SPO</text><text x="2.6" y="35.8" font-size="10" fill="#d0d0d0" stroke="#d0d0d0" stroke-width="0.2" font-family="Liberation Sans">s10p17</text></svg><svg style="position:absolute;left:172px;top:172px" width="86" height="86" viewBox="0 0 86 86"><rect width="86" height="86" fill="#000"/><g filter="url(#bl)"><path d="M0 17 Q40 4.5 86 30 L86 86 L0 86 Z" fill="#545454"/><path d="M0 47.5 Q16 33 40 34 Q60 34 86 47.5" stroke="#7c7c7c" stroke-width="3.5" fill="none" stroke-linecap="round"/><path d="M0 71 Q43 64.0 86 63 L86 86 L0 86 Z" fill="#707070"/><path d="M53 86 L86 69 L86 86 Z" fill="#000"/><path d="M0 52 Q8 39 19 38 Q14 58 18 80 L0 81 Z" fill="#000"/><path d="M75 42 L86 46 L86 66 L78 60 Z" fill="#000"/><ellipse cx="63.5" cy="51.5" rx="9" ry="11.5" fill="#8a8a8a"/><ellipse cx="37" cy="50.5" rx="19.3" ry="16.8" fill="#cfcfcf"/><ellipse cx="47" cy="76" rx="8" ry="6" fill="#999"/><ellipse cx="63.8" cy="51.5" rx="4.4" ry="7.8" fill="#cdcdcd"/><ellipse cx="36.3" cy="49.8" rx="19.8" ry="15.8" fill="#d0d0d0"/></g><ellipse cx="63.8" cy="51.5" rx="4.4" ry="7.8" fill="none" stroke="#e32626" stroke-width="1.5"/><ellipse cx="36.3" cy="49.8" rx="19.8" ry="15.8" fill="none" stroke="#e8e030" stroke-width="1.6"/><text x="3.3" y="11.8" font-size="10.0" fill="#d8d8d8" stroke="#d8d8d8" stroke-width="0.3" font-family="Liberation Sans">Gated Chest 8.0 SPO</text><text x="2.6" y="35.8" font-size="10" fill="#d0d0d0" stroke="#d0d0d0" stroke-width="0.2" font-family="Liberation Sans">s9p17</text></svg><svg style="position:absolute;left:258px;top:172px" width="86" height="86" viewBox="0 0 86 86"><rect width="86" height="86" fill="#000"/><g filter="url(#bl)"><path d="M0 18 Q40 4.0 86 30 L86 86 L0 86 Z" fill="#545454"/><path d="M0 48 Q16 34 40 35 Q60 35 86 48" stroke="#7c7c7c" stroke-width="3.5" fill="none" stroke-linecap="round"/><path d="M0 70 Q43 62.0 86 60 L86 86 L0 86 Z" fill="#707070"/><path d="M50 86 L86 62 L86 86 Z" fill="#000"/><path d="M0 54 Q8 40 19 40 Q14 60 19 86 L0 86 Z" fill="#000"/><path d="M75 45 L86 48 L86 64 L78 60 Z" fill="#000"/><ellipse cx="63.5" cy="51" rx="8" ry="10" fill="#8a8a8a"/><ellipse cx="37.2" cy="51" rx="18.3" ry="14.4" fill="#cfcfcf"/><ellipse cx="46" cy="74" rx="8" ry="6" fill="#999"/><ellipse cx="63.5" cy="51" rx="3.9" ry="6.4" fill="#cdcdcd"/><ellipse cx="37.3" cy="51" rx="19.2" ry="13.8" fill="#d0d0d0"/></g><ellipse cx="63.5" cy="51" rx="3.9" ry="6.4" fill="none" stroke="#e32626" stroke-width="1.5"/><ellipse cx="37.3" cy="51" rx="19.2" ry="13.8" fill="none" stroke="#e8e030" stroke-width="1.6"/><text x="3.3" y="11.8" font-size="10.0" fill="#d8d8d8" stroke="#d8d8d8" stroke-width="0.3" font-family="Liberation Sans">Gated Chest 8.0 SPO</text><text x="2.6" y="35.8" font-size="10" fill="#d0d0d0" stroke="#d0d0d0" stroke-width="0.2" font-family="Liberation Sans">s8p17</text></svg><svg style="position:absolute;left:0px;top:258px" width="86" height="86" viewBox="0 0 86 86"><rect width="86" height="86" fill="#000"/><g filter="url(#bl)"><path d="M0 27 Q45 1.6999999999999993 86 33.6 L86 86 L0 86 Z" fill="#545454"/><path d="M0 52.6 Q17 40 45 37 Q70 38 86 44.8" stroke="#7c7c7c" stroke-width="3.5" fill="none" stroke-linecap="round"/><path d="M3 67 Q8 52 21 44 Q25 56 22 67 Z" fill="#000"/><ellipse cx="39.5" cy="52" rx="17.5" ry="10.7" fill="#cfcfcf"/><ellipse cx="4" cy="55" rx="2.5" ry="1.5" fill="#ccc" transform="rotate(-30 4 55)"/><ellipse cx="62.4" cy="52" rx="3.5" ry="6" transform="rotate(-10 62.4 52)" fill="#cdcdcd"/><path d="M25 42 Q40 40 55 45 Q57 55 55 60 Q42 65 27 62 Q20 55 25 42 Z" fill="#d0d0d0"/></g><ellipse cx="62.4" cy="52" rx="3.5" ry="6" transform="rotate(-10 62.4 52)" fill="none" stroke="#e32626" stroke-width="1.5"/><path d="M25 42 Q40 40 55 45 Q57 55 55 60 Q42 65 27 62 Q20 55 25 42 Z" fill="none" stroke="#e8e030" stroke-width="1.6"/><text x="3.3" y="11.8" font-size="10.0" fill="#d8d8d8" stroke="#d8d8d8" stroke-width="0.3" font-family="Liberation Sans">Gated Chest 8.0 SPO</text><text x="2.6" y="35.8" font-size="10" fill="#d0d0d0" stroke="#d0d0d0" stroke-width="0.2" font-family="Liberation Sans">s7p17</text></svg><svg style="position:absolute;left:86px;top:258px" width="86" height="86" viewBox="0 0 86 86"><rect width="86" height="86" fill="#000"/><g filter="url(#bl)"><path d="M0 24.6 Q28 5.050000000000001 86 32.5 L86 86 L0 86 Z" fill="#545454"/><path d="M0 56 Q22 41 50 40 Q70 41 86 44.8" stroke="#7c7c7c" stroke-width="3.5" fill="none" stroke-linecap="round"/><path d="M2.4 67 Q8 50 23 44 Q29 54 25 67 Z" fill="#000"/><ellipse cx="40.7" cy="52.6" rx="15.5" ry="10" fill="#cfcfcf"/><ellipse cx="4" cy="58" rx="2.5" ry="1.5" fill="#ccc" transform="rotate(-30 4 58)"/><ellipse cx="61.8" cy="52.6" rx="3.3" ry="5.6" transform="rotate(-25 61.8 52.6)" fill="#cdcdcd"/><ellipse cx="40" cy="51.7" rx="14.8" ry="9.8" fill="#d0d0d0"/></g><ellipse cx="61.8" cy="52.6" rx="3.3" ry="5.6" transform="rotate(-25 61.8 52.6)" fill="none" stroke="#e32626" stroke-width="1.5"/><ellipse cx="40" cy="51.7" rx="14.8" ry="9.8" fill="none" stroke="#e8e030" stroke-width="1.6"/><text x="3.3" y="11.8" font-size="10.0" fill="#d8d8d8" stroke="#d8d8d8" stroke-width="0.3" font-family="Liberation Sans">Gated Chest 8.0 SPO</text><text x="2.6" y="35.8" font-size="10" fill="#d0d0d0" stroke="#d0d0d0" stroke-width="0.2" font-family="Liberation Sans">s6p17</text></svg><svg style="position:absolute;left:172px;top:258px" width="86" height="86" viewBox="0 0 86 86"><rect width="86" height="86" fill="#000"/><g filter="url(#bl)"><path d="M0 24.8 Q20 13.049999999999997 86 36.7 L86 86 L0 86 Z" fill="#545454"/><path d="M0 56.5 Q12 44 39.6 40.7 Q65 42 86 50.5" stroke="#7c7c7c" stroke-width="3.5" fill="none" stroke-linecap="round"/><path d="M9 67 Q12 50 23 45.6 Q31 52 27 67 Z" fill="#000"/><ellipse cx="42.5" cy="52.5" rx="12.8" ry="6" fill="#cfcfcf"/><ellipse cx="6" cy="58" rx="2.5" ry="1.5" fill="#ccc" transform="rotate(-30 6 58)"/><circle cx="59.4" cy="53.5" r="2.9" fill="#cdcdcd"/><ellipse cx="42.5" cy="53.3" rx="12.6" ry="6.8" transform="rotate(8 42.5 53.3)" fill="#d0d0d0"/></g><circle cx="59.4" cy="53.5" r="2.9" fill="none" stroke="#e32626" stroke-width="1.5"/><ellipse cx="42.5" cy="53.3" rx="12.6" ry="6.8" transform="rotate(8 42.5 53.3)" fill="none" stroke="#e8e030" stroke-width="1.6"/><text x="3.3" y="11.8" font-size="10.0" fill="#d8d8d8" stroke="#d8d8d8" stroke-width="0.3" font-family="Liberation Sans">Gated Chest 8.0 SPO</text><text x="2.6" y="35.8" font-size="10" fill="#d0d0d0" stroke="#d0d0d0" stroke-width="0.2" font-family="Liberation Sans">s5p17</text></svg><svg style="position:absolute;left:258px;top:258px" width="86" height="86" viewBox="0 0 86 86"><rect width="86" height="86" fill="#000"/><g filter="url(#bl)"><path d="M0 26 Q20 12.0 86 38 L86 86 L0 86 Z" fill="#545454"/><path d="M0 60 Q14 47 50 44 Q70 45 86 52" stroke="#7c7c7c" stroke-width="3.5" fill="none" stroke-linecap="round"/><path d="M7 67 Q10 52 23 48.6 Q32 54 28 67 Z" fill="#000"/><ellipse cx="50" cy="56" rx="12" ry="6" fill="#5e5e5e"/><ellipse cx="8" cy="60" rx="2.5" ry="1.5" fill="#ccc" transform="rotate(-30 8 60)"/></g><text x="3.3" y="11.8" font-size="10.0" fill="#d8d8d8" stroke="#d8d8d8" stroke-width="0.3" font-family="Liberation Sans">Gated Chest 8.0 SPO</text><text x="2.6" y="35.8" font-size="10" fill="#d0d0d0" stroke="#d0d0d0" stroke-width="0.2" font-family="Liberation Sans">s4p17</text></svg></div><div style="position:absolute;left:0;top:0;width:114px;height:114px;border:3px solid #fff;"></div></div><div class="r" style="left:288px;top:751px;width:55px;height:22px;background:#3a3a3a;box-shadow:inset 0 0 0 1px #444;"></div><div class="r" style="left:345px;top:751px;width:41px;height:22px;background:#3a3a3a;box-shadow:inset 0 0 0 1px #444;"></div><div class="r" style="left:387px;top:751px;width:100px;height:22px;background:#3a3a3a;box-shadow:inset 0 0 0 1px #444;"></div><div class="r" style="left:282px;top:750px;width:1254px;height:1px;background:#2e2e2e;"></div><div class="r" style="left:488px;top:750px;width:50px;height:23px;background:#555555;"></div><div class="t" style="top:757.78px;font-size:10.3px;line-height:10.3px;color:#dcdcdc;left:296.70px;">Browser</div><div class="t" style="top:757.78px;font-size:10.3px;line-height:10.3px;color:#dcdcdc;left:353.50px;">View</div><div class="t" style="top:757.84px;font-size:10.23px;line-height:10.23px;color:#dcdcdc;left:395.30px;">QMass 8.1 #1</div><svg style="position:absolute;left:465px;top:757px" width="11" height="11"><path d="M2 1.5 L8.5 9.5" stroke="#111" stroke-width="1.2"/><path d="M10 1 L1.5 10" stroke="#111" stroke-width="1.8"/></svg><div class="t" style="top:757.78px;font-size:10.3px;line-height:10.3px;color:#e8e8e8;left:498.20px;">Report</div></body></html>
